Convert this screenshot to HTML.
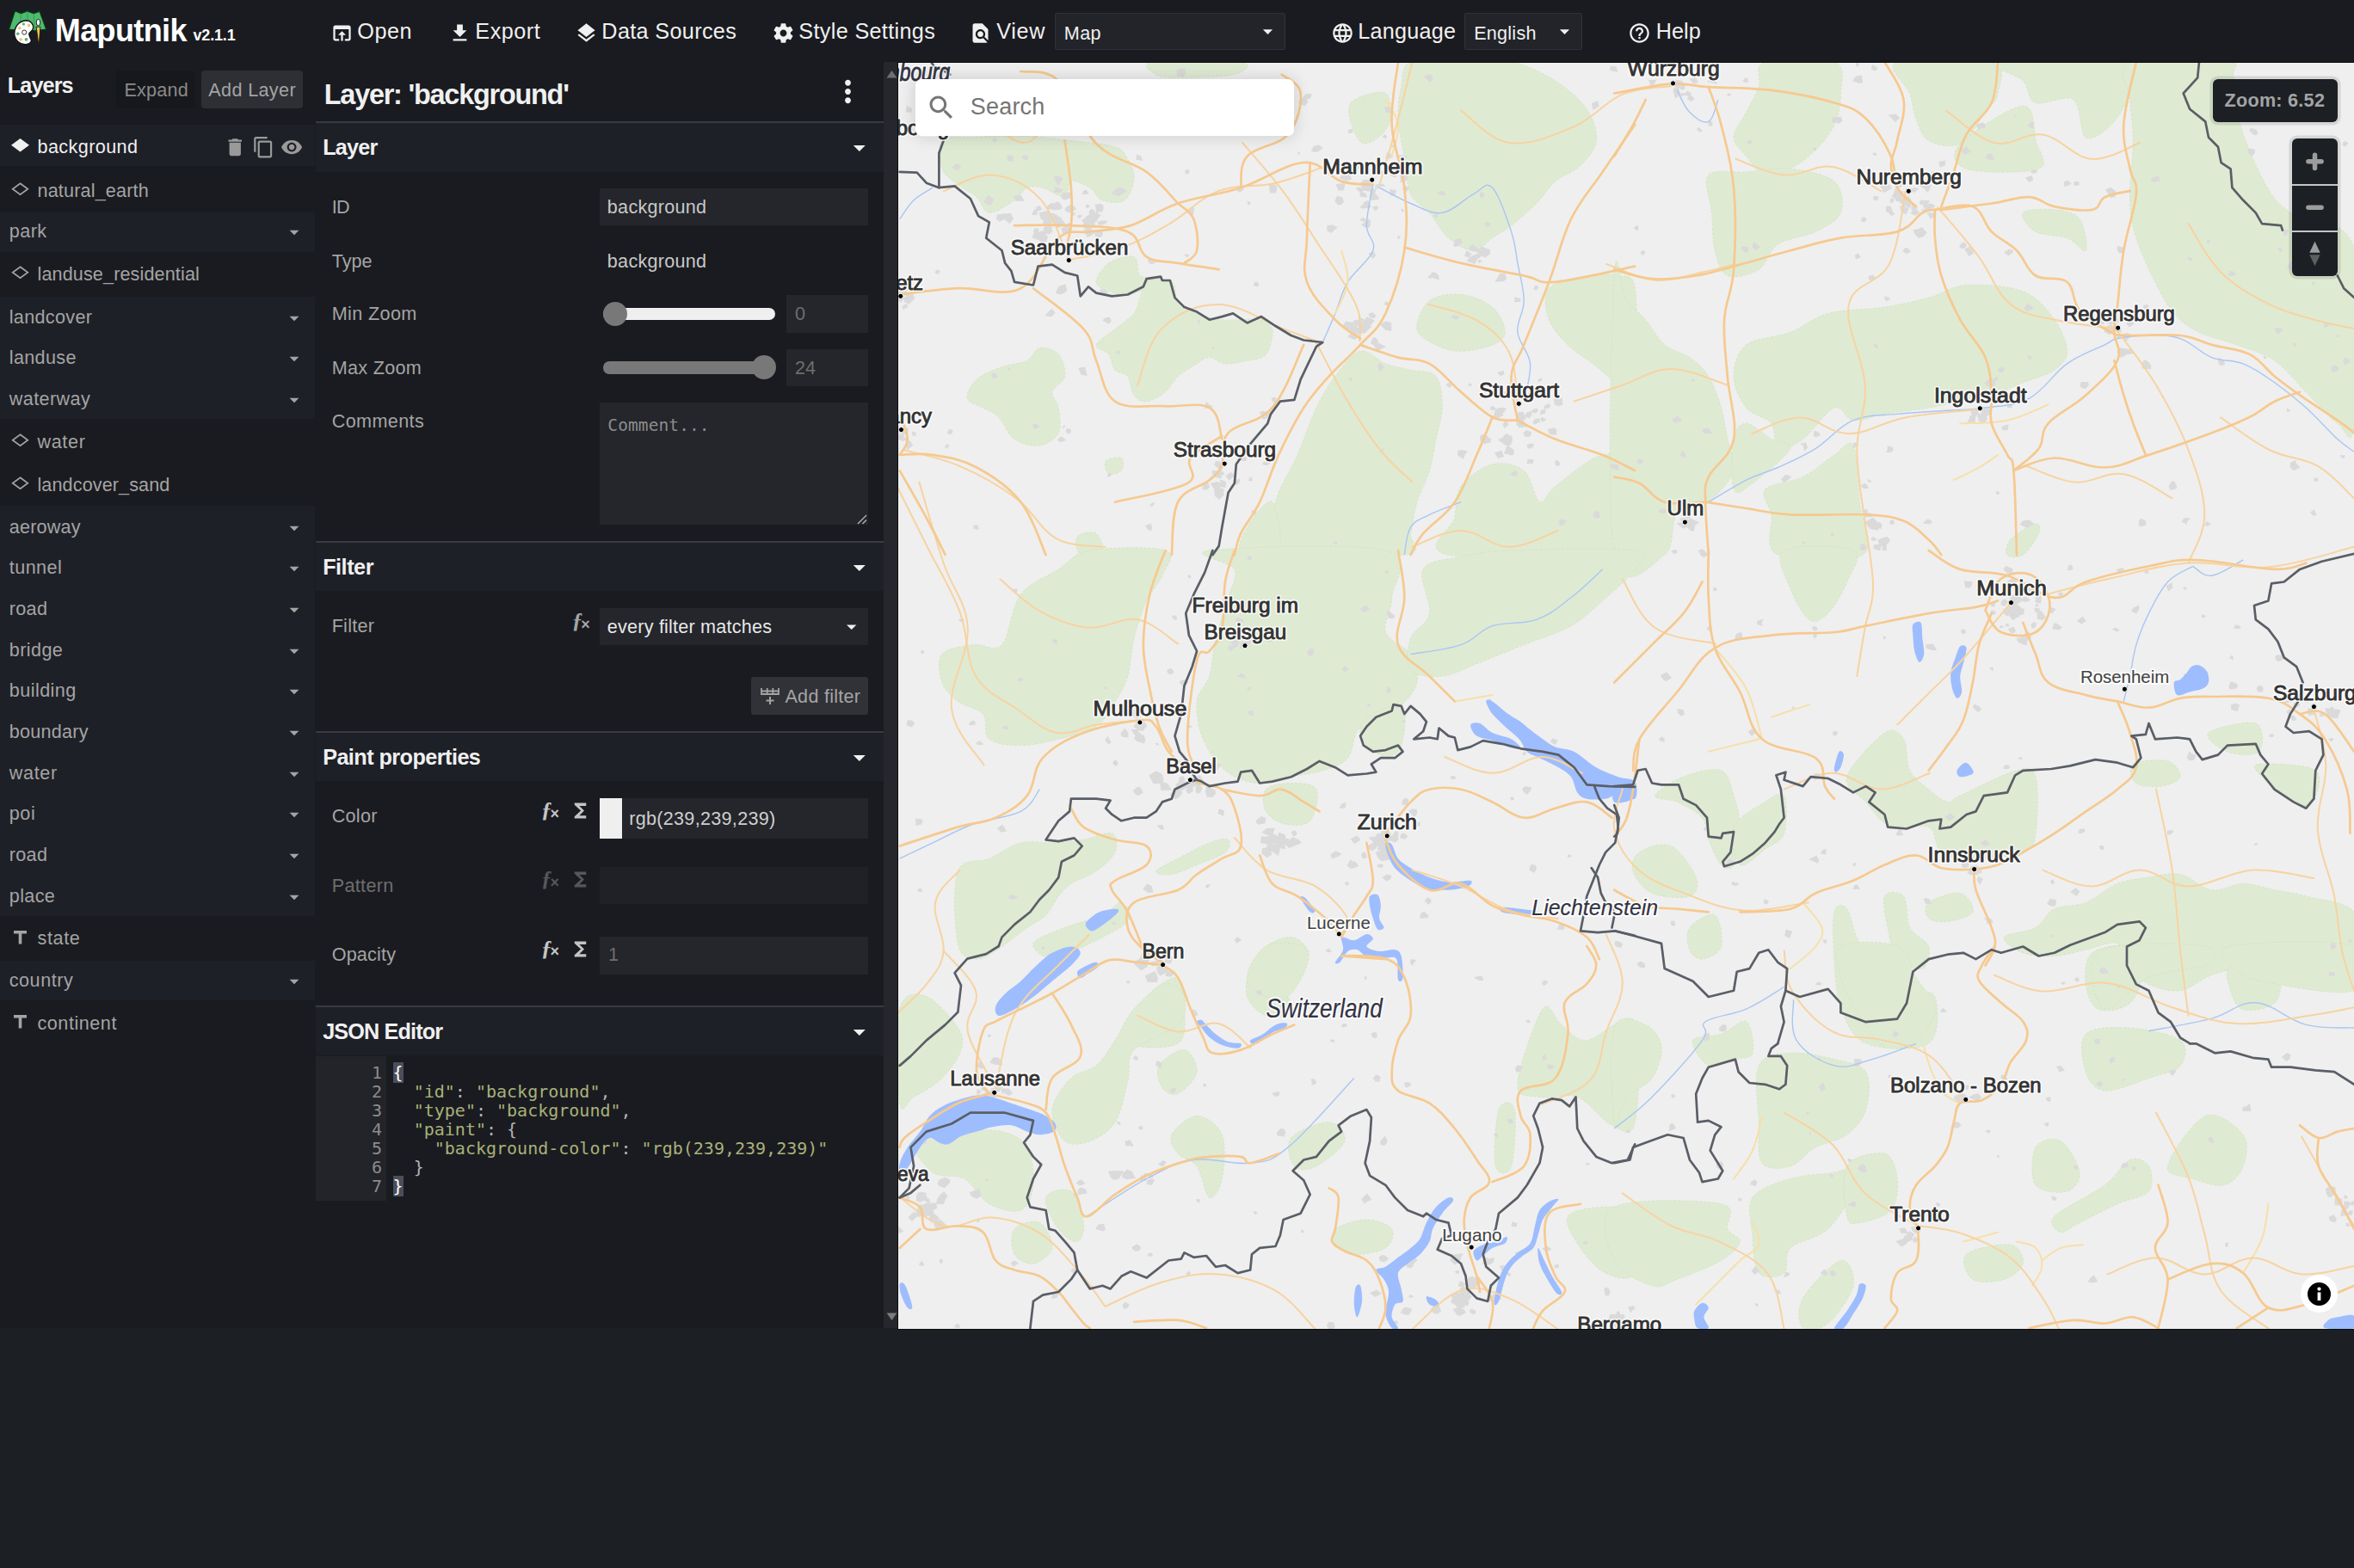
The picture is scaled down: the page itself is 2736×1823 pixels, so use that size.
<!DOCTYPE html>
<html lang="en"><head><meta charset="utf-8"><title>Maputnik</title><style>
html,body{margin:0;padding:0;}
body{width:2736px;height:1823px;overflow:hidden;background:#1c1f24;font-family:"Liberation Sans",sans-serif;position:relative;}
.t{position:absolute;white-space:pre;font-weight:400;font-kerning:normal;}
.ic{position:absolute;display:block;overflow:visible;}
.cmn{font-family:'DejaVu Sans Mono', 'Liberation Mono', monospace;font-size:20px;line-height:21.9px;color:#8c8c8c;text-align:right;}
.cml{font-family:'DejaVu Sans Mono', 'Liberation Mono', monospace;font-size:20px;line-height:21.9px;color:#b4b4b4;}
.cs{color:#a8b17a;}
.cp{color:#b4b4b4;}
.cb{color:#fff;background:#4b4e5b;}
</style></head>
<body>
<div class="toolbar" style="position:absolute;left:0;top:0;width:2736px;height:72px;background:#1a1b20"><svg class="ic" style="left:0;top:0" width="64" height="60" viewBox="0 0 64 60"><polygon points="10.4,34.1 17.4,12.7 24.4,15.6 31.7,12.9 39.1,15.6 46.1,13.2 53.7,34.1 40.7,35.6 32.1,34.7 23.1,35.6" fill="#50b86f" stroke="#053d12" stroke-width="1.3" stroke-linejoin="round"/><path d="M24.4 15.6L23.1 35.6" stroke="#2f9a52" stroke-width="0.9"/><path d="M31.7 12.9L32.4 34.7" stroke="#2f9a52" stroke-width="0.9"/><path d="M39.1 15.6L40.7 35.6" stroke="#2f9a52" stroke-width="0.9"/><path d="M31.1 23.7C35.9 24.2 39.1 28.3 38.6 32.5C38.4 35.3 35.9 36.6 34.3 38.2C32.7 39.8 34.6 42.7 36.2 46.2C37.2 49.0 33.6 51.9 29.2 51.7C23.1 51.6 17.4 47.1 16.8 40.4C16.3 33.1 20.6 23.9 31.1 23.7z" fill="#fff" stroke="#101216" stroke-width="1.4"/><circle cx="27.4" cy="28.0" r="1.6" fill="#5fae7c"/><circle cx="33.6" cy="29.6" r="1.8" fill="#ecc766"/><circle cx="22.8" cy="32.8" r="1.8" fill="#ecc766"/><circle cx="20.7" cy="39.2" r="1.8" fill="#5fae7c"/><circle cx="24.1" cy="45.8" r="1.9" fill="#ecc766"/><circle cx="30.5" cy="45.8" r="1.9" fill="#5fae7c"/><circle cx="28.2" cy="37.6" r="2.6" fill="#fff" stroke="#333" stroke-width="1"/><ellipse cx="44.5" cy="26.1" rx="2.3" ry="3.7" fill="#f4fff4" stroke="#0a1a0c" stroke-width="0.9"/><polygon points="42.1,31.2 46.9,31.2 45.4,50.6 44.6,50.6" fill="#eac459" stroke="#1a1508" stroke-width="0.9" stroke-linejoin="round"/></svg><span class="t" style="left:63.80px;top:11.52px;font-size:36px;line-height:47px;color:#fff;font-weight:700;letter-spacing:-0.608px;">Maputnik</span><span class="t" style="left:224.50px;top:29.86px;font-size:18px;line-height:23px;color:#fff;font-weight:700;letter-spacing:-0.171px;">v2.1.1</span><svg class="ic" style="left:383.62px;top:25.40px;" width="27" height="27" viewBox="0 0 24 24" fill="#f0f0f0"><path d="M19 4H5c-1.11 0-2 .9-2 2v12c0 1.1.89 2 2 2h4v-2H5V8h14v10h-4v2h4c1.1 0 2-.9 2-2V6c0-1.1-.89-2-2-2zm-7 6l-4 4h3v6h2v-6h3l-4-4z"/></svg><span class="t" style="left:415.37px;top:20.26px;font-size:25.2px;line-height:33px;color:#f0f0f0;letter-spacing:0.535px;">Open</span><svg class="ic" style="left:521.38px;top:25.40px;" width="27" height="27" viewBox="0 0 24 24" fill="#f0f0f0"><path d="M19 9h-4V3H9v6H5l7 7 7-7zM5 18v2h14v-2H5z"/></svg><span class="t" style="left:552.37px;top:20.26px;font-size:25.2px;line-height:33px;color:#f0f0f0;letter-spacing:0.495px;">Export</span><svg class="ic" style="left:667.62px;top:25.40px;" width="27" height="27" viewBox="0 0 24 24" fill="#f0f0f0"><path d="M11.99 18.54l-7.37-5.73L3 14.07l9 7 9-7-1.63-1.27-7.38 5.74zM12 16l7.36-5.73L21 9l-9-7-9 7 1.63 1.27L12 16z"/></svg><span class="t" style="left:699.37px;top:20.26px;font-size:25.2px;line-height:33px;color:#f0f0f0;letter-spacing:0.346px;">Data Sources</span><svg class="ic" style="left:897.41px;top:25.40px;" width="27" height="27" viewBox="0 0 24 24" fill="#f0f0f0"><path d="M19.43 12.98c.04-.32.07-.64.07-.98s-.03-.66-.07-.98l2.11-1.65c.19-.15.24-.42.12-.64l-2-3.46c-.12-.22-.39-.3-.61-.22l-2.49 1c-.52-.4-1.08-.73-1.69-.98l-.38-2.65C14.46 2.18 14.25 2 14 2h-4c-.25 0-.46.18-.49.42l-.38 2.65c-.61.25-1.17.59-1.69.98l-2.49-1c-.23-.09-.49 0-.61.22l-2 3.46c-.13.22-.07.49.12.64l2.11 1.65c-.04.32-.07.65-.07.98s.03.66.07.98l-2.11 1.65c-.19.15-.24.42-.12.64l2 3.46c.12.22.39.3.61.22l2.49-1c.52.4 1.08.73 1.69.98l.38 2.65c.03.24.24.42.49.42h4c.25 0 .46-.18.49-.42l.38-2.65c.61-.25 1.17-.59 1.69-.98l2.49 1c.23.09.49 0 .61-.22l2-3.46c.12-.22.07-.49-.12-.64l-2.11-1.65zM12 15.5c-1.93 0-3.5-1.57-3.5-3.5s1.57-3.5 3.5-3.5 3.5 1.57 3.5 3.5-1.57 3.5-3.5 3.5z"/></svg><span class="t" style="left:928.37px;top:20.26px;font-size:25.2px;line-height:33px;color:#f0f0f0;letter-spacing:0.339px;">Style Settings</span><svg class="ic" style="left:1126.10px;top:25.40px;" width="27" height="27" viewBox="0 0 24 24" fill="#f0f0f0"><path d="M20 19.59V8l-6-6H6c-1.1 0-1.99.9-1.99 2L4 20c0 1.1.89 2 1.99 2H18c.45 0 .85-.15 1.19-.4l-4.43-4.43c-.8.52-1.74.83-2.76.83-2.76 0-5-2.24-5-5s2.24-5 5-5 5 2.24 5 5c0 1.02-.31 1.96-.83 2.75L20 19.59zM9 13c0 1.66 1.34 3 3 3s3-1.34 3-3-1.34-3-3-3-3 1.34-3 3z"/></svg><span class="t" style="left:1158.37px;top:20.26px;font-size:25.2px;line-height:33px;color:#f0f0f0;letter-spacing:0.656px;">View</span><svg class="ic" style="left:1546.75px;top:25.40px;" width="27" height="27" viewBox="0 0 24 24" fill="#f0f0f0"><path d="M11.99 2C6.47 2 2 6.48 2 12s4.47 10 9.99 10C17.52 22 22 17.52 22 12S17.52 2 11.99 2zm6.93 6h-2.95c-.32-1.25-.78-2.45-1.38-3.56 1.84.63 3.37 1.91 4.33 3.56zM12 4.04c.83 1.2 1.48 2.53 1.91 3.96h-3.82c.43-1.43 1.08-2.76 1.91-3.96zM4.26 14C4.1 13.36 4 12.69 4 12s.1-1.36.26-2h3.38c-.08.66-.14 1.32-.14 2 0 .68.06 1.34.14 2H4.26zm.82 2h2.95c.32 1.25.78 2.45 1.38 3.56-1.84-.63-3.37-1.9-4.33-3.56zm2.95-8H5.08c.96-1.66 2.49-2.93 4.33-3.56C8.81 5.55 8.35 6.75 8.03 8zM12 19.96c-.83-1.2-1.48-2.53-1.91-3.96h3.82c-.43 1.43-1.08 2.76-1.91 3.96zM14.34 14H9.66c-.09-.66-.16-1.32-.16-2 0-.68.07-1.35.16-2h4.68c.09.65.16 1.32.16 2 0 .68-.07 1.34-.16 2zm.25 5.56c.6-1.11 1.06-2.31 1.38-3.56h2.95c-.96 1.65-2.49 2.93-4.33 3.56zM16.36 14c.08-.66.14-1.32.14-2 0-.68-.06-1.34-.14-2h3.38c.16.64.26 1.31.26 2s-.1 1.36-.26 2h-3.38z"/></svg><span class="t" style="left:1578.37px;top:20.26px;font-size:25.2px;line-height:33px;color:#f0f0f0;letter-spacing:0.211px;">Language</span><svg class="ic" style="left:1892.35px;top:25.40px;" width="27" height="27" viewBox="0 0 24 24" fill="#f0f0f0"><path d="M11 18h2v-2h-2v2zm1-16C6.48 2 2 6.48 2 12s4.48 10 10 10 10-4.48 10-10S17.52 2 12 2zm0 18c-4.41 0-8-3.59-8-8s3.59-8 8-8 8 3.59 8 8-3.59 8-8 8zm0-14c-2.21 0-4 1.79-4 4h2c0-1.1.9-2 2-2s2 .9 2 2c0 2-3 1.75-3 5h2c0-2.25 3-2.5 3-5 0-2.21-1.79-4-4-4z"/></svg><span class="t" style="left:1924.77px;top:20.26px;font-size:25.2px;line-height:33px;color:#f0f0f0;letter-spacing:0.063px;">Help</span><div class="sel" style="position:absolute;left:1226.00px;top:15.00px;width:268.00px;height:43.00px;background:#222429;border:1.5px solid #303237;box-sizing:border-box;border-radius:2px;"></div><span class="t" style="left:1236.86px;top:24.81px;font-size:21.6px;line-height:28px;color:#f0f0f0;letter-spacing:0.332px;">Map</span><svg class="ic" style="left:1460.12px;top:22.50px;" width="27" height="27" viewBox="0 0 24 24" fill="#f0f0f0"><path d="M7 10l5 5 5-5z"/></svg><div class="sel" style="position:absolute;left:1702.00px;top:15.00px;width:137.00px;height:43.00px;background:#222429;border:1.5px solid #303237;box-sizing:border-box;border-radius:2px;"></div><span class="t" style="left:1713.16px;top:24.81px;font-size:21.6px;line-height:28px;color:#f0f0f0;letter-spacing:0.241px;">English</span><svg class="ic" style="left:1805.12px;top:22.50px;" width="27" height="27" viewBox="0 0 24 24" fill="#f0f0f0"><path d="M7 10l5 5 5-5z"/></svg></div>
<div class="layers" style="position:absolute;left:0;top:72px;width:366.4px;height:1472px;background:#1a1b20"><div style="position:absolute;left:0;top:-72px"><span class="t" style="left:8.74px;top:83.46px;font-size:25.2px;line-height:33px;color:#f0f0f0;font-weight:700;letter-spacing:-0.871px;">Layers</span><div style="position:absolute;left:134.60px;top:82.30px;width:92.70px;height:43.80px;background:#17181c;border-radius:3px;"></div><span class="t" style="left:144.46px;top:91.01px;font-size:21.6px;line-height:28px;color:#8a8a8a;letter-spacing:0.210px;">Expand</span><div style="position:absolute;left:234.00px;top:82.30px;width:118.00px;height:43.80px;background:#2d2f35;border-radius:4px;"></div><span class="t" style="left:242.26px;top:91.01px;font-size:21.6px;line-height:28px;color:#a4a4a4;letter-spacing:0.364px;">Add Layer</span><div style="position:absolute;left:0.00px;top:145.30px;width:366.40px;height:47.90px;background:#1e2027;"></div><svg class="ic" style="left:13px;top:160.70px" width="21" height="15.4" viewBox="0 0 21 15.4"><path d="M10.5 0L21 7.700 10.500 15.400 0 7.700z" fill="#f0f0f0"/></svg><span class="t" style="left:43.46px;top:156.71px;font-size:21.6px;line-height:28px;color:#f0f0f0;letter-spacing:0.415px;">background</span><svg class="ic" style="left:260.08px;top:158.29px;" width="26.5" height="26.5" viewBox="0 0 24 24" fill="#9a9a9a"><path d="M6 19c0 1.1.9 2 2 2h8c1.1 0 2-.9 2-2V7H6v12zM19 4h-3.5l-1-1h-5l-1 1H5v2h14V4z"/></svg><svg class="ic" style="left:292.59px;top:158.30px;" width="26.5" height="26.5" viewBox="0 0 24 24" fill="#9a9a9a"><path d="M16 1H4c-1.1 0-2 .9-2 2v14h2V3h12V1zm3 4H8c-1.1 0-2 .9-2 2v14c0 1.1.9 2 2 2h11c1.1 0 2-.9 2-2V7c0-1.1-.9-2-2-2zm0 16H8V7h11v14z"/></svg><svg class="ic" style="left:325.91px;top:158.09px;" width="26.2" height="26.2" viewBox="0 0 24 24" fill="#9a9a9a"><path d="M12 4.5C7 4.5 2.73 7.61 1 12c1.73 4.39 6 7.500 11 7.500s9.270-3.110 11-7.500c-1.730-4.390-6-7.500-11-7.500zM12 17c-2.760 0-5-2.240-5-5s2.240-5 5-5 5 2.240 5 5-2.240 5-5 5zm0-8c-1.660 0-3 1.340-3 3s1.340 3 3 3 3-1.340 3-3-1.340-3-3-3z"/></svg><svg class="ic" style="left:13px;top:211.50px" width="21" height="15.4" viewBox="0 0 21 15.4"><path d="M10.5 1.2L19.300 7.700 10.500 14.200 1.700 7.700z" fill="none" stroke="#a4a4a4" stroke-width="1.7"/></svg><span class="t" style="left:43.46px;top:207.51px;font-size:21.6px;line-height:28px;color:#a4a4a4;letter-spacing:0.173px;">natural_earth</span><div style="position:absolute;left:0.00px;top:246.50px;width:366.40px;height:46.10px;background:#1e2027;"></div><span class="t" style="left:10.76px;top:255.01px;font-size:21.6px;line-height:28px;color:#a4a4a4;letter-spacing:0.449px;">park</span><svg class="ic" style="left:329.42px;top:257.00px;" width="26" height="26" viewBox="0 0 24 24" fill="#a4a4a4"><path d="M7 10l5 5 5-5z"/></svg><svg class="ic" style="left:13px;top:309.30px" width="21" height="15.4" viewBox="0 0 21 15.4"><path d="M10.5 1.2L19.300 7.700 10.500 14.200 1.700 7.700z" fill="none" stroke="#a4a4a4" stroke-width="1.7"/></svg><span class="t" style="left:43.46px;top:305.31px;font-size:21.6px;line-height:28px;color:#a4a4a4;letter-spacing:0.128px;">landuse_residential</span><div style="position:absolute;left:0.00px;top:345.00px;width:366.40px;height:47.40px;background:#1e2027;"></div><span class="t" style="left:10.76px;top:354.81px;font-size:21.6px;line-height:28px;color:#a4a4a4;letter-spacing:0.319px;">landcover</span><svg class="ic" style="left:329.42px;top:356.80px;" width="26" height="26" viewBox="0 0 24 24" fill="#a4a4a4"><path d="M7 10l5 5 5-5z"/></svg><div style="position:absolute;left:0.00px;top:392.40px;width:366.40px;height:47.50px;background:#1e2027;"></div><span class="t" style="left:10.76px;top:402.21px;font-size:21.6px;line-height:28px;color:#a4a4a4;letter-spacing:0.337px;">landuse</span><svg class="ic" style="left:329.42px;top:404.20px;" width="26" height="26" viewBox="0 0 24 24" fill="#a4a4a4"><path d="M7 10l5 5 5-5z"/></svg><div style="position:absolute;left:0.00px;top:439.90px;width:366.40px;height:47.50px;background:#1e2027;"></div><span class="t" style="left:10.76px;top:449.71px;font-size:21.6px;line-height:28px;color:#a4a4a4;letter-spacing:0.412px;">waterway</span><svg class="ic" style="left:329.42px;top:451.70px;" width="26" height="26" viewBox="0 0 24 24" fill="#a4a4a4"><path d="M7 10l5 5 5-5z"/></svg><svg class="ic" style="left:13px;top:503.80px" width="21" height="15.4" viewBox="0 0 21 15.4"><path d="M10.5 1.2L19.300 7.700 10.500 14.200 1.700 7.700z" fill="none" stroke="#a4a4a4" stroke-width="1.7"/></svg><span class="t" style="left:43.46px;top:499.81px;font-size:21.6px;line-height:28px;color:#a4a4a4;letter-spacing:0.640px;">water</span><svg class="ic" style="left:13px;top:554.30px" width="21" height="15.4" viewBox="0 0 21 15.4"><path d="M10.5 1.2L19.300 7.700 10.500 14.200 1.700 7.700z" fill="none" stroke="#a4a4a4" stroke-width="1.7"/></svg><span class="t" style="left:43.46px;top:550.31px;font-size:21.6px;line-height:28px;color:#a4a4a4;letter-spacing:0.110px;">landcover_sand</span><div style="position:absolute;left:0.00px;top:588.20px;width:366.40px;height:47.80px;background:#1e2027;"></div><span class="t" style="left:10.76px;top:598.51px;font-size:21.6px;line-height:28px;color:#a4a4a4;letter-spacing:0.198px;">aeroway</span><svg class="ic" style="left:329.42px;top:600.50px;" width="26" height="26" viewBox="0 0 24 24" fill="#a4a4a4"><path d="M7 10l5 5 5-5z"/></svg><div style="position:absolute;left:0.00px;top:636.00px;width:366.40px;height:47.50px;background:#1e2027;"></div><span class="t" style="left:10.76px;top:646.31px;font-size:21.6px;line-height:28px;color:#a4a4a4;letter-spacing:0.445px;">tunnel</span><svg class="ic" style="left:329.42px;top:648.30px;" width="26" height="26" viewBox="0 0 24 24" fill="#a4a4a4"><path d="M7 10l5 5 5-5z"/></svg><div style="position:absolute;left:0.00px;top:683.50px;width:366.40px;height:47.50px;background:#1e2027;"></div><span class="t" style="left:10.76px;top:693.81px;font-size:21.6px;line-height:28px;color:#a4a4a4;letter-spacing:0.319px;">road</span><svg class="ic" style="left:329.42px;top:695.80px;" width="26" height="26" viewBox="0 0 24 24" fill="#a4a4a4"><path d="M7 10l5 5 5-5z"/></svg><div style="position:absolute;left:0.00px;top:731.00px;width:366.40px;height:47.50px;background:#1e2027;"></div><span class="t" style="left:10.76px;top:741.61px;font-size:21.6px;line-height:28px;color:#a4a4a4;letter-spacing:0.413px;">bridge</span><svg class="ic" style="left:329.42px;top:743.60px;" width="26" height="26" viewBox="0 0 24 24" fill="#a4a4a4"><path d="M7 10l5 5 5-5z"/></svg><div style="position:absolute;left:0.00px;top:778.50px;width:366.40px;height:47.50px;background:#1e2027;"></div><span class="t" style="left:10.76px;top:789.21px;font-size:21.6px;line-height:28px;color:#a4a4a4;letter-spacing:0.445px;">building</span><svg class="ic" style="left:329.42px;top:791.20px;" width="26" height="26" viewBox="0 0 24 24" fill="#a4a4a4"><path d="M7 10l5 5 5-5z"/></svg><div style="position:absolute;left:0.00px;top:826.00px;width:366.40px;height:47.60px;background:#1e2027;"></div><span class="t" style="left:10.76px;top:836.91px;font-size:21.6px;line-height:28px;color:#a4a4a4;letter-spacing:0.246px;">boundary</span><svg class="ic" style="left:329.42px;top:838.90px;" width="26" height="26" viewBox="0 0 24 24" fill="#a4a4a4"><path d="M7 10l5 5 5-5z"/></svg><div style="position:absolute;left:0.00px;top:873.60px;width:366.40px;height:47.60px;background:#1e2027;"></div><span class="t" style="left:10.76px;top:884.51px;font-size:21.6px;line-height:28px;color:#a4a4a4;letter-spacing:0.640px;">water</span><svg class="ic" style="left:329.42px;top:886.50px;" width="26" height="26" viewBox="0 0 24 24" fill="#a4a4a4"><path d="M7 10l5 5 5-5z"/></svg><div style="position:absolute;left:0.00px;top:921.20px;width:366.40px;height:47.60px;background:#1e2027;"></div><span class="t" style="left:10.76px;top:932.11px;font-size:21.6px;line-height:28px;color:#a4a4a4;letter-spacing:0.561px;">poi</span><svg class="ic" style="left:329.42px;top:934.10px;" width="26" height="26" viewBox="0 0 24 24" fill="#a4a4a4"><path d="M7 10l5 5 5-5z"/></svg><div style="position:absolute;left:0.00px;top:968.80px;width:366.40px;height:48.20px;background:#1e2027;"></div><span class="t" style="left:10.76px;top:980.11px;font-size:21.6px;line-height:28px;color:#a4a4a4;letter-spacing:0.319px;">road</span><svg class="ic" style="left:329.42px;top:982.10px;" width="26" height="26" viewBox="0 0 24 24" fill="#a4a4a4"><path d="M7 10l5 5 5-5z"/></svg><div style="position:absolute;left:0.00px;top:1017.00px;width:366.40px;height:48.20px;background:#1e2027;"></div><span class="t" style="left:10.76px;top:1027.81px;font-size:21.6px;line-height:28px;color:#a4a4a4;letter-spacing:0.377px;">place</span><svg class="ic" style="left:329.42px;top:1029.80px;" width="26" height="26" viewBox="0 0 24 24" fill="#a4a4a4"><path d="M7 10l5 5 5-5z"/></svg><svg class="ic" style="left:15.8px;top:1081.90px" width="15" height="15.600" viewBox="0 0 15 15.6"><path d="M0 0h15v3.400H9.300v12.200H5.700V3.400H0z" fill="#a4a4a4"/></svg><span class="t" style="left:43.46px;top:1077.21px;font-size:21.6px;line-height:28px;color:#a4a4a4;letter-spacing:0.637px;">state</span><div style="position:absolute;left:0.00px;top:1117.40px;width:366.40px;height:46.10px;background:#1e2027;"></div><span class="t" style="left:10.76px;top:1126.31px;font-size:21.6px;line-height:28px;color:#a4a4a4;letter-spacing:0.529px;">country</span><svg class="ic" style="left:329.42px;top:1128.30px;" width="26" height="26" viewBox="0 0 24 24" fill="#a4a4a4"><path d="M7 10l5 5 5-5z"/></svg><svg class="ic" style="left:15.8px;top:1180.20px" width="15" height="15.600" viewBox="0 0 15 15.6"><path d="M0 0h15v3.400H9.300v12.200H5.700V3.400H0z" fill="#a4a4a4"/></svg><span class="t" style="left:43.46px;top:1175.51px;font-size:21.6px;line-height:28px;color:#a4a4a4;letter-spacing:0.541px;">continent</span></div></div>
<div class="editor" style="position:absolute;left:366.4px;top:72px;width:678.4px;height:1472px;background:#1a1b20"><div style="position:absolute;left:-366.4px;top:-72px"><span class="t" style="left:376.78px;top:89.37px;font-size:32.4px;line-height:42px;color:#f0f0f0;font-weight:700;letter-spacing:-1.215px;">Layer: &#x27;background&#x27;</span><svg class="ic" style="left:964.50px;top:86.00px;" width="41" height="41" viewBox="0 0 24 24" fill="#f0f0f0"><path d="M12 8c1.1 0 2-.9 2-2s-.9-2-2-2-2 .9-2 2 .9 2 2 2zm0 2c-1.1 0-2 .9-2 2s.9 2 2 2 2-.9 2-2-.9-2-2-2zm0 6c-1.1 0-2 .9-2 2s.9 2 2 2 2-.9 2-2-.9-2-2-2z"/></svg><div style="position:absolute;left:366.50px;top:141.40px;width:660.50px;height:2.00px;background:#393b41;"></div><div style="position:absolute;left:366.50px;top:143.40px;width:660.50px;height:56.50px;background:#1e2027;"></div><span class="t" style="left:375.14px;top:154.86px;font-size:25.2px;line-height:33px;color:#f0f0f0;font-weight:700;letter-spacing:-0.762px;">Layer</span><svg class="ic" style="left:982.20px;top:155.20px;" width="33.6" height="33.6" viewBox="0 0 24 24" fill="#f0f0f0"><path d="M7 10l5 5 5-5z"/></svg><div style="position:absolute;left:366.50px;top:628.90px;width:660.50px;height:2.00px;background:#393b41;"></div><div style="position:absolute;left:366.50px;top:630.90px;width:660.50px;height:56.50px;background:#1e2027;"></div><span class="t" style="left:375.14px;top:642.76px;font-size:25.2px;line-height:33px;color:#f0f0f0;font-weight:700;letter-spacing:-0.448px;">Filter</span><svg class="ic" style="left:982.20px;top:643.10px;" width="33.6" height="33.6" viewBox="0 0 24 24" fill="#f0f0f0"><path d="M7 10l5 5 5-5z"/></svg><div style="position:absolute;left:366.50px;top:850.30px;width:660.50px;height:2.00px;background:#393b41;"></div><div style="position:absolute;left:366.50px;top:852.30px;width:660.50px;height:55.90px;background:#1e2027;"></div><span class="t" style="left:375.14px;top:863.86px;font-size:25.2px;line-height:33px;color:#f0f0f0;font-weight:700;letter-spacing:-0.534px;">Paint properties</span><svg class="ic" style="left:982.20px;top:864.20px;" width="33.6" height="33.6" viewBox="0 0 24 24" fill="#f0f0f0"><path d="M7 10l5 5 5-5z"/></svg><div style="position:absolute;left:366.50px;top:1169.00px;width:660.50px;height:2.00px;background:#393b41;"></div><div style="position:absolute;left:366.50px;top:1171.00px;width:660.50px;height:56.40px;background:#1e2027;"></div><span class="t" style="left:375.14px;top:1182.86px;font-size:25.2px;line-height:33px;color:#f0f0f0;font-weight:700;letter-spacing:-0.832px;">JSON Editor</span><svg class="ic" style="left:982.20px;top:1183.20px;" width="33.6" height="33.6" viewBox="0 0 24 24" fill="#f0f0f0"><path d="M7 10l5 5 5-5z"/></svg><span class="t" style="left:385.66px;top:227.01px;font-size:21.6px;line-height:28px;color:#a4a4a4;letter-spacing:-0.641px;">ID</span><div style="position:absolute;left:697.00px;top:218.60px;width:311.50px;height:43.10px;background:#24262b;"></div><span class="t" style="left:705.86px;top:227.01px;font-size:21.6px;line-height:28px;color:#c8c8c8;letter-spacing:0.255px;">background</span><span class="t" style="left:385.66px;top:289.51px;font-size:21.6px;line-height:28px;color:#a4a4a4;letter-spacing:0.046px;">Type</span><span class="t" style="left:705.86px;top:289.51px;font-size:21.6px;line-height:28px;color:#c8c8c8;letter-spacing:0.255px;">background</span><span class="t" style="left:385.66px;top:351.31px;font-size:21.6px;line-height:28px;color:#a4a4a4;letter-spacing:0.377px;">Min Zoom</span><span class="t" style="left:385.66px;top:413.81px;font-size:21.6px;line-height:28px;color:#a4a4a4;letter-spacing:0.314px;">Max Zoom</span><div style="position:absolute;left:701.40px;top:358.00px;width:199.80px;height:14.30px;background:#efefef;border-radius:7.2px;"></div><div style="position:absolute;left:701.40px;top:350.90px;width:28.00px;height:28.00px;background:#787878;border-radius:50%;"></div><div style="position:absolute;left:914.00px;top:343.20px;width:94.50px;height:43.40px;background:#24262b;"></div><span class="t" style="left:923.96px;top:351.31px;font-size:21.6px;line-height:28px;color:#6e6e6e;">0</span><div style="position:absolute;left:701.40px;top:420.40px;width:199.80px;height:14.30px;background:#787878;border-radius:7.2px;"></div><div style="position:absolute;left:873.80px;top:413.30px;width:28.00px;height:28.00px;background:#787878;border-radius:50%;"></div><div style="position:absolute;left:914.00px;top:405.60px;width:94.50px;height:43.40px;background:#24262b;"></div><span class="t" style="left:923.96px;top:413.81px;font-size:21.6px;line-height:28px;color:#6e6e6e;letter-spacing:-0.010px;">24</span><span class="t" style="left:385.66px;top:476.01px;font-size:21.6px;line-height:28px;color:#a4a4a4;letter-spacing:0.388px;">Comments</span><div style="position:absolute;left:697.00px;top:468.20px;width:311.50px;height:142.20px;background:#24262b;"></div><span class="t" style="left:706.31px;top:481.64px;font-size:19.5px;line-height:25px;color:#8c8c8c;font-family:'DejaVu Sans Mono', 'Liberation Mono', monospace;letter-spacing:0.096px;">Comment...</span><svg class="ic" style="left:996px;top:597.5px" width="12" height="12" viewBox="0 0 12 12"><path d="M1 11L11 1M6.500 11L11 6.500" stroke="#b8b8b8" stroke-width="1.3" fill="none"/></svg><span class="t" style="left:385.66px;top:714.01px;font-size:21.6px;line-height:28px;color:#a4a4a4;letter-spacing:0.252px;">Filter</span><span class="t" style="left:664.80px;top:708.00px;font-size:25px;line-height:28px;color:#a4a4a4;font-family:'Liberation Serif',serif;font-style:italic;font-weight:700;">ƒ</span><span class="t" style="left:675.30px;top:715.50px;font-size:18px;line-height:20px;color:#a4a4a4;font-weight:700;">×</span><div style="position:absolute;left:697.00px;top:706.70px;width:311.50px;height:43.20px;background:#24262b;"></div><span class="t" style="left:705.86px;top:714.61px;font-size:21.6px;line-height:28px;color:#e8e8e8;letter-spacing:0.205px;">every filter matches</span><svg class="ic" style="left:976.41px;top:714.80px;" width="27.4" height="27.4" viewBox="0 0 24 24" fill="#f0f0f0"><path d="M7 10l5 5 5-5z"/></svg><div style="position:absolute;left:873.00px;top:787.00px;width:135.50px;height:44.00px;background:#303237;border-radius:3px;"></div><svg class="ic" style="left:884px;top:799px" width="22" height="21" viewBox="0 0 22 21" fill="none" stroke="#a4a4a4" stroke-width="1.8"><path d="M1 1v7h20V1M7.700 1v7M14.300 1v7M1 4.500h20"/><path d="M11 11v9M6.500 15.500h9" stroke-width="2"/></svg><span class="t" style="left:912.46px;top:796.01px;font-size:21.6px;line-height:28px;color:#a4a4a4;letter-spacing:0.259px;">Add filter</span><span class="t" style="left:385.66px;top:935.41px;font-size:21.6px;line-height:28px;color:#a4a4a4;letter-spacing:0.281px;">Color</span><span class="t" style="left:629.00px;top:928.00px;font-size:25px;line-height:28px;color:#c4c4c4;font-family:'Liberation Serif',serif;font-style:italic;font-weight:700;">ƒ</span><span class="t" style="left:639.50px;top:935.50px;font-size:18px;line-height:20px;color:#c4c4c4;font-weight:700;">×</span><svg class="ic" style="left:661.05px;top:928.90px;" width="27" height="27" viewBox="0 0 24 24" fill="#c4c4c4"><path d="M18 4H6v2l6.500 6L6 18v2h12v-3h-7l5-5-5-5h7z"/></svg><div style="position:absolute;left:697.00px;top:927.50px;width:311.50px;height:47.60px;background:#24262b;"></div><div style="position:absolute;left:697.00px;top:927.50px;width:25.80px;height:47.60px;background:#efefef;"></div><span class="t" style="left:731.16px;top:937.51px;font-size:21.6px;line-height:28px;color:#cfcfcf;letter-spacing:0.295px;">rgb(239,239,239)</span><span class="t" style="left:385.66px;top:1015.71px;font-size:21.6px;line-height:28px;color:#6e6e6e;letter-spacing:0.341px;">Pattern</span><span class="t" style="left:629.00px;top:1008.30px;font-size:25px;line-height:28px;color:#55575b;font-family:'Liberation Serif',serif;font-style:italic;font-weight:700;">ƒ</span><span class="t" style="left:639.50px;top:1015.80px;font-size:18px;line-height:20px;color:#55575b;font-weight:700;">×</span><svg class="ic" style="left:661.05px;top:1009.20px;" width="27" height="27" viewBox="0 0 24 24" fill="#55575b"><path d="M18 4H6v2l6.500 6L6 18v2h12v-3h-7l5-5-5-5h7z"/></svg><div style="position:absolute;left:697.00px;top:1008.40px;width:311.50px;height:43.10px;background:#1f2126;"></div><span class="t" style="left:385.66px;top:1096.01px;font-size:21.6px;line-height:28px;color:#a4a4a4;letter-spacing:0.185px;">Opacity</span><span class="t" style="left:629.00px;top:1088.60px;font-size:25px;line-height:28px;color:#c4c4c4;font-family:'Liberation Serif',serif;font-style:italic;font-weight:700;">ƒ</span><span class="t" style="left:639.50px;top:1096.10px;font-size:18px;line-height:20px;color:#c4c4c4;font-weight:700;">×</span><svg class="ic" style="left:661.05px;top:1089.50px;" width="27" height="27" viewBox="0 0 24 24" fill="#c4c4c4"><path d="M18 4H6v2l6.500 6L6 18v2h12v-3h-7l5-5-5-5h7z"/></svg><div style="position:absolute;left:697.00px;top:1089.30px;width:311.50px;height:43.40px;background:#24262b;"></div><span class="t" style="left:707.06px;top:1096.01px;font-size:21.6px;line-height:28px;color:#6e6e6e;letter-spacing:-3.004px;">1</span><div style="position:absolute;left:366.50px;top:1228.20px;width:82.70px;height:168.10px;background:#222429;"></div><span class="t cmn" style="left:366.5px;width:77.5px;top:1237.13px;">1</span><span class="t cml" style="left:456.6px;top:1237.13px;"><span class="cb">{</span></span><span class="t cmn" style="left:366.5px;width:77.5px;top:1259.03px;">2</span><span class="t cml" style="left:456.6px;top:1259.03px;">  <span class="cs">&quot;id&quot;</span><span class="cp">: </span><span class="cs">&quot;background&quot;</span><span class="cp">,</span></span><span class="t cmn" style="left:366.5px;width:77.5px;top:1280.93px;">3</span><span class="t cml" style="left:456.6px;top:1280.93px;">  <span class="cs">&quot;type&quot;</span><span class="cp">: </span><span class="cs">&quot;background&quot;</span><span class="cp">,</span></span><span class="t cmn" style="left:366.5px;width:77.5px;top:1302.83px;">4</span><span class="t cml" style="left:456.6px;top:1302.83px;">  <span class="cs">&quot;paint&quot;</span><span class="cp">: {</span></span><span class="t cmn" style="left:366.5px;width:77.5px;top:1324.73px;">5</span><span class="t cml" style="left:456.6px;top:1324.73px;">    <span class="cs">&quot;background-color&quot;</span><span class="cp">: </span><span class="cs">&quot;rgb(239,239,239)&quot;</span></span><span class="t cmn" style="left:366.5px;width:77.5px;top:1346.63px;">6</span><span class="t cml" style="left:456.6px;top:1346.63px;"><span class="cp">  }</span></span><span class="t cmn" style="left:366.5px;width:77.5px;top:1368.53px;">7</span><span class="t cml" style="left:456.6px;top:1368.53px;"><span class="cb">}</span></span><div style="position:absolute;left:1027.00px;top:72.00px;width:17.80px;height:1472.00px;background:#25272c;"></div><svg class="ic" style="left:1029.5px;top:80.5px" width="13" height="10" viewBox="0 0 13 10"><path d="M0.500 9.500L6.500 1 12.500 9.500z" fill="#6f7073"/></svg><svg class="ic" style="left:1029.5px;top:1525.5px" width="13" height="10" viewBox="0 0 13 10"><path d="M0.500 0.500L6.500 9 12.500 0.500z" fill="#7b7b7b"/></svg></div></div>
<div class="map" style="position:absolute;left:1043.4px;top:72px;width:1692.6px;height:1474px;background:#efefef;overflow:hidden;border:1.300px solid #0b0c0e;border-right:0;box-sizing:border-box"><div style="position:absolute;left:-1044.7px;top:-73.3px;width:2736px;height:1823px"><svg class="ic" style="left:1044.8px;top:72px" width="1691.2" height="1472.8" viewBox="1044.8 72 1691.2 1472.8">
<rect x="1040" y="70" width="1700" height="1480" fill="#efefef"/>
<g fill="#dfead3" stroke="#cfe3bd" stroke-width="0.8" stroke-dasharray="3 2">
<path d="M1094.8 163.4C1100.9 157.3 1116.1 160.6 1131.4 159.7C1146.6 158.8 1167.3 157.3 1186.2 157.9C1205.1 158.5 1226.4 161.2 1244.7 163.4C1263.0 165.5 1284.9 167.0 1295.8 170.7C1306.8 174.3 1306.8 179.2 1310.5 185.3C1314.1 191.4 1318.4 199.3 1317.8 207.2C1317.2 215.2 1312.9 228.6 1306.8 232.8C1300.7 237.1 1287.9 235.3 1281.2 232.8C1274.5 230.4 1272.7 221.9 1266.6 218.2C1260.5 214.5 1249.6 209.1 1244.7 210.9C1239.8 212.7 1242.9 227.9 1237.4 229.2C1231.9 230.4 1219.1 220.0 1211.8 218.2C1204.5 216.4 1199.0 215.8 1193.5 218.2C1188.0 220.6 1186.2 227.9 1178.9 232.8C1171.6 237.7 1157.0 248.0 1149.6 247.4C1142.3 246.8 1141.1 234.6 1135.0 229.2C1128.9 223.7 1119.8 220.0 1113.1 214.5C1106.4 209.1 1097.9 204.8 1094.8 196.3C1091.8 187.7 1088.7 169.5 1094.8 163.4z"/>
<path d="M1288.5 305.9C1295.8 301.0 1311.7 296.2 1317.8 298.6C1323.9 301.0 1320.2 316.3 1325.1 320.5C1330.0 324.8 1345.8 321.8 1347.0 324.2C1348.2 326.6 1338.5 332.1 1332.4 335.2C1326.3 338.2 1317.8 341.9 1310.5 342.5C1303.2 343.1 1294.6 341.2 1288.5 338.8C1282.4 336.4 1273.9 333.3 1273.9 327.8C1273.9 322.4 1281.2 310.8 1288.5 305.9z"/>
<path d="M1332.4 327.8C1338.5 324.8 1355.5 324.2 1361.6 327.8C1367.7 331.5 1364.1 343.7 1368.9 349.8C1373.8 355.9 1382.3 360.7 1390.9 364.4C1399.4 368.1 1411.6 370.5 1420.1 371.7C1428.6 372.9 1434.7 371.7 1442.0 371.7C1449.4 371.7 1457.9 369.9 1464.0 371.7C1470.1 373.5 1477.4 376.0 1478.6 382.7C1479.8 389.4 1476.2 405.8 1471.3 411.9C1466.4 418.0 1457.3 417.4 1449.4 419.2C1441.4 421.0 1431.1 423.5 1423.8 422.9C1416.5 422.3 1411.0 415.6 1405.5 415.6C1400.0 415.6 1397.0 419.2 1390.9 422.9C1384.8 426.5 1375.0 432.0 1368.9 437.5C1362.9 443.0 1360.4 450.9 1354.3 455.8C1348.2 460.6 1338.5 466.1 1332.4 466.7C1326.3 467.3 1321.4 464.3 1317.8 459.4C1314.1 454.6 1314.1 442.4 1310.5 437.5C1306.8 432.6 1299.5 434.5 1295.8 430.2C1292.2 425.9 1292.2 416.8 1288.5 411.9C1284.9 407.0 1272.7 405.8 1273.9 400.9C1275.1 396.1 1288.5 388.8 1295.8 382.7C1303.2 376.6 1312.9 370.5 1317.8 364.4C1322.7 358.3 1322.7 352.2 1325.1 346.1C1327.5 340.0 1326.3 330.9 1332.4 327.8z"/>
<path d="M1124.1 463.1C1122.8 457.6 1128.3 447.2 1135.0 441.2C1141.7 435.1 1154.5 430.2 1164.3 426.5C1174.0 422.9 1186.2 422.9 1193.5 419.2C1200.8 415.6 1202.0 405.8 1208.1 404.6C1214.2 403.4 1225.2 406.4 1230.1 411.9C1234.9 417.4 1238.6 430.2 1237.4 437.5C1236.2 444.8 1224.0 449.7 1222.7 455.8C1221.5 461.9 1228.8 466.1 1230.1 474.0C1231.3 482.0 1233.7 496.0 1230.1 503.3C1226.4 510.6 1216.7 516.7 1208.1 517.9C1199.6 519.1 1186.8 516.1 1178.9 510.6C1171.0 505.1 1166.7 491.1 1160.6 485.0C1154.5 478.9 1148.4 477.7 1142.3 474.0C1136.2 470.4 1125.3 468.6 1124.1 463.1z"/>
<path d="M1639.4 72.0C1651.0 67.1 1678.4 72.0 1697.9 72.0C1717.4 72.0 1738.1 68.3 1756.4 72.0C1774.6 75.7 1792.9 84.8 1807.5 93.9C1822.2 103.1 1836.2 115.3 1844.1 126.8C1852.0 138.4 1856.3 152.4 1855.1 163.4C1853.8 174.3 1844.7 184.7 1836.8 192.6C1828.9 200.5 1816.1 203.6 1807.5 210.9C1799.0 218.2 1794.1 227.9 1785.6 236.5C1777.1 245.0 1764.9 255.4 1756.4 262.1C1747.8 268.8 1741.8 271.8 1734.4 276.7C1727.1 281.6 1721.0 291.3 1712.5 291.3C1704.0 291.3 1691.8 284.0 1683.3 276.7C1674.7 269.4 1668.7 256.0 1661.3 247.4C1654.0 238.9 1644.3 236.5 1639.4 225.5C1634.5 214.5 1634.5 196.3 1632.1 181.6C1629.7 167.0 1625.4 151.2 1624.8 137.8C1624.2 124.4 1626.0 112.2 1628.5 101.2C1630.9 90.3 1627.8 76.9 1639.4 72.0z"/>
<path d="M1570.0 119.5C1576.1 112.2 1602.9 104.3 1610.2 108.5C1617.5 112.8 1617.5 135.4 1613.8 145.1C1610.2 154.8 1594.9 165.8 1588.2 167.0C1581.5 168.2 1576.7 160.3 1573.6 152.4C1570.6 144.5 1563.9 126.8 1570.0 119.5z"/>
<path d="M1661.3 349.8C1669.9 343.1 1685.7 341.2 1697.9 342.5C1710.1 343.7 1725.9 349.8 1734.4 357.1C1743.0 364.4 1749.1 379.0 1749.1 386.3C1749.1 393.6 1743.0 397.3 1734.4 400.9C1725.9 404.6 1708.9 408.3 1697.9 408.3C1686.9 408.3 1677.2 405.2 1668.7 400.9C1660.1 396.7 1647.9 391.2 1646.7 382.7C1645.5 374.1 1652.8 356.5 1661.3 349.8z"/>
<path d="M1800.2 335.2C1807.5 326.6 1830.7 323.0 1844.1 320.5C1857.5 318.1 1871.3 318.1 1880.6 320.5C1890.0 323.0 1896.8 315.7 1900.0 335.2C1903.2 354.7 1903.2 419.2 1900.0 437.5C1896.8 455.8 1888.7 447.2 1880.6 444.8C1872.5 442.4 1861.2 430.2 1851.4 422.9C1841.7 415.6 1830.7 409.5 1822.2 400.9C1813.6 392.4 1803.9 382.7 1800.2 371.7C1796.6 360.7 1792.9 343.7 1800.2 335.2z"/>
<path d="M1478.6 645.1C1453.6 634.9 1477.4 603.1 1482.3 583.7C1487.1 564.3 1499.9 547.1 1507.8 528.9C1515.8 510.6 1522.5 489.3 1529.8 474.0C1537.1 458.8 1543.2 448.5 1551.7 437.5C1560.2 426.5 1571.2 410.7 1580.9 408.3C1590.7 405.8 1600.4 419.2 1610.2 422.9C1619.9 426.5 1629.7 427.8 1639.4 430.2C1649.2 432.6 1662.6 430.2 1668.7 437.5C1674.7 444.8 1676.0 461.9 1676.0 474.0C1676.0 486.2 1671.1 498.4 1668.7 510.6C1666.2 522.8 1665.0 535.0 1661.3 547.1C1657.7 559.3 1650.4 571.5 1646.7 583.7C1643.1 595.9 1641.9 610.0 1639.4 620.2C1637.0 630.5 1658.9 641.0 1632.1 645.1C1605.3 649.2 1503.6 655.3 1478.6 645.1z"/>
<path d="M1442.0 645.1C1436.0 639.7 1443.3 623.2 1449.4 612.9C1455.4 602.7 1472.5 578.3 1478.6 583.7C1484.7 589.1 1492.0 634.9 1485.9 645.1C1479.8 655.3 1448.1 650.5 1442.0 645.1z"/>
<path d="M1697.9 565.4C1705.2 555.1 1722.3 542.9 1734.4 539.8C1746.6 536.8 1761.9 539.8 1771.0 547.1C1780.1 554.5 1783.2 580.7 1789.3 583.7C1795.4 586.7 1795.4 574.6 1807.5 565.4C1819.7 556.3 1847.0 531.9 1862.4 528.9C1877.8 525.8 1893.7 527.8 1900.0 547.1C1906.3 566.5 1936.1 628.8 1900.0 645.1C1863.9 661.4 1718.2 652.3 1683.3 645.1C1648.4 637.9 1688.1 615.3 1690.6 602.0C1693.0 588.7 1690.6 575.8 1697.9 565.4z"/>
<path d="M1252.0 623.9C1255.0 619.8 1269.0 616.7 1273.9 620.2C1278.8 623.8 1284.3 641.0 1281.2 645.1C1278.2 649.2 1260.5 648.6 1255.6 645.1C1250.8 641.6 1248.9 628.0 1252.0 623.9z"/>
<path d="M1284.9 536.2C1287.3 533.1 1300.1 530.7 1303.2 532.5C1306.2 534.4 1305.6 544.1 1303.2 547.1C1300.7 550.2 1291.6 552.6 1288.5 550.8C1285.5 549.0 1282.4 539.2 1284.9 536.2z"/>
<path d="M1339.7 72.0C1356.2 69.6 1426.2 69.6 1442.0 72.0C1457.9 74.4 1446.9 83.6 1434.7 86.6C1422.6 89.7 1384.2 90.3 1368.9 90.3C1353.7 90.3 1348.2 89.7 1343.4 86.6C1338.5 83.6 1323.3 74.4 1339.7 72.0z"/>
<path d="M2051.4 72.0C2066.1 67.1 2117.2 65.9 2131.8 72.0C2146.5 78.1 2139.2 96.4 2139.2 108.5C2139.2 120.7 2136.7 134.1 2131.8 145.1C2127.0 156.1 2118.4 165.8 2109.9 174.3C2101.4 182.9 2090.4 191.4 2080.7 196.3C2070.9 201.1 2060.0 206.0 2051.4 203.6C2042.9 201.1 2035.6 189.0 2029.5 181.6C2023.4 174.3 2014.9 168.2 2014.9 159.7C2014.9 151.2 2024.6 140.2 2029.5 130.5C2034.4 120.7 2040.5 111.0 2044.1 101.2C2047.8 91.5 2036.8 76.9 2051.4 72.0z"/>
<path d="M2204.9 72.0C2220.8 65.9 2295.1 65.9 2314.6 72.0C2334.1 78.1 2323.1 98.8 2321.9 108.5C2320.7 118.3 2314.6 120.7 2307.3 130.5C2300.0 140.2 2289.0 161.5 2278.0 167.0C2267.1 172.5 2250.0 168.2 2241.5 163.4C2233.0 158.5 2230.5 146.9 2226.9 137.8C2223.2 128.7 2223.2 119.5 2219.6 108.5C2215.9 97.6 2189.1 78.1 2204.9 72.0z"/>
<path d="M2278.0 167.0C2289.0 154.8 2336.5 123.8 2351.1 123.2C2365.8 122.6 2362.7 151.2 2365.8 163.4C2368.8 175.6 2382.8 190.8 2369.4 196.3C2356.0 201.8 2300.6 201.1 2285.4 196.3C2270.1 191.4 2267.1 179.2 2278.0 167.0z"/>
<path d="M2321.9 72.0C2342.6 68.3 2449.8 65.9 2475.4 72.0C2501.0 78.1 2479.1 96.4 2475.4 108.5C2471.8 120.7 2462.0 136.6 2453.5 145.1C2445.0 153.6 2431.6 164.6 2424.2 159.7C2416.9 154.8 2419.4 122.6 2409.6 115.9C2399.9 109.2 2375.5 123.2 2365.8 119.5C2356.0 115.9 2358.5 101.8 2351.1 93.9C2343.8 86.0 2301.2 75.7 2321.9 72.0z"/>
<path d="M1985.6 203.6C1992.3 195.7 2013.7 201.1 2029.5 199.9C2045.3 198.7 2063.6 194.4 2080.7 196.3C2097.7 198.1 2122.1 202.4 2131.8 210.9C2141.6 219.4 2142.8 237.7 2139.2 247.4C2135.5 257.2 2122.1 263.3 2109.9 269.4C2097.7 275.5 2077.0 276.7 2066.1 284.0C2055.1 291.3 2053.9 307.1 2044.1 313.2C2034.4 319.3 2016.1 324.2 2007.6 320.5C1999.1 316.9 1996.0 303.5 1993.0 291.3C1989.9 279.1 1990.5 262.1 1989.3 247.4C1988.1 232.8 1978.9 211.5 1985.6 203.6z"/>
<path d="M2029.5 400.9C2040.5 392.4 2064.8 392.4 2080.7 386.3C2096.5 380.2 2106.3 369.3 2124.5 364.4C2142.8 359.5 2170.8 360.1 2190.3 357.1C2209.8 354.0 2225.7 350.4 2241.5 346.1C2257.3 341.9 2267.1 332.7 2285.4 331.5C2303.6 330.3 2334.1 332.1 2351.1 338.8C2368.2 345.5 2379.2 360.1 2387.7 371.7C2396.2 383.3 2402.3 398.5 2402.3 408.3C2402.3 418.0 2396.2 424.1 2387.7 430.2C2379.2 436.3 2363.3 439.9 2351.1 444.8C2339.0 449.7 2326.8 455.8 2314.6 459.4C2302.4 463.1 2290.2 464.3 2278.0 466.7C2265.9 469.2 2256.1 471.6 2241.5 474.0C2226.9 476.5 2204.9 478.9 2190.3 481.4C2175.7 483.8 2163.5 489.9 2153.8 488.7C2144.0 487.4 2141.6 470.4 2131.8 474.0C2122.1 477.7 2106.3 502.7 2095.3 510.6C2084.3 518.5 2072.2 524.6 2066.1 521.6C2060.0 518.5 2064.8 500.2 2058.7 492.3C2052.7 484.4 2036.8 483.2 2029.5 474.0C2022.2 464.9 2014.9 449.7 2014.9 437.5C2014.9 425.3 2018.5 409.5 2029.5 400.9z"/>
<path d="M2351.1 247.4C2354.8 243.2 2376.7 242.6 2387.7 243.8C2398.7 245.0 2410.8 246.8 2416.9 254.7C2423.0 262.7 2426.7 287.6 2424.2 291.3C2421.8 295.0 2412.1 280.3 2402.3 276.7C2392.6 273.0 2374.3 274.2 2365.8 269.4C2357.2 264.5 2347.5 251.7 2351.1 247.4z"/>
<path d="M2475.4 72.0C2494.3 64.7 2568.7 69.1 2588.7 72.0C2608.8 74.9 2593.1 76.8 2595.7 89.2C2598.2 101.5 2597.8 125.2 2604.1 146.2C2610.3 167.2 2623.5 198.0 2633.3 214.9C2643.1 231.8 2645.8 235.4 2662.9 247.8C2680.0 260.2 2723.8 248.4 2736.0 289.1C2748.2 329.9 2739.2 458.5 2736.0 492.3C2732.8 526.2 2726.0 498.4 2716.6 492.3C2707.3 486.2 2692.3 468.0 2680.1 455.8C2667.9 443.6 2656.9 428.4 2643.5 419.2C2630.1 410.1 2614.3 406.4 2599.7 400.9C2585.1 395.5 2568.0 392.4 2555.8 386.3C2543.6 380.2 2535.1 374.1 2526.6 364.4C2518.1 354.7 2512.0 342.5 2504.7 327.8C2497.3 313.2 2487.6 292.5 2482.7 276.7C2477.9 260.8 2476.0 251.7 2475.4 232.8C2474.8 213.9 2479.1 182.9 2479.1 163.4C2479.1 143.9 2476.0 131.1 2475.4 115.9C2474.8 100.6 2456.5 79.3 2475.4 72.0z"/>
<path d="M1876.0 320.5C1878.4 271.3 1884.5 341.2 1890.6 349.8C1896.7 358.3 1905.2 363.2 1912.5 371.7C1919.9 380.2 1926.0 393.6 1934.5 400.9C1943.0 408.3 1955.2 409.5 1963.7 415.6C1972.2 421.7 1979.6 427.8 1985.6 437.5C1991.7 447.2 1996.6 461.9 2000.3 474.0C2003.9 486.2 2005.1 498.4 2007.6 510.6C2010.0 522.8 2018.5 535.0 2014.9 547.1C2011.2 559.3 1996.6 575.2 1985.6 583.7C1974.7 592.2 1957.6 588.1 1949.1 598.3C1940.6 608.5 1946.7 637.3 1934.5 645.1C1922.3 652.9 1885.7 699.2 1876.0 645.1C1866.3 591.0 1873.6 369.8 1876.0 320.5z"/>
<path d="M2014.9 510.6C2017.3 497.8 2022.2 492.3 2029.5 492.3C2036.8 492.3 2050.2 505.7 2058.7 510.6C2067.3 515.5 2084.3 513.0 2080.7 521.6C2077.0 530.1 2047.8 553.8 2036.8 561.8C2025.9 569.7 2018.5 577.6 2014.9 569.1C2011.2 560.5 2012.5 523.4 2014.9 510.6z"/>
<path d="M2051.4 569.1C2057.5 561.8 2081.9 561.2 2095.3 554.5C2108.7 547.8 2122.1 535.0 2131.8 528.9C2141.6 522.8 2148.9 508.8 2153.8 517.9C2158.7 527.0 2159.3 562.5 2161.1 583.7C2162.9 604.9 2180.6 634.9 2164.7 645.1C2148.9 655.3 2083.7 652.9 2066.1 645.1C2048.4 637.3 2061.2 611.0 2058.7 598.3C2056.3 585.6 2045.3 576.4 2051.4 569.1z"/>
<path d="M2336.5 627.6C2342.0 621.6 2360.3 610.5 2365.8 609.3C2371.2 608.1 2371.9 614.3 2369.4 620.2C2367.0 626.2 2357.2 641.0 2351.1 645.1C2345.1 649.2 2335.3 648.0 2332.9 645.1C2330.4 642.2 2331.0 633.5 2336.5 627.6z"/>
<path d="M1094.8 760.6C1100.9 753.3 1119.8 751.5 1131.4 749.6C1142.9 747.8 1155.1 759.4 1164.3 749.6C1173.4 739.9 1175.2 705.8 1186.2 691.2C1197.2 676.5 1216.7 670.5 1230.1 661.9C1243.5 653.4 1245.9 643.7 1266.6 640.0C1287.3 636.3 1340.3 635.1 1354.3 640.0C1368.3 644.9 1354.3 659.5 1350.7 669.2C1347.0 679.0 1337.9 686.3 1332.4 698.5C1326.9 710.7 1321.4 727.7 1317.8 742.3C1314.1 757.0 1314.1 774.0 1310.5 786.2C1306.8 798.4 1301.9 805.7 1295.8 815.4C1289.8 825.2 1284.9 837.4 1273.9 844.7C1263.0 852.0 1244.7 855.6 1230.1 859.3C1215.4 863.0 1199.6 866.6 1186.2 866.6C1172.8 866.6 1157.0 865.4 1149.6 859.3C1142.3 853.2 1148.4 837.4 1142.3 830.1C1136.2 822.7 1121.0 821.5 1113.1 815.4C1105.2 809.3 1097.9 802.6 1094.8 793.5C1091.8 784.4 1088.7 767.9 1094.8 760.6z"/>
<path d="M1405.5 640.0C1434.7 636.3 1574.8 630.9 1610.2 640.0C1645.5 649.1 1617.5 679.0 1617.5 694.8C1617.5 710.7 1606.5 724.1 1610.2 735.0C1613.8 746.0 1633.3 750.9 1639.4 760.6C1645.5 770.4 1649.2 783.2 1646.7 793.5C1644.3 803.9 1635.8 814.2 1624.8 822.7C1613.8 831.3 1590.7 834.9 1580.9 844.7C1571.2 854.4 1573.6 872.7 1566.3 881.2C1559.0 889.8 1548.7 892.2 1537.1 895.8C1525.5 899.5 1509.7 900.7 1496.9 903.2C1484.1 905.6 1472.5 911.7 1460.3 910.5C1448.1 909.2 1434.1 904.4 1423.8 895.8C1413.4 887.3 1403.7 872.7 1398.2 859.3C1392.7 845.9 1389.7 827.6 1390.9 815.4C1392.1 803.3 1401.8 798.4 1405.5 786.2C1409.2 774.0 1409.2 757.6 1412.8 742.3C1416.5 727.1 1423.8 708.2 1427.4 694.8C1431.1 681.4 1438.4 671.1 1434.7 661.9C1431.1 652.8 1376.3 643.7 1405.5 640.0z"/>
<path d="M1654.0 661.9C1660.1 651.0 1680.8 651.0 1697.9 647.3C1715.0 643.7 1722.7 641.2 1756.4 640.0C1790.1 638.8 1876.1 636.3 1900.0 640.0C1924.0 643.7 1906.3 652.2 1900.0 661.9C1893.7 671.7 1874.7 687.5 1862.4 698.5C1850.0 709.4 1841.0 719.2 1825.8 727.7C1810.6 736.2 1789.3 742.3 1771.0 749.6C1752.7 757.0 1732.0 765.5 1716.2 771.6C1700.3 777.7 1688.8 785.0 1676.0 786.2C1663.2 787.4 1645.5 786.2 1639.4 778.9C1633.3 771.6 1635.8 753.3 1639.4 742.3C1643.1 731.4 1658.9 726.5 1661.3 713.1C1663.8 699.7 1647.9 672.9 1654.0 661.9z"/>
<path d="M1113.1 1012.8C1119.2 996.4 1137.5 1003.7 1149.6 998.2C1161.8 992.7 1174.0 983.0 1186.2 979.9C1198.4 976.9 1210.6 980.5 1222.7 979.9C1234.9 979.3 1247.7 978.1 1259.3 976.3C1270.9 974.4 1286.1 966.5 1292.2 968.9C1298.3 971.4 1298.9 983.6 1295.8 990.9C1292.8 998.2 1282.4 1006.7 1273.9 1012.8C1265.4 1018.9 1252.0 1022.6 1244.7 1027.4C1237.4 1032.3 1234.9 1036.0 1230.1 1042.0C1225.2 1048.1 1221.5 1057.9 1215.4 1064.0C1209.3 1070.1 1202.0 1072.5 1193.5 1078.6C1185.0 1084.7 1174.0 1094.4 1164.3 1100.5C1154.5 1106.6 1143.6 1115.8 1135.0 1115.1C1126.5 1114.5 1116.8 1113.9 1113.1 1096.9C1109.4 1079.8 1107.0 1029.3 1113.1 1012.8z"/>
<path d="M1343.4 1012.8C1344.6 1009.8 1358.6 1003.7 1368.9 998.2C1379.3 992.7 1395.8 983.6 1405.5 979.9C1415.2 976.3 1424.4 974.4 1427.4 976.3C1430.5 978.1 1429.9 986.0 1423.8 990.9C1417.7 995.8 1401.2 1001.2 1390.9 1005.5C1380.5 1009.8 1369.6 1015.2 1361.6 1016.5C1353.7 1017.7 1342.1 1015.9 1343.4 1012.8z"/>
<path d="M1471.3 917.8C1476.2 912.3 1490.8 910.5 1500.5 910.5C1510.3 910.5 1526.1 910.5 1529.8 917.8C1533.4 925.1 1528.5 947.6 1522.5 954.3C1516.4 961.0 1501.7 959.8 1493.2 958.0C1484.7 956.2 1474.9 950.1 1471.3 943.4C1467.6 936.7 1466.4 923.3 1471.3 917.8z"/>
<path d="M1471.3 1100.5C1479.2 1094.4 1492.6 1089.0 1500.5 1089.6C1508.4 1090.2 1516.4 1097.5 1518.8 1104.2C1521.2 1110.9 1518.8 1121.8 1515.1 1129.8C1511.5 1137.7 1499.3 1143.8 1496.9 1151.7C1494.4 1159.6 1504.8 1172.4 1500.5 1177.3C1496.3 1182.2 1479.8 1184.0 1471.3 1180.9C1462.8 1177.9 1452.4 1168.1 1449.4 1159.0C1446.3 1149.9 1449.4 1135.9 1453.0 1126.1C1456.7 1116.4 1463.4 1106.6 1471.3 1100.5z"/>
<path d="M1200.8 1096.9C1203.3 1090.8 1224.0 1084.1 1237.4 1078.6C1250.8 1073.1 1270.3 1068.8 1281.2 1064.0C1292.2 1059.1 1298.3 1048.1 1303.2 1049.4C1308.0 1050.6 1317.8 1062.8 1310.5 1071.3C1303.2 1079.8 1273.9 1093.2 1259.3 1100.5C1244.7 1107.8 1232.5 1115.8 1222.7 1115.1C1213.0 1114.5 1198.4 1103.0 1200.8 1096.9z"/>
<path d="M1317.8 1180.9C1322.7 1170.7 1331.2 1159.0 1339.7 1151.7C1348.2 1144.4 1362.9 1134.0 1368.9 1137.1C1375.0 1140.1 1376.3 1157.3 1376.3 1170.0C1376.3 1182.6 1379.9 1205.9 1368.9 1213.1C1358.0 1220.3 1319.0 1218.5 1310.5 1213.1C1301.9 1207.7 1312.9 1191.2 1317.8 1180.9z"/>
<path d="M1040.0 1188.2C1046.1 1181.7 1065.6 1173.6 1076.5 1173.6C1087.5 1173.6 1102.7 1181.7 1105.8 1188.2C1108.8 1194.8 1105.8 1209.0 1094.8 1213.1C1083.9 1217.2 1049.1 1217.2 1040.0 1213.1C1030.9 1209.0 1033.9 1194.8 1040.0 1188.2z"/>
<path d="M1580.9 844.7C1583.4 836.2 1601.6 825.2 1610.2 822.7C1618.7 820.3 1629.7 821.5 1632.1 830.1C1634.5 838.6 1630.9 866.6 1624.8 873.9C1618.7 881.2 1602.9 878.8 1595.6 873.9C1588.2 869.0 1578.5 853.2 1580.9 844.7z"/>
<path d="M2073.4 640.0C2085.6 632.7 2141.6 633.9 2153.8 640.0C2166.0 646.1 2151.3 664.4 2146.5 676.5C2141.6 688.7 2131.8 705.8 2124.5 713.1C2117.2 720.4 2109.9 725.3 2102.6 720.4C2095.3 715.5 2085.6 697.3 2080.7 683.9C2075.8 670.5 2061.2 647.3 2073.4 640.0z"/>
<path d="M2146.5 903.2C2150.1 889.8 2179.4 859.3 2190.3 852.0C2201.3 844.7 2207.4 852.0 2212.3 859.3C2217.1 866.6 2214.7 886.1 2219.6 895.8C2224.4 905.6 2234.2 911.7 2241.5 917.8C2248.8 923.9 2257.3 931.2 2263.4 932.4C2269.5 933.6 2264.6 931.2 2278.0 925.1C2291.4 919.0 2329.2 899.5 2343.8 895.8C2358.5 892.2 2362.1 891.0 2365.8 903.2C2369.4 915.3 2368.2 954.3 2365.8 968.9C2363.3 983.6 2363.3 986.0 2351.1 990.9C2339.0 995.8 2308.5 998.2 2292.7 998.2C2276.8 998.2 2264.6 997.0 2256.1 990.9C2247.6 984.8 2251.2 966.5 2241.5 961.6C2231.8 956.8 2209.8 966.5 2197.6 961.6C2185.5 956.8 2176.9 942.1 2168.4 932.4C2159.9 922.7 2142.8 916.6 2146.5 903.2z"/>
<path d="M1923.5 925.1C1924.7 920.2 1943.6 908.0 1956.4 903.2C1969.2 898.3 1990.5 892.2 2000.3 895.8C2010.0 899.5 2011.2 914.1 2014.9 925.1C2018.5 936.1 2022.2 948.2 2022.2 961.6C2022.2 975.0 2018.5 998.2 2014.9 1005.5C2011.2 1012.8 2005.1 1010.4 2000.3 1005.5C1995.4 1000.6 1989.3 985.4 1985.6 976.3C1982.0 967.1 1984.4 958.0 1978.3 950.7C1972.2 943.4 1958.2 936.7 1949.1 932.4C1940.0 928.1 1922.3 930.0 1923.5 925.1z"/>
<path d="M2014.9 961.6C2019.8 949.5 2041.7 938.5 2051.4 932.4C2061.2 926.3 2069.7 919.0 2073.4 925.1C2077.0 931.2 2077.0 958.6 2073.4 968.9C2069.7 979.3 2060.0 981.1 2051.4 987.2C2042.9 993.3 2028.3 1009.8 2022.2 1005.5C2016.1 1001.2 2010.0 973.8 2014.9 961.6z"/>
<path d="M1905.2 990.9C1912.5 986.0 1930.8 978.7 1941.8 983.6C1952.8 988.4 1967.4 1010.4 1971.0 1020.1C1974.7 1029.9 1972.2 1039.0 1963.7 1042.0C1955.2 1045.1 1930.8 1043.3 1919.9 1038.4C1908.9 1033.5 1900.4 1020.7 1897.9 1012.8C1895.5 1004.9 1897.9 995.8 1905.2 990.9z"/>
<path d="M2479.1 888.5C2485.2 884.3 2510.1 882.4 2519.3 884.9C2528.4 887.3 2535.1 898.3 2533.9 903.2C2532.7 908.0 2520.5 912.9 2512.0 914.1C2503.4 915.3 2488.2 914.7 2482.7 910.5C2477.2 906.2 2473.0 892.8 2479.1 888.5z"/>
<path d="M2566.8 852.0C2572.3 846.5 2611.9 837.4 2621.6 841.0C2631.4 844.7 2630.8 868.4 2625.3 873.9C2619.8 879.4 2598.5 877.6 2588.7 873.9C2579.0 870.3 2561.3 857.5 2566.8 852.0z"/>
<path d="M2625.3 888.5C2635.6 887.3 2680.7 888.5 2691.1 895.8C2701.4 903.2 2691.7 926.3 2687.4 932.4C2683.1 938.5 2675.2 937.3 2665.5 932.4C2655.7 927.5 2635.6 910.5 2628.9 903.2C2622.2 895.8 2614.9 889.8 2625.3 888.5z"/>
<path d="M2329.2 1089.6C2331.7 1084.7 2356.0 1084.1 2365.8 1078.6C2375.5 1073.1 2377.9 1061.5 2387.7 1056.7C2397.4 1051.8 2412.1 1054.2 2424.2 1049.4C2436.4 1044.5 2448.6 1032.3 2460.8 1027.4C2473.0 1022.6 2485.2 1021.9 2497.3 1020.1C2509.5 1018.3 2521.7 1014.0 2533.9 1016.5C2546.1 1018.9 2558.3 1032.9 2570.4 1034.7C2582.6 1036.6 2594.8 1027.4 2607.0 1027.4C2619.2 1027.4 2631.4 1032.3 2643.5 1034.7C2655.7 1037.2 2664.7 1037.8 2680.1 1042.0C2695.5 1046.3 2726.7 1048.1 2736.0 1060.3C2745.3 1072.5 2742.3 1107.2 2736.0 1115.1C2729.7 1123.1 2710.7 1107.8 2698.4 1107.8C2686.0 1107.8 2671.0 1110.9 2661.8 1115.1C2652.7 1119.4 2652.7 1131.6 2643.5 1133.4C2634.4 1135.2 2619.2 1126.1 2607.0 1126.1C2594.8 1126.1 2582.6 1129.2 2570.4 1133.4C2558.3 1137.7 2546.1 1149.9 2533.9 1151.7C2521.7 1153.5 2507.1 1148.7 2497.3 1144.4C2487.6 1140.1 2481.5 1134.0 2475.4 1126.1C2469.3 1118.2 2469.3 1100.5 2460.8 1096.9C2452.3 1093.2 2436.4 1101.7 2424.2 1104.2C2412.1 1106.6 2399.9 1110.9 2387.7 1111.5C2375.5 1112.1 2360.9 1111.5 2351.1 1107.8C2341.4 1104.2 2326.8 1094.4 2329.2 1089.6z"/>
<path d="M2241.5 1049.4C2247.6 1044.5 2269.5 1036.6 2278.0 1038.4C2286.6 1040.2 2295.1 1054.8 2292.7 1060.3C2290.2 1065.8 2272.0 1070.1 2263.4 1071.3C2254.9 1072.5 2245.2 1071.3 2241.5 1067.6C2237.8 1064.0 2235.4 1054.2 2241.5 1049.4z"/>
<path d="M2190.3 1042.0C2193.4 1036.0 2207.4 1036.0 2212.3 1042.0C2217.1 1048.1 2214.7 1068.8 2219.6 1078.6C2224.4 1088.3 2239.1 1092.6 2241.5 1100.5C2243.9 1108.4 2240.3 1123.7 2234.2 1126.1C2228.1 1128.5 2211.6 1123.1 2204.9 1115.1C2198.2 1107.2 2196.4 1090.8 2194.0 1078.6C2191.5 1066.4 2187.3 1048.1 2190.3 1042.0z"/>
<path d="M2131.8 1060.3C2134.3 1050.6 2141.6 1050.6 2146.5 1056.7C2151.3 1062.8 2153.8 1084.1 2161.1 1096.9C2168.4 1109.7 2180.6 1124.3 2190.3 1133.4C2200.1 1142.6 2209.8 1147.4 2219.6 1151.7C2229.3 1156.0 2245.2 1148.8 2248.8 1159.0C2252.5 1169.2 2254.9 1204.1 2241.5 1213.1C2228.1 1222.1 2185.5 1220.3 2168.4 1213.1C2151.3 1205.9 2145.2 1186.3 2139.2 1170.0C2133.1 1153.6 2133.1 1133.4 2131.8 1115.1C2130.6 1096.9 2129.4 1070.1 2131.8 1060.3z"/>
<path d="M1963.7 1078.6C1968.6 1071.9 1986.9 1060.3 1993.0 1064.0C1999.1 1067.6 2002.7 1092.0 2000.3 1100.5C1997.8 1109.1 1984.4 1114.5 1978.3 1115.1C1972.2 1115.8 1966.2 1110.3 1963.7 1104.2C1961.3 1098.1 1958.8 1085.3 1963.7 1078.6z"/>
<path d="M2431.6 1107.8C2440.1 1100.5 2465.7 1096.9 2475.4 1100.5C2485.2 1104.2 2490.0 1118.8 2490.0 1129.8C2490.0 1140.7 2483.9 1159.0 2475.4 1166.3C2466.9 1173.6 2447.4 1177.3 2438.9 1173.6C2430.3 1170.0 2425.5 1155.4 2424.2 1144.4C2423.0 1133.4 2423.0 1115.1 2431.6 1107.8z"/>
<path d="M2592.4 1122.5C2600.9 1113.9 2633.8 1098.7 2643.5 1100.5C2653.3 1102.4 2650.9 1122.5 2650.9 1133.4C2650.9 1144.4 2650.9 1159.6 2643.5 1166.3C2636.2 1173.0 2615.5 1176.1 2607.0 1173.6C2598.5 1171.2 2594.8 1160.2 2592.4 1151.7C2589.9 1143.2 2583.8 1131.0 2592.4 1122.5z"/>
<path d="M1045.5 1173.1C1050.7 1152.4 1065.3 1154.8 1076.5 1158.5C1087.8 1162.1 1106.4 1184.7 1113.1 1195.0C1119.8 1205.4 1119.8 1210.9 1116.8 1220.6C1113.7 1230.4 1104.0 1244.4 1094.8 1253.5C1085.7 1262.6 1070.2 1270.6 1061.9 1275.4C1053.7 1280.3 1048.2 1299.8 1045.5 1282.7C1042.7 1265.7 1040.3 1193.8 1045.5 1173.1z"/>
<path d="M1061.9 1326.6C1066.8 1318.7 1096.0 1317.5 1113.1 1315.6C1130.2 1313.8 1150.9 1312.6 1164.3 1315.6C1177.7 1318.7 1187.4 1323.6 1193.5 1333.9C1199.6 1344.3 1202.0 1365.6 1200.8 1377.8C1199.6 1390.0 1194.7 1403.4 1186.2 1407.0C1177.7 1410.7 1160.6 1405.8 1149.6 1399.7C1138.7 1393.6 1131.4 1376.6 1120.4 1370.5C1109.4 1364.4 1093.6 1370.5 1083.9 1363.2C1074.1 1355.8 1057.1 1334.5 1061.9 1326.6z"/>
<path d="M1222.7 1290.1C1224.0 1277.9 1236.2 1262.0 1244.7 1253.5C1253.2 1245.0 1265.4 1246.2 1273.9 1238.9C1282.4 1231.6 1288.5 1220.6 1295.8 1209.6C1303.2 1198.7 1308.0 1184.1 1317.8 1173.1C1327.5 1162.1 1344.6 1146.3 1354.3 1143.9C1364.1 1141.4 1373.8 1150.6 1376.3 1158.5C1378.7 1166.4 1378.7 1181.0 1368.9 1191.4C1359.2 1201.7 1327.5 1209.6 1317.8 1220.6C1308.0 1231.6 1314.1 1243.2 1310.5 1257.2C1306.8 1271.2 1303.2 1293.1 1295.8 1304.7C1288.5 1316.3 1276.4 1323.0 1266.6 1326.6C1256.9 1330.3 1244.7 1332.7 1237.4 1326.6C1230.1 1320.5 1221.5 1302.2 1222.7 1290.1z"/>
<path d="M1347.0 1238.9C1351.3 1231.6 1368.9 1219.4 1376.3 1220.6C1383.6 1221.8 1392.1 1237.7 1390.9 1246.2C1389.7 1254.7 1375.6 1268.7 1368.9 1271.8C1362.2 1274.8 1354.3 1270.0 1350.7 1264.5C1347.0 1259.0 1342.8 1246.2 1347.0 1238.9z"/>
<path d="M1361.6 1319.3C1365.3 1312.0 1381.1 1297.4 1390.9 1297.4C1400.6 1297.4 1415.2 1307.1 1420.1 1319.3C1425.0 1331.5 1422.6 1358.3 1420.1 1370.5C1417.7 1382.7 1410.4 1394.8 1405.5 1392.4C1400.6 1390.0 1397.0 1364.4 1390.9 1355.8C1384.8 1347.3 1373.8 1347.3 1368.9 1341.2C1364.1 1335.1 1358.0 1326.6 1361.6 1319.3z"/>
<path d="M1500.5 1323.0C1507.2 1314.4 1534.0 1304.1 1544.4 1304.7C1554.7 1305.3 1565.1 1318.1 1562.7 1326.6C1560.2 1335.1 1539.5 1351.0 1529.8 1355.8C1520.0 1360.7 1509.1 1361.3 1504.2 1355.8C1499.3 1350.4 1493.8 1331.5 1500.5 1323.0z"/>
<path d="M1215.4 1392.4C1217.9 1385.1 1237.4 1380.2 1244.7 1385.1C1252.0 1390.0 1258.1 1411.9 1259.3 1421.6C1260.5 1431.4 1256.9 1442.3 1252.0 1443.6C1247.1 1444.8 1236.2 1437.5 1230.1 1428.9C1224.0 1420.4 1213.0 1399.7 1215.4 1392.4z"/>
<path d="M1449.4 1136.5C1449.4 1126.8 1460.3 1106.1 1471.3 1100.0C1482.3 1093.9 1507.2 1096.3 1515.1 1100.0C1523.1 1103.7 1521.8 1112.2 1518.8 1121.9C1515.8 1131.7 1504.8 1152.4 1496.9 1158.5C1489.0 1164.6 1479.2 1162.1 1471.3 1158.5C1463.4 1154.8 1449.4 1146.3 1449.4 1136.5z"/>
<path d="M1551.7 1428.9C1557.8 1424.1 1577.3 1418.0 1588.2 1418.0C1599.2 1418.0 1613.8 1423.5 1617.5 1428.9C1621.1 1434.4 1617.5 1446.0 1610.2 1450.9C1602.9 1455.8 1583.4 1458.8 1573.6 1458.2C1563.9 1457.6 1555.4 1452.1 1551.7 1447.2C1548.0 1442.3 1545.6 1433.8 1551.7 1428.9z"/>
<path d="M1763.7 1260.8C1764.3 1243.8 1784.4 1184.7 1792.9 1173.1C1801.5 1161.5 1806.3 1185.3 1814.9 1191.4C1823.4 1197.5 1829.9 1210.3 1844.1 1209.6C1858.3 1209.0 1890.7 1171.9 1900.0 1187.7C1909.3 1203.6 1904.5 1284.6 1900.0 1304.7C1895.6 1324.8 1884.5 1313.2 1873.3 1308.3C1862.2 1303.5 1847.1 1280.9 1833.1 1275.4C1819.1 1270.0 1800.8 1277.9 1789.3 1275.4C1777.7 1273.0 1763.1 1277.9 1763.7 1260.8z"/>
<path d="M1822.2 1414.3C1827.0 1406.4 1853.0 1403.4 1866.0 1403.4C1879.0 1403.4 1894.3 1401.5 1900.0 1414.3C1905.7 1427.1 1905.7 1469.2 1900.0 1480.1C1894.3 1491.1 1876.6 1485.0 1866.0 1480.1C1855.5 1475.2 1844.1 1461.8 1836.8 1450.9C1829.5 1439.9 1817.3 1422.2 1822.2 1414.3z"/>
<path d="M1741.8 1290.1C1745.4 1279.1 1757.6 1279.1 1760.0 1290.1C1762.5 1301.0 1760.0 1344.9 1756.4 1355.8C1752.7 1366.8 1740.5 1366.8 1738.1 1355.8C1735.7 1344.9 1738.1 1301.0 1741.8 1290.1z"/>
<path d="M1178.9 1428.9C1183.8 1422.9 1200.8 1418.0 1208.1 1421.6C1215.4 1425.3 1224.0 1443.0 1222.7 1450.9C1221.5 1458.8 1208.1 1467.9 1200.8 1469.2C1193.5 1470.4 1182.5 1464.9 1178.9 1458.2C1175.2 1451.5 1174.0 1435.0 1178.9 1428.9z"/>
<path d="M2044.1 1238.9C2050.2 1225.5 2066.1 1225.5 2080.7 1224.3C2095.3 1223.1 2117.2 1227.9 2131.8 1231.6C2146.5 1235.2 2162.3 1236.5 2168.4 1246.2C2174.5 1255.9 2172.1 1277.9 2168.4 1290.1C2164.7 1302.2 2156.2 1312.0 2146.5 1319.3C2136.7 1326.6 2120.9 1327.8 2109.9 1333.9C2099.0 1340.0 2091.0 1352.8 2080.7 1355.8C2070.3 1358.9 2053.9 1360.7 2047.8 1352.2C2041.7 1343.7 2044.7 1323.6 2044.1 1304.7C2043.5 1285.8 2038.0 1252.3 2044.1 1238.9z"/>
<path d="M2036.8 1392.4C2044.1 1381.4 2064.8 1375.3 2080.7 1370.5C2096.5 1365.6 2118.4 1365.6 2131.8 1363.2C2145.2 1360.7 2157.4 1352.2 2161.1 1355.8C2164.7 1359.5 2159.9 1372.9 2153.8 1385.1C2147.7 1397.3 2136.7 1418.0 2124.5 1428.9C2112.4 1439.9 2089.2 1442.3 2080.7 1450.9C2072.2 1459.4 2079.5 1475.2 2073.4 1480.1C2067.3 1485.0 2050.2 1487.4 2044.1 1480.1C2038.0 1472.8 2038.0 1450.9 2036.8 1436.3C2035.6 1421.6 2029.5 1403.4 2036.8 1392.4z"/>
<path d="M2146.5 1355.8C2153.8 1343.7 2180.6 1338.8 2190.3 1341.2C2200.1 1343.7 2203.7 1359.5 2204.9 1370.5C2206.2 1381.4 2204.9 1398.5 2197.6 1407.0C2190.3 1415.5 2169.6 1420.4 2161.1 1421.6C2152.6 1422.9 2148.9 1425.3 2146.5 1414.3C2144.0 1403.4 2139.2 1368.0 2146.5 1355.8z"/>
<path d="M1876.0 1195.0C1882.1 1176.1 1903.4 1187.7 1912.5 1191.4C1921.7 1195.0 1929.6 1206.6 1930.8 1217.0C1932.0 1227.3 1926.6 1243.8 1919.9 1253.5C1913.2 1263.3 1897.9 1266.9 1890.6 1275.4C1883.3 1284.0 1878.4 1318.1 1876.0 1304.7C1873.6 1291.3 1869.9 1213.9 1876.0 1195.0z"/>
<path d="M1876.0 1403.4C1896.7 1392.4 1978.3 1395.4 2000.3 1399.7C2022.2 1404.0 2003.9 1421.6 2007.6 1428.9C2011.2 1436.3 2023.4 1437.5 2022.2 1443.6C2021.0 1449.7 2012.5 1458.2 2000.3 1465.5C1988.1 1472.8 1962.5 1482.6 1949.1 1487.4C1935.7 1492.3 1932.0 1498.4 1919.9 1494.7C1907.7 1491.1 1883.3 1480.7 1876.0 1465.5C1868.7 1450.3 1855.3 1414.3 1876.0 1403.4z"/>
<path d="M2424.2 1202.3C2432.8 1193.8 2457.1 1193.8 2475.4 1195.0C2493.7 1196.2 2524.1 1202.3 2533.9 1209.6C2543.6 1217.0 2540.0 1231.6 2533.9 1238.9C2527.8 1246.2 2512.0 1248.6 2497.3 1253.5C2482.7 1258.4 2458.4 1269.3 2446.2 1268.1C2434.0 1266.9 2427.9 1257.2 2424.2 1246.2C2420.6 1235.2 2415.7 1210.9 2424.2 1202.3z"/>
<path d="M2365.8 1333.9C2370.6 1325.4 2386.5 1321.7 2395.0 1326.6C2403.5 1331.5 2415.7 1353.4 2416.9 1363.2C2418.2 1372.9 2410.8 1382.7 2402.3 1385.1C2393.8 1387.5 2371.9 1386.3 2365.8 1377.8C2359.7 1369.2 2360.9 1342.4 2365.8 1333.9z"/>
<path d="M2387.7 1414.3C2396.2 1405.2 2431.6 1388.7 2446.2 1377.8C2460.8 1366.8 2466.9 1352.2 2475.4 1348.5C2483.9 1344.9 2493.7 1349.8 2497.3 1355.8C2501.0 1361.9 2503.4 1377.8 2497.3 1385.1C2491.3 1392.4 2474.2 1393.6 2460.8 1399.7C2447.4 1405.8 2427.9 1416.2 2416.9 1421.6C2406.0 1427.1 2399.9 1433.8 2395.0 1432.6C2390.1 1431.4 2379.2 1423.5 2387.7 1414.3z"/>
<path d="M2519.3 1355.8C2521.7 1343.7 2548.5 1303.5 2563.1 1297.4C2577.8 1291.3 2599.7 1309.6 2607.0 1319.3C2614.3 1329.0 2610.6 1346.1 2607.0 1355.8C2603.3 1365.6 2594.8 1375.3 2585.1 1377.8C2575.3 1380.2 2559.5 1374.1 2548.5 1370.5C2537.5 1366.8 2516.8 1368.0 2519.3 1355.8z"/>
<path d="M2285.4 1458.2C2292.7 1451.5 2325.6 1445.4 2336.5 1447.2C2347.5 1449.0 2352.4 1462.5 2351.1 1469.2C2349.9 1475.9 2339.0 1484.4 2329.2 1487.4C2319.5 1490.5 2300.0 1492.3 2292.7 1487.4C2285.4 1482.6 2278.0 1464.9 2285.4 1458.2z"/>
<path d="M2095.3 1509.4C2102.6 1496.3 2129.4 1467.9 2139.2 1465.5C2148.9 1463.1 2156.2 1482.6 2153.8 1494.7C2151.3 1506.9 2134.3 1530.4 2124.5 1538.6C2114.8 1546.8 2100.2 1549.0 2095.3 1544.1C2090.4 1539.2 2088.0 1522.5 2095.3 1509.4z"/>
<path d="M2139.2 1100.0C2150.1 1093.9 2190.3 1093.9 2204.9 1100.0C2219.6 1106.1 2219.6 1124.4 2226.9 1136.5C2234.2 1148.7 2248.8 1160.9 2248.8 1173.1C2248.8 1185.3 2236.6 1202.3 2226.9 1209.6C2217.1 1217.0 2201.3 1221.8 2190.3 1217.0C2179.4 1212.1 2169.6 1193.8 2161.1 1180.4C2152.6 1167.0 2142.8 1150.0 2139.2 1136.5C2135.5 1123.1 2128.2 1106.1 2139.2 1100.0z"/>
<path d="M2431.6 1121.9C2434.0 1109.7 2438.9 1103.7 2460.8 1100.0C2482.7 1096.3 2546.1 1096.3 2563.1 1100.0C2580.2 1103.7 2574.1 1115.8 2563.1 1121.9C2552.2 1128.0 2516.8 1128.0 2497.3 1136.5C2477.9 1145.1 2457.1 1175.5 2446.2 1173.1C2435.2 1170.7 2429.1 1134.1 2431.6 1121.9z"/>
<path d="M2592.4 1100.0C2615.1 1095.1 2712.1 1091.5 2736.0 1100.0C2760.0 1108.5 2751.4 1143.9 2736.0 1151.2C2720.6 1158.5 2666.3 1147.5 2643.5 1143.9C2620.8 1140.2 2608.2 1136.5 2599.7 1129.2C2591.2 1121.9 2569.7 1104.9 2592.4 1100.0z"/>
<path d="M1967.4 1209.6C1969.8 1203.6 1989.9 1206.0 2000.3 1202.3C2010.6 1198.7 2023.4 1184.1 2029.5 1187.7C2035.6 1191.4 2039.3 1217.0 2036.8 1224.3C2034.4 1231.6 2023.4 1229.1 2014.9 1231.6C2006.4 1234.0 1993.6 1242.5 1985.6 1238.9C1977.7 1235.2 1964.9 1215.7 1967.4 1209.6z"/>
</g>
<g fill="#dcdbdb">
</g>
<path fill="#dbdadb" d="M1597.2 292.6L1598.8 297.5L1595.0 300.7L1590.2 294.3zM2037.3 164.0L2033.9 168.4L2029.5 165.8L2032.7 162.6zM1156.4 159.4L1157.9 161.5L1158.3 162.9L1156.9 164.8L1155.1 165.0L1152.3 163.1L1155.0 161.1zM2377.3 1276.3L2381.6 1275.3L2383.6 1275.8L2382.7 1280.8L2380.4 1281.3L2378.7 1279.0zM1147.5 1205.2L1148.0 1203.3L1150.2 1202.1L1152.0 1205.0L1150.0 1205.7zM2161.2 96.9L2152.6 93.9L2157.0 88.5L2163.6 87.4L2165.1 95.9zM1722.9 230.9L1719.6 228.0L1720.5 222.3L1725.3 225.4zM2122.9 1483.9L2119.4 1482.1L2116.3 1481.5L2116.1 1479.3L2118.5 1476.9L2121.1 1475.8L2123.9 1479.9zM1664.0 316.3L1668.8 317.1L1672.1 320.5L1672.6 325.5L1667.0 323.7L1661.6 322.1zM1639.9 1509.1L1636.3 1507.3L1639.2 1505.0L1643.0 1507.4zM2316.9 779.7L2314.5 779.3L2312.9 778.0L2311.9 776.4L2315.0 775.4L2316.3 776.1zM2395.2 1143.3L2396.4 1141.6L2398.8 1141.3L2400.7 1142.7L2398.1 1145.0zM1756.2 1424.5L1757.4 1420.3L1763.4 1422.1L1762.4 1426.2L1757.5 1426.0zM1463.6 479.1L1467.9 477.8L1472.2 478.9L1476.4 481.6L1471.7 487.1L1467.4 487.7L1466.4 484.1zM1173.2 427.4L1174.4 428.4L1173.6 430.1L1171.9 430.7L1170.6 428.9L1171.1 427.5zM1585.4 1137.6L1585.4 1135.9L1587.1 1134.0L1588.0 1135.6L1588.5 1136.5L1587.8 1138.7L1586.8 1139.0zM2228.4 208.3L2229.8 205.4L2231.5 204.0L2233.9 206.6L2231.4 207.9zM1452.5 238.4L1449.7 237.2L1449.7 233.5L1453.3 234.9zM2700.9 832.8L2698.5 833.3L2695.9 832.8L2695.6 829.7L2698.0 828.9L2699.5 829.2L2700.5 830.2zM2466.6 1352.9L2468.3 1352.2L2473.2 1351.9L2473.0 1356.4L2468.7 1358.2L2464.7 1357.1zM2357.0 210.8L2353.7 206.4L2361.6 204.1L2362.9 209.5L2358.9 211.8zM2134.8 136.1L2140.0 135.4L2141.0 140.9L2136.6 144.1L2134.2 142.6L2128.7 142.4L2129.4 136.4zM1871.2 76.4L1878.2 77.2L1880.2 83.7L1871.1 82.1zM2206.7 1203.3L2202.5 1206.5L2199.0 1203.7L2201.3 1198.4L2205.8 1199.9zM1252.3 1387.2L1250.1 1391.0L1247.2 1390.5L1249.1 1387.0zM2660.6 267.9L2658.5 270.8L2657.2 274.2L2653.9 273.1L2653.1 268.5L2656.4 266.7zM2255.0 1401.5L2251.5 1403.6L2250.5 1401.6L2249.5 1399.4L2251.7 1398.0L2254.1 1399.1zM2331.4 658.1L2339.0 661.3L2339.0 665.9L2332.5 666.8L2328.1 661.4zM2157.9 519.1L2154.9 520.9L2152.3 520.0L2153.5 516.3L2154.9 514.3L2157.5 515.1L2160.4 517.5zM1402.5 475.0L1399.4 474.5L1400.5 471.4L1401.6 466.8L1405.7 470.4L1410.3 472.7L1405.8 474.3zM2613.6 1291.9L2605.9 1292.0L2606.7 1287.0L2611.0 1285.9L2614.7 1282.8L2615.7 1287.5L2616.1 1292.2zM1168.0 848.2L1165.6 846.9L1165.5 844.5L1167.7 843.7L1169.9 843.9L1172.1 846.2L1171.7 847.8zM1877.3 1093.7L1883.9 1095.2L1886.1 1097.8L1883.9 1102.0L1878.1 1100.5L1876.2 1098.1zM2653.3 290.8L2651.0 293.0L2648.1 291.4L2647.1 288.9L2651.0 287.5zM2276.1 1311.4L2269.7 1311.3L2267.5 1310.5L2270.2 1305.1L2272.5 1304.0L2276.9 1304.9L2279.4 1308.0zM2342.7 133.3L2344.2 135.4L2341.7 135.8L2340.3 133.7zM2273.0 950.5L2264.9 954.2L2260.2 950.0L2266.3 945.0zM2440.7 1207.4L2440.3 1211.7L2439.1 1214.9L2435.1 1213.1L2434.0 1211.2L2434.5 1207.9zM2686.6 327.6L2689.4 328.0L2690.9 328.0L2690.5 330.3L2690.2 331.0L2687.8 331.2L2686.8 329.3zM2417.4 1036.4L2413.3 1041.9L2405.8 1036.7L2412.4 1032.0zM1353.1 964.6L1348.1 964.1L1344.6 959.2L1351.0 959.1zM2196.6 347.7L2193.5 350.3L2190.5 348.4L2189.9 344.7L2194.7 345.5zM2538.2 682.4L2540.3 682.4L2541.8 682.9L2540.5 684.9L2539.5 686.0L2536.7 683.9zM1341.9 585.0L1340.2 588.1L1337.0 588.8L1336.2 586.8L1339.8 583.9zM1317.7 1228.9L1319.5 1226.9L1322.3 1228.9L1322.7 1231.0L1320.9 1233.0L1319.2 1232.3L1316.4 1230.1zM1567.4 442.1L1567.1 439.8L1570.6 438.6L1571.5 440.7L1571.5 442.7L1569.2 443.4zM1194.1 1154.5L1187.6 1158.7L1184.2 1150.7L1192.4 1149.7zM2599.0 319.4L2592.8 321.1L2588.7 319.5L2591.8 315.0L2596.0 315.4zM1322.9 1454.2L1319.5 1454.7L1316.0 1452.6L1315.4 1449.5L1321.2 1446.6L1325.9 1449.7L1325.2 1452.7zM2298.6 150.5L2296.7 145.5L2300.2 143.5L2304.8 142.2L2307.7 145.2L2307.6 148.8zM1928.3 858.9L1931.2 856.0L1934.0 858.7L1934.9 862.8L1932.2 862.1L1928.8 861.4zM1799.9 1454.5L1795.9 1455.3L1792.5 1451.8L1797.8 1448.7L1803.2 1452.0zM2086.2 822.8L2084.1 824.5L2081.8 823.3L2084.4 821.0zM1255.7 1380.5L1261.8 1382.4L1263.6 1387.5L1257.9 1388.2L1252.8 1389.7L1252.4 1383.4zM1601.5 427.0L1601.0 423.4L1605.1 422.3L1606.4 424.6L1608.7 426.8L1604.5 432.0L1602.7 431.7zM1164.6 148.4L1158.5 146.8L1160.9 143.1L1159.4 138.5L1167.6 141.6L1168.2 144.9zM2383.6 1026.7L2383.3 1023.5L2386.5 1022.5L2387.0 1024.4L2388.3 1026.8L2384.8 1027.9zM2499.1 210.0L2500.9 206.4L2508.8 204.2L2510.5 210.3L2503.9 211.9zM2629.9 414.8L2631.6 413.7L2635.0 415.8L2631.9 417.5zM1774.4 874.7L1772.8 877.3L1769.8 878.6L1769.5 875.4L1771.8 874.1zM1611.6 1024.7L1606.0 1020.2L1611.7 1016.5L1617.4 1018.0L1616.1 1021.8zM1379.2 295.2L1380.7 295.6L1382.3 297.2L1379.5 299.2L1377.9 297.9L1375.8 296.0zM1779.4 915.1L1779.4 918.8L1777.7 920.5L1775.0 923.7L1771.0 921.2L1769.0 917.8L1771.5 914.2zM2165.4 1353.6L2168.2 1355.4L2169.4 1363.1L2165.0 1363.3L2158.8 1359.3L2161.4 1354.5zM2642.8 382.2L2646.6 381.0L2648.5 381.1L2653.6 382.5L2651.8 384.8L2647.2 389.3L2645.2 385.8zM2611.9 176.8L2613.2 172.2L2620.5 173.7L2620.9 177.7L2616.8 181.9zM1680.1 447.5L1683.1 445.1L1686.6 446.4L1687.0 448.5L1684.4 451.1zM2637.9 853.6L2643.0 853.5L2641.9 857.1L2636.9 856.9zM2075.3 1080.5L2082.8 1082.7L2080.1 1090.8L2074.1 1088.3zM1286.2 799.1L1286.9 800.7L1286.1 801.9L1284.1 801.6L1282.8 799.5L1283.5 798.4L1284.2 797.5zM2416.9 214.4L2412.9 216.2L2409.7 214.7L2410.7 210.8L2415.9 211.0zM1734.1 815.3L1732.7 817.1L1729.5 818.5L1726.6 815.6L1729.2 814.2L1731.5 812.0zM2154.8 1230.9L2160.2 1231.2L2163.4 1231.4L2163.6 1235.2L2160.2 1240.2L2154.9 1239.3L2155.2 1236.1zM1580.4 708.1L1586.6 703.6L1592.1 706.9L1585.9 712.3zM2348.5 882.9L2346.5 882.8L2345.7 882.4L2346.1 880.4L2348.5 880.3L2351.3 881.0L2349.5 882.5zM2247.6 749.8L2250.9 755.8L2246.2 756.2L2238.6 753.7L2237.9 749.6L2245.6 748.4zM1244.5 1477.2L1245.5 1475.6L1247.3 1474.6L1250.1 1475.7L1249.2 1477.2L1247.7 1480.3L1245.5 1479.1zM1444.9 742.7L1441.5 738.9L1440.7 734.7L1444.7 733.2L1450.4 736.6L1450.5 739.8zM1387.3 1182.2L1384.0 1176.2L1386.1 1173.0L1390.7 1175.8L1392.1 1180.3zM1592.8 821.5L1589.1 820.4L1588.9 818.5L1591.6 817.4L1593.4 819.3zM1631.7 840.6L1629.3 839.7L1630.4 837.0L1633.4 838.3zM1625.4 1538.4L1619.4 1540.4L1619.0 1536.0L1623.0 1535.0zM2130.8 1484.5L2127.6 1483.4L2127.0 1480.8L2125.4 1478.8L2130.3 1476.2L2132.4 1479.2L2134.2 1480.8zM2043.4 726.4L2041.8 724.9L2042.1 721.9L2043.8 721.2L2049.4 719.8L2047.2 725.0L2048.9 727.8zM2107.4 740.1L2106.8 737.4L2111.5 736.8L2111.4 740.8L2108.6 742.3zM1881.8 546.9L1871.4 544.3L1871.6 538.8L1880.8 540.2zM1455.0 649.8L1452.5 652.3L1449.1 649.4L1450.1 646.5L1453.9 647.0zM1284.8 342.3L1280.1 342.0L1277.4 336.7L1283.7 336.6L1288.0 340.3zM1146.1 1268.4L1143.4 1269.0L1141.2 1267.5L1139.5 1266.1L1142.4 1262.9L1144.2 1264.4L1148.3 1266.4zM2024.8 1394.3L2022.4 1396.8L2020.0 1396.0L2020.5 1392.0zM1214.0 1100.6L1214.3 1103.5L1211.9 1104.4L1210.5 1100.8zM1257.2 1371.8L1261.3 1375.9L1254.9 1378.5L1250.2 1375.9L1253.8 1372.2zM1617.2 712.6L1621.4 716.3L1618.6 719.6L1613.4 718.4L1612.1 715.7L1611.8 709.6zM2122.3 1265.8L2117.0 1269.5L2113.3 1263.5L2118.7 1258.4zM1567.6 1028.5L1564.9 1029.7L1562.8 1027.7L1563.3 1025.7L1565.2 1025.1L1567.4 1025.9zM1563.1 781.9L1559.1 777.4L1562.8 773.9L1567.6 777.2zM1545.7 1208.6L1550.3 1208.7L1551.4 1212.0L1546.0 1211.3zM1289.2 368.6L1291.6 373.0L1288.6 377.1L1284.6 374.5L1281.0 372.8L1284.0 369.6zM2520.1 965.4L2523.6 965.0L2526.4 966.3L2523.8 969.4L2520.7 970.6L2518.6 970.4L2518.8 965.9zM1605.5 1504.1L1598.4 1508.0L1591.7 1503.3L1599.8 1499.5zM2188.3 741.1L2190.6 739.1L2192.0 741.8L2189.5 743.5zM1943.0 1276.2L1941.8 1273.8L1943.6 1272.0L1946.2 1272.7L1947.2 1274.5L1945.0 1276.4zM2016.4 1001.9L2012.0 1006.6L2010.8 1005.7L2004.8 1004.0L2008.0 1000.2L2009.5 998.8L2013.1 1000.0zM1177.2 1466.5L1179.1 1465.4L1180.2 1466.6L1183.7 1468.4L1180.1 1471.2L1177.2 1472.6L1174.4 1468.0zM1466.7 144.5L1463.0 138.6L1470.6 135.7L1473.9 138.1L1474.2 143.5zM1463.1 330.7L1461.8 333.6L1456.5 331.9L1458.4 327.5L1461.3 327.5zM1518.1 109.0L1524.6 109.1L1522.9 114.6L1517.9 115.7L1513.8 113.0zM1430.1 738.8L1433.2 738.2L1435.3 739.7L1435.6 742.4L1433.7 743.0L1430.7 742.2zM2361.7 417.3L2358.0 418.1L2355.5 414.5L2359.7 412.5zM2112.6 1003.9L2106.1 1001.1L2102.0 998.8L2108.2 995.9L2110.9 994.6L2114.1 999.8zM1772.8 1186.5L1776.6 1185.4L1778.8 1189.2L1775.0 1189.1zM2158.1 1399.4L2155.0 1403.7L2146.9 1400.8L2154.6 1395.9zM1637.3 1467.0L1640.2 1469.2L1643.2 1471.3L1640.3 1474.2L1635.6 1473.7L1633.1 1470.1zM1966.4 444.1L1964.9 441.7L1966.6 440.9L1968.2 440.0L1969.9 441.7L1968.2 443.9zM1760.4 1455.9L1766.2 1455.2L1768.6 1458.1L1768.4 1462.6L1763.4 1461.3zM1659.3 321.9L1661.3 319.8L1665.1 321.8L1662.0 323.9zM1200.6 492.4L1204.4 492.8L1208.8 496.1L1205.0 497.7L1202.0 499.3L1200.1 495.4zM1281.9 1431.5L1272.9 1429.0L1276.0 1424.0L1278.6 1423.3L1283.0 1423.1L1284.7 1429.5zM1121.4 721.7L1118.7 722.8L1116.1 723.0L1113.6 721.1L1116.9 719.3L1118.6 718.8zM1376.9 201.3L1377.0 198.8L1379.3 196.7L1381.8 197.8L1382.3 199.8L1381.1 202.6L1378.2 202.1zM2213.9 294.0L2211.0 291.7L2213.7 288.4L2216.8 288.3L2218.8 290.1L2220.6 293.0L2215.4 294.9zM2194.4 1249.5L2198.3 1250.1L2197.2 1252.8L2193.9 1253.3zM1125.8 137.7L1125.8 132.5L1131.8 132.0L1136.4 137.9L1129.1 138.9zM1452.0 826.0L1456.4 826.7L1456.7 831.6L1455.1 832.5L1451.8 830.9L1449.5 828.9zM1987.2 498.6L1988.2 501.4L1990.1 503.9L1984.2 504.0L1980.8 504.6L1977.4 499.5L1983.6 497.6zM2664.5 838.2L2661.6 834.1L2664.0 831.1L2667.3 833.2L2669.1 837.0zM2113.3 1145.5L2109.6 1145.1L2110.5 1143.4L2113.4 1140.9L2114.9 1142.0L2117.9 1143.9L2115.2 1145.2zM2300.3 821.0L2303.2 824.8L2298.7 827.9L2294.5 824.5L2292.6 821.1L2294.6 818.7zM2038.7 280.9L2042.8 284.6L2045.8 287.2L2040.6 291.3L2036.5 287.6L2036.6 284.4zM1089.6 318.9L1086.1 316.9L1088.6 313.3L1093.1 315.5zM1624.4 274.2L1627.7 274.5L1626.2 277.7L1623.7 277.0zM1616.4 801.3L1616.6 803.9L1612.9 806.3L1611.3 803.5L1611.7 799.1L1614.3 797.4zM1307.5 1513.5L1312.8 1517.0L1310.0 1520.9L1306.2 1521.8L1304.1 1517.8zM2347.4 610.1L2350.7 605.8L2357.6 604.2L2364.4 608.8L2355.9 614.0zM1641.4 1122.4L1640.0 1121.7L1638.7 1118.0L1639.9 1114.8L1641.7 1115.2L1645.9 1116.3L1644.1 1118.5zM1455.0 593.1L1458.5 593.8L1460.8 595.3L1459.7 597.3L1458.5 599.5L1455.3 598.0L1454.2 595.7zM2540.9 610.6L2538.9 607.8L2535.1 607.5L2537.8 602.5L2540.1 601.8L2546.3 602.8L2542.0 606.2zM2383.9 1087.2L2385.9 1087.3L2388.5 1088.8L2386.8 1089.6L2383.2 1089.8zM1939.3 1315.2L1940.7 1306.4L1944.7 1306.2L1947.9 1311.9zM1654.8 89.2L1660.5 85.9L1663.5 87.0L1665.3 89.7L1665.3 93.3L1660.8 95.9L1658.3 92.5zM1388.1 241.8L1386.8 249.9L1380.9 246.6L1382.5 241.5zM2725.1 424.5L2723.1 419.2L2724.1 415.8L2728.7 416.7L2731.2 418.8L2731.2 422.1L2727.4 423.1zM1337.7 608.7L1339.1 614.6L1336.9 617.6L1333.0 614.7L1330.9 610.9zM1928.6 742.1L1927.2 741.1L1927.3 740.4L1928.7 738.3L1930.6 739.5L1931.0 740.2L1931.2 742.2zM1483.0 462.5L1483.4 465.4L1483.4 467.4L1480.6 468.1L1478.0 465.9L1477.5 463.1L1481.2 461.4zM2170.1 560.7L2170.7 558.9L2170.7 557.6L2173.1 557.4L2174.4 558.6L2174.4 560.9L2172.4 560.6zM1986.4 1209.0L1981.0 1210.4L1979.4 1203.0L1986.7 1200.8zM2312.0 1313.8L2313.1 1314.8L2312.7 1316.0L2311.6 1318.0L2309.6 1316.5L2307.1 1314.9L2310.5 1313.3zM1136.4 862.2L1138.7 861.3L1140.6 863.2L1143.2 865.3L1138.9 866.3L1135.9 866.2L1134.2 863.8zM1395.4 374.5L1393.3 376.9L1391.0 372.6L1394.5 371.9zM2460.2 289.0L2460.9 285.9L2468.0 287.5L2466.7 294.5L2462.1 293.8zM2523.9 1251.1L2520.6 1245.4L2524.9 1243.3L2529.3 1243.9L2527.2 1248.4zM1613.8 667.3L1611.3 666.6L1609.0 665.3L1609.4 664.1L1612.3 663.1L1613.8 664.3zM2472.6 408.2L2476.4 405.0L2479.9 410.9L2473.4 412.1zM2414.8 1135.7L2416.8 1139.4L2413.9 1142.3L2410.6 1138.2zM1335.7 1461.1L1333.7 1460.3L1333.6 1458.0L1334.8 1456.9L1338.8 1456.7L1339.8 1460.3L1337.3 1460.6zM1138.2 1234.6L1142.4 1236.8L1144.6 1240.6L1140.5 1243.1L1134.0 1238.8zM1160.4 437.7L1153.9 440.8L1151.8 435.1L1155.4 432.8zM1464.8 1150.8L1466.7 1154.1L1465.3 1157.8L1460.4 1155.7L1459.8 1151.9zM1131.6 610.4L1134.8 609.9L1136.7 611.2L1137.4 614.7L1135.2 615.9L1130.9 614.3zM2155.1 1003.2L2157.5 1003.6L2156.2 1006.7L2154.4 1006.7L2152.9 1005.4L2153.2 1003.7zM2384.9 1045.3L2390.1 1046.5L2389.0 1052.4L2387.0 1054.0L2382.5 1052.9L2378.9 1050.5L2382.3 1045.0zM2199.3 138.4L2194.4 133.5L2203.4 132.7L2208.1 136.9L2202.5 142.0zM1063.5 1329.8L1062.9 1328.1L1067.0 1328.1L1067.0 1331.0L1065.0 1331.7zM1663.2 1046.4L1663.2 1049.0L1659.8 1051.9L1657.7 1049.5L1655.4 1047.6L1659.0 1043.3L1661.6 1044.2zM2598.1 817.5L2602.9 819.4L2600.5 827.0L2593.3 825.2L2592.5 819.4zM1326.0 916.3L1328.6 921.7L1322.2 925.3L1318.4 922.4L1316.5 919.1L1322.4 914.5zM2199.4 610.6L2195.1 608.0L2196.4 606.4L2197.8 604.0L2200.7 605.0L2202.0 607.2L2201.2 608.6zM1113.7 1287.5L1120.7 1287.8L1125.5 1289.2L1121.3 1292.3L1118.7 1294.4L1114.1 1292.2zM2462.7 667.0L2459.4 662.5L2463.4 660.5L2467.5 660.1L2468.8 663.7L2466.4 665.6zM2375.5 1306.7L2378.9 1304.9L2381.6 1305.5L2380.6 1308.7L2378.3 1310.1zM1407.8 405.1L1407.9 403.4L1409.9 402.5L1411.6 405.4zM1115.0 1293.8L1113.7 1291.7L1115.1 1288.6L1118.1 1290.4L1118.1 1292.5zM2657.6 478.7L2657.8 474.7L2661.9 476.8L2660.8 478.7zM1816.2 1081.3L1812.9 1080.7L1809.3 1080.6L1812.5 1074.6L1816.6 1073.5L1818.5 1077.4L1817.9 1079.5zM1750.8 1301.4L1753.7 1300.5L1757.1 1301.1L1758.9 1305.3L1754.3 1306.6L1752.5 1304.8zM1582.2 1393.9L1588.7 1387.6L1594.2 1394.3L1585.2 1399.6zM2561.6 718.9L2558.2 717.0L2559.6 714.3L2563.4 716.0zM2547.5 786.8L2546.2 791.6L2537.8 789.6L2537.8 783.6L2545.1 783.1zM1333.2 1027.5L1338.5 1030.1L1340.2 1037.6L1334.1 1038.1L1328.1 1033.6zM1461.9 1409.7L1458.8 1412.5L1456.0 1408.7L1459.1 1408.2zM1227.8 1509.1L1221.7 1510.2L1223.0 1504.2L1225.2 1502.7L1230.7 1504.1zM2238.0 1051.0L2235.4 1045.3L2237.8 1043.9L2241.9 1044.9L2243.1 1046.7L2244.7 1050.9L2240.9 1050.7zM2335.0 289.8L2340.0 291.1L2339.0 294.3L2334.1 297.2L2328.7 293.4L2333.2 290.6zM2480.3 706.0L2485.8 703.4L2486.2 708.4L2482.7 713.5L2476.4 710.6zM1598.3 1257.7L1597.5 1255.7L1600.1 1255.2L1602.0 1257.0zM1619.6 171.6L1616.4 171.2L1615.6 170.1L1615.6 168.8L1617.2 167.8L1619.7 168.7L1621.4 170.0zM2322.3 442.4L2318.0 442.7L2318.0 439.7L2320.9 437.3zM1169.8 180.7L1174.9 179.9L1177.2 182.6L1178.5 187.8L1174.5 187.6L1171.5 188.0L1170.5 184.9zM2104.8 1320.0L2102.6 1319.2L2102.9 1316.3L2104.7 1317.3zM1073.3 1329.3L1072.6 1328.2L1073.7 1326.7L1076.5 1326.6L1076.6 1328.3L1076.0 1330.1zM1846.0 1352.2L1847.8 1352.7L1846.8 1354.1L1845.6 1355.0L1844.5 1354.4L1842.4 1352.6L1844.2 1352.1zM2001.8 1358.3L2000.1 1360.4L1995.4 1357.4L1994.2 1353.0L1997.2 1350.4L2001.1 1350.5L2003.5 1354.6zM1066.8 1033.0L1071.4 1033.0L1071.4 1037.2L1066.1 1036.5zM2155.0 1029.6L2157.9 1028.0L2162.1 1033.7L2153.1 1034.1zM1068.0 1470.8L1068.1 1469.4L1069.6 1467.3L1072.1 1465.7L1073.0 1468.0L1074.1 1470.8L1072.1 1472.2zM2421.2 968.3L2418.6 969.2L2415.3 968.6L2415.6 966.1L2417.3 963.8L2422.8 963.6L2423.4 966.0zM1138.5 1417.8L1138.1 1420.7L1134.6 1421.3L1135.7 1418.0zM1941.8 1075.2L1941.8 1070.8L1946.1 1070.7L1947.0 1075.7L1944.2 1076.7zM2595.7 730.3L2598.0 726.2L2603.0 727.3L2604.7 730.1L2601.0 731.6zM2130.9 1365.5L2130.7 1367.9L2128.4 1369.6L2125.5 1366.8L2128.3 1365.1zM2108.5 500.5L2113.0 502.2L2116.1 506.1L2110.6 508.3L2107.4 506.9zM1510.5 178.5L1508.4 180.0L1508.3 178.4L1508.5 176.5L1510.7 176.9zM2529.7 568.2L2522.2 570.1L2520.4 565.1L2523.6 559.7L2526.5 559.2L2530.0 564.9zM2403.4 210.0L2407.4 213.6L2403.5 215.7L2398.7 217.0L2398.9 211.0zM1610.6 161.6L1606.4 159.3L1608.7 156.2L1612.0 158.1zM2439.8 1130.4L2440.2 1126.8L2443.0 1124.4L2446.6 1125.6L2451.2 1131.0L2444.4 1132.8zM1172.3 1044.8L1172.5 1041.3L1177.4 1040.3L1182.4 1042.2L1181.0 1044.1L1178.0 1045.9L1174.1 1045.6zM2092.9 517.1L2093.4 514.9L2094.6 514.6L2095.6 515.0L2095.1 517.1L2093.7 517.8zM1263.6 436.9L1256.0 435.4L1253.2 427.8L1260.9 426.4zM2593.8 792.2L2601.3 796.3L2599.2 800.5L2591.7 801.6L2590.2 798.6L2591.9 793.6zM1114.0 1539.3L1115.3 1541.0L1115.8 1543.8L1111.1 1544.3L1108.8 1542.3L1112.0 1538.6zM2417.2 448.8L2417.7 445.7L2419.1 444.0L2426.8 444.1L2427.8 447.6L2423.9 452.2L2419.4 450.9zM2464.0 1148.2L2461.0 1149.1L2459.9 1145.7L2464.7 1144.2zM1569.9 1010.1L1565.3 1006.5L1569.4 999.5L1572.2 1001.5L1575.3 1001.7L1579.1 1006.8L1574.5 1009.1zM2011.3 111.7L2007.1 111.4L2007.9 108.2L2011.7 109.3zM1176.3 686.7L1176.8 684.9L1182.5 684.6L1182.1 687.5L1180.3 689.7L1179.1 689.5zM2566.0 1324.8L2568.8 1321.2L2572.6 1324.6L2573.5 1328.7L2569.3 1328.8zM2258.5 1177.1L2254.5 1176.5L2255.7 1174.6L2257.7 1172.0L2260.4 1173.6L2262.5 1177.0zM1991.7 682.8L1993.8 683.1L1996.1 685.7L1993.5 687.3L1990.6 686.4zM1356.0 781.2L1357.2 778.0L1359.5 777.2L1362.1 777.3L1364.3 781.8L1361.5 783.9L1358.5 784.0zM1902.9 1119.7L1906.8 1117.5L1911.4 1120.3L1912.1 1123.1L1910.9 1125.5L1906.4 1124.7L1902.1 1121.4zM1789.7 482.5L1790.5 477.0L1795.9 475.5L1796.1 480.5zM2588.4 870.8L2586.9 868.3L2587.4 866.0L2589.8 865.3L2591.0 867.2L2592.7 869.9zM1301.6 1305.1L1303.5 1306.5L1301.4 1306.9L1300.6 1308.4L1299.4 1307.1L1297.7 1305.1L1299.6 1303.6zM1710.8 447.5L1709.8 449.6L1705.8 448.1L1708.0 445.0zM2019.1 735.9L2023.9 735.1L2024.9 739.1L2024.9 744.1L2016.4 743.2L2016.8 738.5zM2166.0 568.2L2161.9 564.5L2167.6 561.8L2170.5 564.6L2171.5 567.8zM1515.3 1433.6L1511.4 1432.7L1512.1 1430.1L1515.3 1430.6zM1792.2 1141.1L1795.1 1139.8L1799.4 1141.1L1797.0 1144.5L1794.9 1145.9L1792.0 1144.2L1792.4 1142.7zM1292.4 1075.6L1292.8 1073.3L1293.5 1071.6L1297.0 1073.0L1296.1 1075.0zM2075.1 1478.6L2080.3 1480.2L2078.4 1483.6L2072.8 1485.6zM2726.0 170.6L2723.8 170.3L2722.2 167.8L2723.1 165.6L2725.7 163.8L2729.4 167.1L2727.3 168.7zM2689.3 560.0L2689.4 555.1L2693.8 556.1L2694.1 559.0zM2105.8 902.1L2109.5 899.5L2112.4 898.6L2117.0 902.7L2114.1 904.9L2108.6 907.8zM1235.7 495.2L1238.1 494.3L1237.3 497.1L1234.8 498.5L1234.7 497.1zM2446.8 220.3L2452.9 217.8L2458.7 222.0L2458.7 228.6L2453.4 230.6L2450.8 226.7zM1942.1 640.3L1945.0 639.2L1948.5 638.9L1949.5 642.3L1946.5 644.3L1944.3 643.6zM2327.8 426.1L2330.3 430.1L2326.8 433.5L2323.6 433.0L2321.3 429.6zM2324.1 574.2L2322.8 575.0L2320.0 574.6L2319.4 572.0L2322.3 570.6L2323.4 572.4zM1125.3 841.4L1129.9 837.8L1132.9 838.2L1133.8 842.2L1128.2 843.6zM2182.6 402.6L2182.1 405.4L2179.2 404.0L2177.2 401.4L2176.9 400.3L2180.7 400.1L2182.5 401.5zM2713.6 1134.3L2707.0 1135.3L2706.6 1129.7L2713.5 1130.4zM1201.3 1139.9L1205.6 1139.1L1206.9 1144.2L1203.4 1148.2L1197.5 1143.8zM2657.6 1234.2L2651.5 1229.1L2657.8 1224.0L2662.1 1225.8L2661.7 1230.6zM2108.7 733.4L2106.9 732.5L2105.8 729.2L2107.6 728.1L2110.6 727.9L2111.7 730.2L2112.3 732.9zM2119.4 1096.7L2118.6 1091.9L2122.8 1092.7L2123.3 1096.5zM1222.1 358.7L1226.5 363.4L1222.0 368.2L1214.0 366.9zM1603.8 1330.6L1604.5 1326.2L1609.3 1320.5L1611.6 1323.9L1612.3 1327.3L1612.1 1328.8L1608.8 1332.0zM1440.9 223.9L1437.3 221.8L1438.4 216.3L1442.0 216.2L1445.4 220.2zM2710.9 433.1L2708.8 427.4L2713.1 423.9L2718.2 426.9L2717.5 431.3zM2664.1 303.5L2669.0 306.4L2667.9 311.9L2663.5 314.4L2657.7 310.9L2659.2 307.7zM1244.7 499.3L1244.4 503.2L1241.0 504.6L1238.4 501.8L1239.7 497.8zM1756.3 1482.4L1755.3 1483.4L1752.6 1483.7L1751.7 1482.1L1751.6 1480.0L1751.8 1478.9L1755.0 1480.1zM1362.8 1264.8L1366.6 1264.8L1366.7 1268.2L1362.0 1271.5L1358.9 1267.8zM1581.9 260.9L1585.2 259.0L1590.4 254.5L1592.4 256.0L1592.7 262.1L1591.0 264.8L1586.2 264.8zM1394.6 1398.5L1390.3 1397.0L1390.4 1393.9L1394.1 1394.0zM2067.7 1499.5L2070.2 1504.2L2064.6 1504.2L2061.9 1500.4zM1382.8 1482.0L1379.9 1483.8L1378.3 1480.5L1381.9 1477.5L1383.7 1479.9zM2585.7 1449.0L2586.8 1444.8L2589.6 1444.4L2589.7 1447.2L2588.4 1450.0zM2408.9 1356.2L2412.0 1355.0L2415.7 1356.9L2414.2 1359.8L2410.5 1359.1zM1907.7 295.7L1906.2 294.2L1907.4 292.0L1909.5 290.9L1912.3 292.6L1911.2 295.4L1909.5 297.1zM2017.2 1026.1L2020.3 1026.2L2020.1 1028.9L2016.4 1030.1L2013.9 1029.2L2012.0 1028.6L2013.1 1024.9zM2320.6 1344.6L2321.1 1342.4L2323.9 1343.7L2323.0 1346.4zM2308.9 1074.4L2309.4 1071.4L2305.4 1066.9L2310.3 1067.3L2313.4 1067.5L2314.5 1069.1L2316.5 1072.6zM1779.3 1004.7L1784.4 1005.7L1786.1 1009.8L1782.8 1015.1L1776.8 1011.2zM2285.6 170.1L2290.6 176.7L2283.0 179.9L2277.8 174.7zM1688.7 370.2L1686.2 369.0L1688.3 366.2L1691.7 366.4L1697.0 367.6L1694.2 370.6L1692.1 371.9zM1563.5 939.4L1556.5 940.0L1558.9 934.5L1564.2 933.0zM1982.6 961.9L1983.7 963.6L1984.2 965.2L1980.9 965.7L1979.3 964.2L1981.1 961.9zM1364.2 720.5L1362.1 717.6L1362.1 716.0L1365.8 715.3L1368.1 717.6L1367.3 720.8zM1486.0 1274.2L1482.7 1275.1L1477.4 1271.5L1483.1 1269.2L1487.4 1269.7zM2135.6 851.0L2134.7 855.1L2130.4 855.2L2129.9 851.3L2132.6 849.4zM1112.1 189.9L1117.0 193.2L1113.4 198.4L1105.3 195.0zM1333.8 303.5L1334.3 299.3L1339.5 302.4L1343.9 305.3L1337.1 307.4zM2112.6 1232.5L2112.7 1229.6L2114.8 1229.4L2116.3 1231.0L2114.8 1233.2zM2039.7 1371.6L2042.4 1375.1L2040.0 1379.1L2033.7 1377.2L2035.9 1373.1zM1674.6 221.7L1677.3 222.0L1679.9 224.3L1678.7 227.6L1675.0 227.1L1669.9 225.6zM1801.7 1237.2L1807.8 1239.9L1801.9 1243.5L1799.3 1242.6L1797.5 1238.4zM1145.7 1370.6L1147.0 1370.6L1149.0 1373.2L1144.3 1373.2zM2025.1 94.3L2026.0 92.9L2028.4 90.5L2031.2 90.7L2031.7 95.7L2028.5 96.3zM2175.2 81.0L2174.8 78.3L2176.2 75.0L2182.1 78.8L2180.2 82.5zM2023.7 286.3L2028.5 286.4L2032.1 287.7L2031.4 294.1L2027.3 293.2L2023.8 290.8zM2039.2 1482.0L2035.3 1477.5L2039.9 1472.3L2045.4 1477.4zM1324.2 1313.7L1322.6 1310.0L1327.7 1308.7L1328.2 1312.8zM2548.7 302.4L2545.5 303.8L2541.1 299.2L2546.3 299.0zM1711.8 292.7L1707.1 290.1L1708.4 286.4L1711.3 283.8L1713.5 285.4L1716.4 288.1L1716.1 290.5zM1325.7 181.1L1328.2 186.7L1320.3 185.8L1320.8 179.4zM1818.3 608.7L1816.3 611.5L1810.8 611.0L1812.4 607.2L1811.2 604.8L1815.9 603.2L1820.7 605.6zM1368.1 88.4L1367.1 81.4L1370.6 80.2L1377.9 79.6L1377.6 86.3L1375.2 89.5zM2519.8 687.6L2517.4 680.9L2524.3 677.3L2525.2 683.5zM2719.9 528.8L2722.8 529.2L2725.5 529.6L2724.8 532.6L2723.3 532.8L2720.6 532.2zM1475.8 539.5L1472.1 540.9L1470.9 541.3L1467.0 540.1L1468.2 537.0L1471.2 536.3L1475.0 536.2zM1291.4 552.9L1287.8 554.8L1286.5 552.0L1290.6 549.5zM1635.4 1257.9L1639.0 1259.0L1640.0 1262.2L1637.4 1263.1L1634.0 1264.7L1632.3 1261.6L1631.9 1258.8zM1859.6 601.4L1855.9 603.1L1852.0 601.2L1851.2 597.8L1853.6 594.7L1856.6 593.6L1859.0 596.2zM2327.2 1256.3L2325.3 1252.7L2325.7 1249.1L2330.2 1250.6L2333.5 1255.3zM1565.7 1190.5L1564.7 1193.7L1561.3 1194.3L1560.0 1194.3L1558.8 1191.8L1559.6 1190.9L1561.8 1189.9zM1670.9 252.5L1669.1 253.7L1666.9 252.1L1665.9 249.9L1668.8 248.8L1670.6 249.6zM1380.8 846.5L1379.1 844.4L1380.5 842.9L1382.3 842.9L1384.3 843.7L1385.6 844.9L1383.3 846.0zM1843.0 1447.1L1841.3 1447.1L1839.2 1444.5L1841.5 1443.2L1843.0 1443.1L1845.9 1443.8L1845.2 1445.6zM1546.4 994.3L1547.4 992.4L1552.3 989.4L1559.1 992.3L1557.6 994.4L1552.2 996.9L1548.0 998.6zM1509.6 117.8L1513.6 114.1L1517.8 114.1L1520.1 118.7L1516.4 123.1L1509.1 120.6zM2477.4 1358.3L2479.5 1355.9L2481.9 1356.4L2483.6 1360.0L2478.3 1360.9zM2717.6 392.5L2715.7 392.8L2715.3 390.2L2716.8 389.2L2718.9 389.7L2718.6 391.8zM1397.5 569.4L1397.5 561.2L1403.9 561.1L1405.9 566.5L1402.7 569.3zM2107.1 173.6L2108.4 171.1L2110.2 171.0L2111.3 173.2L2110.6 174.8L2106.1 175.3zM2581.0 425.6L2578.5 422.8L2577.8 418.4L2579.3 415.6L2582.9 418.1L2585.5 420.6L2585.7 423.6zM2619.4 983.1L2621.2 980.1L2624.2 980.6L2623.0 982.9zM1610.1 1460.0L1614.3 1463.7L1608.7 1467.5L1603.7 1466.3L1602.4 1461.5L1606.4 1458.9zM1540.6 1104.2L1544.4 1102.6L1547.4 1106.2L1545.3 1107.2L1542.1 1106.9zM1617.0 385.1L1610.0 383.8L1603.5 377.3L1610.3 373.6L1617.0 375.1zM1239.2 511.8L1234.8 513.5L1230.3 513.8L1229.0 510.4L1233.7 507.6zM1370.3 793.8L1372.2 790.9L1376.8 790.1L1381.6 792.9L1377.8 796.6L1374.5 797.4zM2361.1 197.8L2366.8 197.1L2367.6 200.5L2363.0 201.7L2360.0 200.4zM1757.5 925.9L1759.7 928.1L1759.5 930.3L1756.1 930.5L1754.9 928.1L1756.2 926.6zM1725.5 260.5L1726.9 257.6L1732.5 259.9L1731.1 263.1L1729.6 263.6L1726.3 263.6zM1218.7 1117.7L1216.6 1113.2L1217.7 1108.6L1221.5 1108.9L1226.1 1112.8L1222.9 1116.1zM2335.4 893.5L2329.9 894.3L2327.9 893.0L2330.1 889.2L2332.3 889.2L2336.0 891.0zM2102.6 1294.5L2101.2 1296.3L2098.4 1295.4L2099.8 1293.0L2102.3 1292.3zM2199.7 519.4L2200.4 523.6L2197.9 525.8L2192.0 526.3L2193.7 522.2L2193.4 518.2L2197.9 519.5zM2593.3 766.4L2590.7 764.4L2592.0 763.4L2593.4 761.6L2595.7 763.1L2595.5 764.5L2595.7 767.0zM2665.1 401.9L2665.2 397.9L2669.6 399.4L2667.5 402.4zM2495.5 667.5L2493.3 666.3L2491.0 664.9L2494.0 663.8L2495.9 662.9L2497.3 665.4zM1603.8 522.8L1608.2 521.4L1608.2 524.5L1603.4 526.5zM1096.0 1467.4L1093.2 1469.4L1091.7 1467.0L1091.6 1465.6L1093.0 1463.2L1095.4 1464.7zM1475.2 220.9L1474.6 214.6L1480.2 214.3L1483.5 214.9L1484.3 220.2L1482.2 224.6L1476.3 224.5zM1741.2 1318.9L1740.4 1322.7L1736.8 1320.4L1736.2 1317.5L1738.5 1317.0zM2040.0 1515.3L2042.9 1515.5L2043.1 1519.6L2039.8 1517.8zM1801.5 862.0L1804.6 858.3L1810.6 860.8L1807.0 866.2zM1767.1 347.3L1767.2 351.1L1759.8 351.3L1760.5 345.2zM2150.2 1347.4L2153.1 1348.4L2150.3 1351.2L2148.3 1351.0L2146.8 1347.9L2148.8 1346.8zM1403.5 1032.9L1401.2 1031.6L1401.3 1029.2L1403.1 1028.1L1406.6 1028.1L1405.6 1030.1zM2121.9 993.7L2115.6 992.2L2118.1 987.9L2122.5 987.1zM1795.8 1225.6L1797.7 1231.2L1792.9 1233.1L1792.2 1228.3zM2206.8 963.9L2210.0 964.4L2209.7 966.9L2212.1 971.2L2205.7 971.6L2203.1 971.0L2204.7 967.7zM2701.1 381.1L2700.7 377.9L2702.4 375.4L2707.0 375.0L2706.1 379.6zM2440.5 986.6L2439.4 984.2L2441.2 983.1L2443.4 982.7L2445.7 985.3L2444.8 987.3L2443.7 988.6zM1264.5 237.7L1267.1 240.1L1263.0 242.3L1261.8 240.6L1261.6 237.8zM2055.8 1047.2L2053.7 1051.6L2050.1 1050.6L2049.5 1045.3zM2096.5 633.0L2094.2 630.7L2094.1 628.8L2098.5 630.4zM1383.0 672.1L1381.7 671.9L1379.8 670.1L1381.8 668.1L1383.2 669.0L1383.9 669.8L1384.1 672.3zM1416.6 940.3L1422.8 942.5L1421.9 948.8L1415.1 945.9zM2733.9 1093.8L2732.3 1095.7L2728.8 1094.8L2730.9 1091.3zM2718.4 1538.3L2722.5 1540.3L2724.2 1543.8L2719.7 1546.3L2713.9 1547.7L2713.8 1542.9zM1823.0 997.0L1821.3 996.0L1821.7 994.4L1823.6 993.3L1826.3 994.4L1825.4 996.8zM1617.7 124.7L1616.8 131.7L1610.2 130.2L1608.7 123.9zM2643.9 764.1L2645.4 761.8L2647.5 761.5L2654.5 761.8L2654.3 766.1L2649.1 768.9L2645.5 767.9zM1712.6 1136.6L1719.6 1134.5L1722.5 1134.9L1724.2 1140.1L1719.0 1140.1zM1959.4 528.6L1958.7 532.4L1952.5 530.0L1954.9 523.4zM1228.5 749.9L1224.0 747.2L1222.6 743.6L1227.5 743.3L1228.9 745.0zM2689.7 592.5L2692.5 599.4L2687.7 599.2L2684.9 595.5zM1989.8 146.8L1986.1 146.6L1985.2 144.8L1985.6 141.2L1987.4 140.0L1990.5 142.5zM2389.1 1396.0L2385.0 1394.9L2384.0 1389.9L2390.2 1392.2zM1849.4 120.2L1856.9 116.9L1858.4 123.8L1851.5 127.9zM1907.5 534.8L1911.0 537.0L1906.3 539.7L1904.4 539.7L1902.0 537.3L1903.6 534.9L1905.8 532.6zM1551.9 629.1L1554.3 629.8L1554.1 633.8L1549.7 631.2zM1520.3 762.1L1519.0 757.8L1522.1 754.5L1525.7 753.4L1527.6 757.0L1526.4 759.5L1524.7 763.0zM2355.5 361.9L2352.5 358.3L2356.6 352.0L2363.7 359.2zM2082.3 554.1L2078.0 558.2L2073.3 560.9L2069.6 557.4L2075.0 551.7zM2280.0 282.2L2283.2 281.6L2285.8 284.5L2284.6 287.4L2279.9 289.4L2276.7 286.3zM2356.4 145.7L2358.5 143.3L2361.9 141.6L2364.3 143.9L2362.9 146.6L2365.0 150.3L2357.7 148.1zM1524.0 1262.3L1524.7 1258.9L1523.3 1254.4L1527.7 1254.2L1529.2 1257.2L1529.9 1259.4zM2470.4 1254.7L2468.3 1256.5L2465.4 1256.4L2467.3 1253.4zM2624.6 155.7L2620.1 157.4L2614.4 152.3L2615.5 148.6L2622.4 150.4zM2565.8 612.1L2561.8 610.4L2564.7 605.7L2569.7 609.6zM2442.2 1256.9L2444.3 1261.2L2440.7 1264.0L2435.6 1260.8L2438.5 1258.2zM2544.1 873.8L2548.3 876.5L2552.4 877.8L2549.8 884.0L2543.9 884.3L2541.5 880.6zM1604.5 1251.7L1602.7 1258.2L1595.2 1254.0L1599.2 1249.3zM1946.6 485.8L1949.9 483.6L1952.6 486.2L1955.2 489.3L1949.9 491.1L1945.3 491.4L1943.1 487.6zM1192.0 179.3L1192.8 180.7L1195.9 182.2L1192.2 187.2L1189.5 184.5L1187.2 184.0L1189.0 181.2zM2491.4 355.1L2493.6 354.0L2497.6 355.1L2495.4 359.3L2493.4 361.0L2490.5 357.9zM1183.3 792.3L1182.1 789.7L1186.6 787.2L1189.4 790.0L1185.9 792.6zM1984.7 645.5L1979.7 648.3L1976.4 645.5L1973.6 640.2L1977.9 638.0L1982.4 641.5zM1788.2 333.3L1788.0 334.1L1786.4 337.1L1784.2 337.3L1782.1 336.3L1783.1 333.5L1784.5 331.2zM1454.7 799.4L1452.1 802.9L1448.9 801.3L1451.2 798.0zM1073.6 759.3L1071.6 760.4L1069.3 758.2L1071.7 756.1L1074.1 756.5zM2215.8 1442.8L2212.2 1438.9L2214.1 1435.5L2218.6 1437.0L2222.2 1437.8L2222.8 1441.7L2218.3 1443.3zM2240.4 603.2L2244.0 604.9L2245.7 607.1L2242.6 609.2L2237.4 609.1L2234.4 608.3L2238.7 604.4zM1063.8 959.5L1064.2 956.1L1063.7 951.7L1066.7 951.7L1072.5 953.0L1071.6 956.5L1070.1 958.9zM2181.1 323.6L2174.6 327.3L2171.8 324.7L2171.5 321.1L2176.4 319.4zM1898.3 265.0L1903.0 261.8L1904.5 265.8L1902.7 268.4zM1600.4 1206.0L1597.6 1207.6L1593.8 1204.8L1593.8 1201.6L1597.6 1199.7L1600.4 1201.4zM2316.0 180.8L2317.6 183.9L2314.7 186.7L2307.5 184.1L2308.6 179.7L2312.9 178.1zM1989.7 728.4L1989.1 731.1L1989.4 732.7L1985.6 733.3L1983.3 730.4L1985.0 728.6L1987.0 728.1zM1487.9 1312.1L1492.5 1312.4L1494.0 1316.3L1492.5 1321.4L1484.3 1320.3L1483.7 1316.6zM1811.7 1473.7L1806.0 1474.4L1806.8 1470.6L1811.0 1469.5zM2453.7 1236.8L2451.7 1234.2L2450.7 1231.7L2453.9 1229.2L2458.6 1229.2L2456.9 1234.2zM1956.9 825.8L1957.7 830.9L1953.3 832.4L1949.6 828.5L1949.4 823.9L1954.6 824.8zM1505.2 971.7L1503.0 972.8L1501.5 969.7L1500.7 967.8L1502.4 966.1L1505.3 965.5L1507.7 969.4zM2007.1 1192.4L2005.6 1199.2L2001.4 1199.4L1998.0 1198.5L1998.1 1194.4L2002.9 1190.7zM1762.6 1238.8L1769.2 1238.8L1769.0 1242.4L1766.7 1246.2L1761.9 1246.5L1760.9 1242.6zM1059.8 845.4L1053.3 843.2L1054.4 836.9L1059.8 837.7L1063.0 840.4zM1541.8 1541.0L1544.0 1537.0L1549.9 1537.2L1551.5 1542.7L1548.6 1546.5L1543.8 1545.1zM2565.6 282.6L2564.4 280.6L2565.7 279.2L2568.5 279.1L2568.3 280.7L2568.4 282.9zM1972.5 148.3L1975.5 148.8L1976.5 150.4L1979.1 151.3L1975.9 153.9L1973.3 152.0L1972.1 151.8zM2094.9 517.0L2098.1 513.4L2101.1 520.2L2097.1 524.5zM1310.2 1139.8L1311.9 1140.3L1312.8 1141.7L1312.2 1143.5L1310.8 1143.5L1308.4 1142.0L1309.9 1140.6zM1400.3 1259.4L1401.3 1261.3L1402.4 1262.9L1398.8 1263.4L1398.3 1262.6L1398.1 1260.1zM1296.7 883.2L1300.0 888.0L1296.6 891.0L1292.8 887.8L1294.6 884.4zM2661.4 543.4L2661.7 537.9L2667.7 534.8L2668.7 538.7L2673.2 543.5L2665.8 547.3zM2160.6 77.2L2156.7 77.2L2156.9 73.6L2160.5 72.2zM2399.9 1244.8L2393.0 1246.2L2390.0 1239.4L2395.3 1239.0zM1691.0 905.8L1688.3 906.3L1686.7 906.1L1685.2 903.9L1687.4 901.8L1690.2 902.4L1692.5 903.9zM1169.7 966.5L1163.4 967.7L1158.8 963.1L1165.0 958.6zM2436.3 1487.1L2437.9 1490.1L2432.7 1491.5L2426.4 1490.4L2429.0 1486.1L2430.7 1484.4L2433.5 1482.2zM2285.9 293.7L2282.5 289.4L2289.6 286.6L2292.4 290.4L2293.8 295.1L2287.9 298.1zM2491.2 611.8L2485.4 611.4L2485.8 605.6L2487.9 602.7L2494.1 605.7L2494.3 610.1zM1893.0 1313.7L1895.0 1315.6L1893.1 1317.4L1888.8 1316.1L1890.6 1313.9zM1345.7 1239.9L1342.9 1238.5L1344.4 1232.8L1349.8 1235.8L1350.6 1237.5L1349.1 1242.3zM1537.6 171.8L1532.7 176.0L1528.1 176.9L1523.6 175.5L1526.4 170.1L1531.6 168.4L1533.6 168.7zM2624.2 804.6L2622.3 799.9L2625.1 796.9L2628.8 797.3L2630.6 800.3L2629.8 804.4zM1652.8 1067.7L1650.2 1067.4L1650.5 1063.2L1651.5 1061.7L1654.7 1059.5L1659.9 1064.0L1659.9 1067.0zM2162.8 299.0L2157.0 301.4L2155.5 296.8L2159.3 294.6zM1052.6 130.6L1053.7 122.7L1059.9 126.1L1059.4 130.8zM2708.0 1098.9L2712.0 1095.0L2716.2 1100.8L2709.6 1105.0zM1936.8 781.4L1939.7 784.3L1942.8 788.3L1936.6 792.0L1932.5 790.1L1929.8 785.0zM1298.6 407.4L1301.0 407.5L1302.8 410.7L1300.2 411.6L1298.7 412.5L1297.4 409.6zM1436.8 1096.7L1434.7 1092.5L1438.0 1089.0L1443.0 1093.3zM2040.0 851.7L2035.8 856.2L2031.3 850.5L2037.2 846.7zM1239.0 241.0L1242.9 244.8L1240.6 247.3L1236.9 243.7zM1217.5 244.7L1223.7 249.9L1219.2 256.3L1215.6 259.5L1209.3 254.1L1207.3 247.5zM1206.5 270.5L1200.8 270.2L1202.2 265.4L1207.2 265.6zM1211.6 259.2L1213.5 256.9L1215.7 255.8L1220.3 258.1L1217.9 259.9L1215.7 260.8L1213.2 260.2zM1226.6 340.9L1229.6 334.3L1232.3 331.8L1238.7 330.5L1239.9 338.1L1236.8 340.5L1232.3 342.6zM1236.5 289.4L1237.9 288.8L1241.7 287.3L1242.3 291.4L1239.8 294.0L1237.6 296.0L1235.0 293.3zM1164.7 249.1L1168.8 254.4L1161.4 257.7L1157.5 254.4L1158.9 248.9zM1217.9 274.1L1216.6 279.7L1212.2 283.7L1207.6 279.5L1209.7 274.1L1213.7 273.2zM1231.7 205.2L1235.3 207.9L1232.0 213.2L1229.5 215.8L1226.7 211.2L1224.4 206.6L1226.9 203.9zM1291.5 225.1L1296.9 219.4L1303.0 217.8L1310.3 222.0L1300.4 228.2zM1241.5 226.1L1239.9 230.7L1238.7 232.5L1235.5 232.2L1233.2 229.6L1233.7 225.7L1238.9 226.8zM1223.4 269.2L1219.3 272.4L1212.6 270.5L1212.4 265.6L1215.3 262.8L1222.5 262.1L1222.3 265.8zM1217.3 248.8L1222.1 253.6L1227.1 255.8L1221.5 260.4L1215.9 261.6L1212.4 257.3L1213.4 254.3zM1205.5 248.4L1200.9 247.8L1200.7 244.2L1205.1 242.6zM1177.8 254.5L1173.3 260.2L1167.5 255.3L1164.2 248.6L1174.9 248.1zM1187.1 285.5L1191.3 282.5L1197.2 288.6L1189.6 293.3zM1216.2 270.8L1215.0 276.0L1212.7 278.9L1206.7 279.0L1199.2 276.4L1201.8 270.5L1210.9 268.6zM1216.6 239.9L1222.2 235.4L1224.6 237.0L1226.6 242.4L1224.8 243.8L1216.9 243.1zM1180.0 233.7L1177.3 227.5L1185.7 226.3L1190.8 233.8zM1230.9 219.5L1229.4 223.7L1226.3 223.5L1227.8 219.6zM1148.0 226.8L1155.4 231.4L1151.0 239.4L1143.1 235.1zM1221.2 253.8L1219.7 247.8L1223.7 248.1L1228.1 249.8L1230.9 253.1L1225.1 257.3zM1242.3 288.3L1242.1 293.5L1240.8 298.3L1237.9 296.7L1232.6 293.9L1235.5 291.4L1238.4 286.4zM1234.3 224.2L1245.8 223.0L1244.9 230.4L1238.2 232.0zM1229.3 234.7L1232.0 236.1L1231.2 237.5L1228.5 239.8L1227.0 238.7L1224.6 235.7L1227.8 234.9zM1231.6 251.6L1238.2 260.2L1230.4 265.0L1223.8 261.8L1224.7 254.4zM1208.5 238.9L1211.3 243.5L1204.4 246.2L1203.8 240.7zM1219.9 250.3L1220.7 253.3L1216.4 255.6L1212.1 255.4L1209.8 254.2L1210.0 251.7L1212.9 249.0zM1219.3 254.5L1220.0 251.4L1224.6 250.6L1222.9 255.2zM1210.7 253.2L1212.8 250.3L1215.7 250.1L1216.3 251.3L1216.3 253.9L1214.7 256.4zM1263.6 276.3L1259.1 267.3L1267.4 265.2L1272.6 271.0zM1233.0 223.6L1229.9 224.3L1223.2 223.5L1225.6 220.4L1226.3 216.7L1230.7 218.4L1235.5 220.7zM1271.4 253.1L1271.0 251.2L1274.8 251.7L1276.2 253.5L1275.1 254.8L1272.7 255.0L1270.9 254.1zM1235.0 241.9L1230.5 243.9L1223.0 244.3L1223.2 238.3L1229.7 235.1L1232.4 237.1zM1266.6 249.4L1265.3 247.7L1265.9 245.0L1268.6 242.6L1272.3 244.8L1273.0 248.5L1269.6 249.1zM1272.3 274.8L1272.8 267.8L1278.4 268.5L1282.0 268.7L1280.9 274.4L1277.8 276.1zM1265.5 249.0L1273.6 248.3L1279.9 250.0L1277.3 252.6L1274.6 257.0L1271.0 259.0L1263.3 253.8zM1261.0 260.3L1262.9 253.9L1269.9 255.6L1268.7 260.6zM1244.2 249.3L1245.8 246.5L1247.8 246.4L1250.0 249.1L1247.9 250.4L1245.7 251.7zM1260.1 253.9L1263.5 255.7L1259.8 259.5L1256.8 256.0zM1276.3 241.6L1280.1 244.7L1276.2 246.0L1274.1 243.2zM1273.6 246.9L1274.7 246.3L1277.2 248.4L1276.0 250.7L1274.0 252.1L1272.7 250.3L1272.0 249.0zM1261.0 255.1L1261.0 252.6L1264.2 250.5L1267.5 252.3L1269.3 256.2L1264.4 256.5zM1276.3 261.6L1275.3 257.7L1280.8 256.5L1283.8 256.3L1287.5 257.6L1283.7 260.8L1280.8 261.3zM1280.6 246.4L1273.7 246.4L1273.6 242.9L1272.5 237.8L1277.8 236.7L1281.8 238.3L1282.6 242.8zM1214.3 250.7L1214.8 248.6L1218.2 249.4L1219.9 251.6L1217.6 253.0L1215.4 253.4zM1203.0 245.0L1206.1 247.1L1204.7 250.0L1200.6 250.2L1198.4 248.8L1200.4 246.7zM1266.2 267.2L1261.0 266.1L1257.4 263.4L1260.1 258.1L1266.2 259.1L1268.5 261.0L1268.6 264.0zM1265.4 225.8L1258.2 226.1L1257.6 223.2L1261.8 220.0L1264.6 223.2zM1240.4 271.8L1234.6 271.6L1233.5 264.9L1238.3 263.2L1240.9 263.1L1245.2 267.5zM1243.6 243.1L1242.7 240.3L1245.0 238.2L1247.0 239.7L1246.2 241.7zM1246.2 246.1L1242.4 247.5L1238.9 243.8L1240.0 240.1L1245.9 237.1L1248.5 240.2L1250.9 242.9zM1271.7 256.9L1272.9 264.6L1266.6 265.8L1263.7 262.0L1263.6 258.4L1264.9 255.1L1268.9 255.8zM1257.3 249.7L1257.3 251.7L1254.8 253.9L1252.7 253.5L1252.1 252.2L1252.3 250.3L1253.7 250.0zM1239.9 263.8L1240.6 259.3L1245.1 259.2L1244.8 263.1zM1627.8 212.6L1627.1 202.1L1635.7 199.9L1635.8 209.0zM1610.2 216.6L1604.2 217.0L1603.7 213.9L1607.3 213.5zM1586.5 241.6L1583.9 238.6L1584.7 235.5L1589.4 232.8L1591.4 235.9L1593.7 240.4L1591.1 242.8zM1583.7 221.0L1582.0 216.2L1581.1 212.6L1584.9 208.7L1591.5 209.3L1594.9 216.9L1588.5 219.0zM1583.1 242.6L1579.7 240.8L1584.8 237.4L1587.7 240.2L1587.5 242.2zM1611.9 177.1L1615.0 178.3L1617.1 179.5L1618.6 182.7L1614.2 184.7L1610.0 183.7L1611.2 180.1zM1601.6 242.1L1600.3 244.0L1597.6 244.8L1594.9 240.8L1597.4 239.7L1601.1 239.4zM1580.9 221.1L1587.6 216.9L1589.7 214.1L1594.9 218.1L1595.3 223.6L1591.5 222.7zM1630.0 247.0L1627.8 243.5L1629.8 242.4L1631.7 244.8zM1554.5 264.2L1547.1 270.8L1542.4 268.9L1541.9 262.5L1548.0 261.3zM1572.3 153.0L1570.8 154.7L1566.1 154.4L1567.5 150.2L1572.2 150.1zM1604.8 197.1L1606.8 199.3L1606.4 202.1L1605.4 204.0L1602.1 203.3L1600.0 202.3L1601.1 197.9zM1600.9 232.6L1599.2 231.6L1597.0 229.2L1600.1 228.4L1602.5 229.2L1602.6 231.1zM1614.8 201.5L1615.1 197.7L1622.4 196.5L1623.1 201.0L1623.8 203.3L1622.1 206.2L1616.5 205.1zM1581.2 223.5L1577.2 221.1L1576.0 218.5L1579.5 217.4L1582.1 218.3L1582.9 221.4zM1556.6 207.6L1560.9 200.6L1567.6 201.1L1569.4 204.9L1571.1 208.3L1564.8 210.4zM1596.1 219.1L1599.2 220.9L1597.8 225.9L1592.3 224.6L1592.2 220.5zM1584.5 252.5L1587.8 255.6L1585.9 258.2L1579.7 255.7zM1576.1 199.2L1571.2 198.2L1569.1 195.1L1569.8 189.3L1580.5 192.8zM1552.1 231.5L1553.6 227.8L1559.9 229.3L1561.9 234.8L1558.3 238.2L1554.7 238.3L1551.2 234.2zM1633.9 215.9L1638.4 219.0L1633.6 223.4L1629.2 218.4zM1592.3 231.7L1591.2 229.1L1592.3 224.6L1598.9 225.8L1601.7 228.5L1597.8 232.8L1594.9 233.0zM1615.1 225.9L1615.5 219.6L1619.2 221.0L1622.3 220.2L1622.0 224.6L1621.0 227.6L1617.0 227.4zM1598.1 220.3L1597.9 215.4L1603.0 213.0L1605.2 215.9L1602.4 218.9zM1552.1 214.0L1560.8 212.9L1563.4 213.5L1561.7 220.9L1555.6 221.9zM1589.9 219.6L1587.8 219.3L1587.4 217.3L1590.5 215.3L1592.8 217.2L1591.7 218.4zM1627.0 180.1L1632.2 180.7L1635.7 181.4L1632.3 186.6L1628.1 188.5L1623.2 182.7zM1595.7 195.3L1600.2 192.5L1606.0 195.1L1599.9 198.9zM1581.1 223.3L1578.4 221.2L1582.5 218.7L1584.7 221.0L1583.7 222.8zM1580.0 222.2L1587.2 224.6L1589.1 229.5L1580.8 228.7zM1574.4 378.8L1579.2 381.7L1580.1 384.9L1579.5 388.6L1574.6 388.4L1570.3 386.3L1570.7 382.2zM1575.1 379.5L1570.2 376.0L1574.5 372.2L1576.5 371.8L1582.6 376.3zM1597.6 372.5L1588.4 384.2L1582.5 376.2L1588.6 368.3zM1575.6 380.6L1572.1 373.7L1579.9 373.8L1581.3 377.6zM1602.1 397.0L1599.5 400.5L1598.3 401.8L1592.9 399.7L1593.7 396.7L1595.0 392.8L1598.7 392.4zM1590.2 365.1L1594.9 362.7L1599.9 367.6L1596.3 370.2L1592.0 369.2zM1570.4 386.9L1580.5 389.8L1574.4 394.9L1565.9 391.8zM1585.0 376.7L1594.5 379.7L1589.4 384.1L1586.1 387.8L1578.1 387.1L1578.2 381.0L1580.0 374.3zM1611.1 403.0L1600.4 407.9L1595.6 400.1L1601.8 398.6zM1577.8 384.1L1577.1 381.9L1580.6 379.1L1582.5 379.1L1584.1 382.6L1582.3 384.3L1580.2 385.9zM1608.4 353.2L1609.8 351.1L1612.8 350.7L1614.0 352.5L1614.1 356.5L1610.8 355.2zM1560.3 379.9L1563.6 373.4L1571.1 374.8L1575.8 383.5L1566.9 385.0zM1561.1 377.0L1565.0 375.2L1568.5 378.2L1564.5 381.8zM1579.0 370.3L1583.7 370.0L1585.6 372.6L1581.6 375.5L1576.2 375.2zM1584.1 377.4L1584.9 378.7L1584.6 380.1L1582.8 381.5L1581.4 381.2L1580.9 379.0L1580.6 376.9zM1780.9 491.3L1783.1 488.0L1784.8 486.4L1788.7 488.7L1785.5 492.9L1782.6 493.5zM1694.0 523.9L1698.4 523.1L1705.6 524.6L1701.9 529.8L1700.8 533.8L1693.8 529.2zM1736.5 526.5L1745.1 523.5L1748.0 530.8L1741.2 532.9zM1811.5 536.2L1813.4 539.5L1810.5 542.3L1807.7 540.7L1807.2 536.8L1808.4 534.6zM1738.8 475.3L1744.2 473.7L1750.7 474.5L1747.8 479.7L1742.6 479.1zM1767.3 488.5L1771.9 489.2L1770.0 494.4L1766.1 497.7L1761.6 493.1zM1790.0 443.5L1787.9 444.5L1787.3 441.7L1788.6 440.3L1792.8 440.0L1791.9 441.9zM1770.3 482.0L1770.5 483.2L1768.5 486.3L1766.7 486.7L1766.3 482.5L1766.8 480.7zM1763.3 450.3L1761.0 452.2L1759.5 453.9L1756.9 454.5L1756.2 451.2L1757.9 449.0L1759.6 449.4zM1790.7 488.6L1790.0 487.2L1791.1 485.3L1794.8 486.1L1796.9 488.3L1795.1 489.2L1792.0 490.8zM1744.2 437.2L1740.4 434.3L1741.6 432.3L1747.4 431.1L1748.5 435.3zM1746.7 463.2L1743.8 459.6L1745.5 457.2L1748.7 454.5L1752.2 458.3L1750.4 461.9zM1742.7 480.5L1741.8 484.0L1738.9 485.9L1737.5 481.5zM1782.9 516.0L1781.1 520.2L1776.7 521.8L1775.3 520.8L1774.3 517.3L1777.4 515.8zM1775.7 495.6L1773.1 496.7L1771.5 495.9L1770.6 494.6L1771.4 492.7L1774.5 493.1zM1765.4 488.0L1762.5 484.5L1763.5 481.0L1765.4 478.9L1770.3 478.8L1773.5 486.9L1771.6 488.1zM1780.3 502.6L1778.0 507.8L1772.5 507.9L1770.2 503.5L1773.9 500.1zM1782.2 475.5L1786.6 474.7L1787.6 478.2L1784.3 480.4L1778.1 478.9zM1800.6 504.8L1798.4 499.0L1806.7 497.2L1809.4 500.3L1808.6 506.1zM1747.6 527.0L1750.4 521.3L1751.3 517.1L1754.9 519.8L1759.9 523.5L1758.8 528.8L1755.8 529.4zM1749.4 517.5L1740.6 511.3L1746.3 508.5L1750.1 504.1L1757.4 507.2L1757.6 513.1L1755.0 518.0zM1725.3 516.4L1720.0 512.3L1719.9 506.7L1723.0 504.8L1728.3 506.6L1732.8 511.9zM1739.6 476.3L1734.0 477.2L1732.6 476.4L1731.5 475.0L1733.8 471.3L1736.7 473.2zM1747.0 482.9L1741.6 485.7L1734.9 486.4L1735.9 482.9L1737.5 477.3L1744.8 474.8L1746.4 479.2zM1780.4 482.3L1777.4 486.2L1772.1 484.4L1773.8 479.8L1779.3 478.1zM1769.9 497.2L1762.3 493.9L1762.5 488.7L1763.8 484.9L1769.6 487.3L1773.0 492.8zM1775.4 458.8L1778.4 451.7L1783.7 455.4L1781.7 461.6zM1795.0 475.6L1794.5 472.1L1797.9 470.0L1800.3 469.1L1802.1 472.2L1801.0 473.3L1799.7 474.8zM1805.2 462.7L1815.4 462.2L1816.2 471.1L1810.1 472.2L1806.6 469.9zM1782.9 534.6L1781.2 539.0L1774.3 538.9L1775.5 533.5zM1785.6 491.3L1784.1 488.6L1787.2 485.9L1789.7 487.5L1789.8 491.2zM1748.5 497.7L1746.0 493.0L1749.6 489.6L1753.7 493.3zM1731.8 515.1L1727.7 513.3L1729.9 508.9L1733.4 510.3zM1765.1 489.2L1770.1 488.3L1771.6 490.8L1770.0 495.1L1766.3 494.1L1763.4 491.5zM1759.5 554.0L1754.9 551.7L1761.3 545.9L1764.1 551.7zM1419.2 564.3L1417.3 557.2L1424.4 559.7L1424.8 564.2zM1419.7 558.7L1425.2 559.9L1424.2 566.9L1417.7 565.9zM1409.8 555.4L1408.8 557.9L1406.4 558.4L1406.0 555.2L1407.6 554.2zM1413.5 577.0L1413.6 569.6L1422.7 569.8L1421.4 574.7zM1410.8 540.6L1413.0 536.1L1420.4 537.1L1422.1 541.1L1419.7 547.8zM1422.3 575.4L1417.1 581.0L1411.7 576.7L1410.9 567.9L1422.0 567.8zM1438.4 563.4L1434.6 562.5L1432.8 559.2L1441.1 556.3L1441.2 559.9zM1452.7 554.5L1455.3 555.2L1455.2 559.4L1450.3 558.7zM1408.8 550.8L1412.1 548.4L1414.5 548.1L1420.5 549.2L1416.5 555.4L1411.2 554.2zM1423.2 551.6L1419.8 552.6L1416.0 552.6L1415.9 550.1L1418.0 548.3L1420.8 547.8zM1418.5 561.5L1418.9 566.0L1414.5 570.0L1410.0 567.3L1406.6 561.7L1414.7 560.1zM1446.2 529.2L1449.4 533.1L1447.7 536.2L1442.8 535.8L1437.9 533.4L1441.7 529.8L1445.1 528.2zM1424.2 553.0L1429.4 549.5L1431.8 549.5L1434.6 553.6L1432.3 555.3L1428.3 558.4zM1409.7 554.6L1408.2 547.1L1419.9 547.6L1419.3 556.2zM2204.1 233.9L2199.9 229.0L2204.6 225.0L2211.3 227.5L2208.4 233.9zM2211.3 228.7L2214.6 231.7L2216.1 234.5L2210.8 236.5L2209.2 232.4zM2204.3 233.8L2201.7 228.7L2204.9 223.4L2208.1 225.1L2210.2 229.4L2208.7 231.0zM2242.9 205.3L2242.4 201.3L2246.1 198.9L2249.9 199.7L2250.1 203.9zM2183.4 229.1L2181.8 232.8L2180.0 233.2L2177.5 232.3L2176.8 229.9L2177.5 227.9L2181.7 228.1zM2230.2 219.6L2224.9 224.3L2219.4 220.7L2225.0 217.8zM2243.4 233.5L2237.9 239.1L2233.1 234.5L2236.6 232.7zM2196.8 248.6L2191.8 246.0L2191.9 239.3L2197.2 240.1L2199.3 244.3zM2189.3 224.3L2184.8 215.8L2195.2 214.0L2199.0 219.0zM2180.6 177.9L2180.9 180.7L2177.3 180.7L2176.4 177.4zM2210.9 237.2L2211.4 235.7L2215.2 236.5L2214.7 238.5L2212.9 240.6zM2198.9 236.1L2196.6 235.5L2196.4 232.6L2198.5 229.8L2200.7 231.0L2201.0 234.0zM2261.1 186.6L2260.6 192.3L2254.6 194.7L2253.1 188.1zM2196.6 245.2L2199.2 245.4L2202.4 248.6L2200.2 250.3L2197.9 251.1L2195.6 248.6zM2232.2 244.1L2236.5 242.9L2240.7 243.3L2238.1 246.0L2236.0 247.1zM2206.0 231.1L2198.4 228.2L2200.9 224.6L2202.0 219.3L2210.2 221.9L2212.1 225.7L2212.0 228.8zM2250.4 247.4L2247.9 252.3L2243.6 254.7L2242.1 251.9L2238.9 247.3zM2235.5 234.1L2236.0 235.8L2235.5 237.5L2232.5 238.2L2230.8 235.8L2231.2 234.2L2233.3 231.9zM2214.9 249.4L2210.1 247.1L2207.5 239.3L2214.8 240.1L2218.4 243.0zM2220.5 240.4L2220.2 241.1L2217.6 242.1L2215.7 239.7L2215.4 238.0L2219.5 236.7L2221.7 238.8zM2221.5 232.6L2220.6 237.2L2215.3 239.6L2212.8 236.7L2208.3 232.3L2217.8 228.0zM2203.5 215.7L2207.0 212.8L2208.7 213.0L2214.3 214.1L2210.2 216.4L2208.2 218.5L2206.1 218.4zM2167.9 257.8L2165.6 258.2L2162.2 256.7L2164.1 253.0L2166.5 251.9L2168.7 254.0L2169.3 255.8zM2231.5 247.5L2226.1 250.8L2220.3 248.0L2223.2 243.7L2227.1 243.3zM2235.5 218.8L2230.1 216.0L2231.5 211.1L2239.1 211.8L2244.5 213.7L2244.1 216.7L2240.4 223.9zM2244.7 244.5L2242.9 245.0L2238.5 244.3L2233.7 238.4L2238.6 236.9L2244.7 236.6L2249.2 239.2zM2211.7 238.5L2206.9 234.5L2211.6 230.5L2215.5 226.6L2217.0 229.9L2216.6 235.7zM2226.9 239.4L2228.3 242.3L2224.1 244.6L2221.0 243.8L2221.9 237.3zM2208.2 221.8L2213.2 222.9L2211.1 225.5L2206.9 225.1zM2233.3 264.1L2239.5 270.3L2235.5 275.1L2230.2 277.1L2226.3 274.0L2223.2 267.1L2229.5 266.3zM2451.6 388.9L2445.6 386.2L2445.8 381.0L2453.2 377.2L2455.1 378.2L2458.9 384.5L2455.3 387.6zM2474.9 380.4L2471.3 376.5L2470.7 371.1L2477.1 372.4L2480.6 376.1zM2455.1 372.0L2458.3 368.7L2461.6 369.0L2462.9 374.5L2455.0 377.2zM2477.1 390.7L2472.9 394.2L2471.2 390.4L2471.6 386.9L2474.9 388.1zM2449.4 370.2L2453.6 368.5L2456.6 370.3L2456.4 375.2L2453.7 377.9L2447.9 375.2L2448.6 373.5zM2440.6 376.9L2439.5 370.0L2448.6 371.1L2445.0 377.3zM2452.8 381.2L2453.0 386.4L2448.8 387.2L2446.8 383.3zM2499.6 429.2L2489.5 428.4L2488.9 422.2L2492.5 418.0L2496.5 420.4L2500.4 425.0zM2464.1 390.0L2464.1 394.0L2460.3 392.4L2460.6 389.1zM2468.9 395.0L2465.2 391.9L2466.5 388.4L2470.8 387.5L2474.0 391.7L2471.8 396.4zM2460.0 409.3L2463.3 404.2L2475.3 405.9L2474.5 410.9L2465.0 415.9zM2461.3 379.0L2464.5 380.3L2464.9 383.3L2466.2 386.5L2460.8 385.7L2455.4 384.1L2457.0 381.6zM2308.6 449.6L2306.1 444.6L2314.5 439.3L2318.8 442.7L2318.5 448.6zM2291.5 483.2L2290.3 476.8L2297.7 474.4L2299.6 478.9L2296.2 484.8zM2288.8 487.0L2291.8 489.4L2290.6 493.1L2286.2 489.8zM2298.3 480.4L2301.9 480.7L2305.2 484.2L2302.5 485.6L2298.2 485.1zM2303.3 479.9L2309.7 485.3L2308.9 488.8L2303.7 493.8L2299.5 489.7L2299.0 484.4zM2315.2 480.1L2306.3 485.6L2301.5 477.0L2311.7 473.0zM2288.9 484.1L2293.0 480.7L2296.1 486.2L2295.1 492.2L2289.3 490.0zM2301.0 465.2L2305.6 466.6L2307.2 470.5L2302.4 469.8zM2333.5 500.2L2327.0 500.0L2326.1 495.7L2334.4 493.2zM2338.3 473.9L2333.1 474.6L2332.6 471.0L2334.7 468.8L2338.2 470.3zM2193.4 633.0L2185.2 636.0L2182.8 630.1L2182.1 627.7L2189.5 624.7L2193.4 624.0L2197.0 628.0zM2177.8 609.5L2185.0 612.0L2182.3 616.8L2172.4 614.7L2174.1 611.8zM2192.8 640.2L2187.2 639.8L2187.9 634.8L2192.4 633.6zM2167.4 601.5L2169.3 594.6L2175.0 597.3L2176.4 600.9zM2169.2 634.2L2169.5 639.0L2165.2 640.2L2162.2 640.1L2161.6 637.5L2161.8 633.6L2164.8 632.0zM2181.5 627.2L2177.1 629.3L2173.8 626.6L2177.1 623.9zM2180.8 613.3L2183.9 606.7L2187.1 609.1L2186.6 615.1zM2177.4 613.0L2170.0 613.0L2173.0 609.4L2179.3 609.0zM2170.6 594.7L2170.1 598.9L2164.5 596.1L2165.3 593.5L2170.2 591.8zM2178.1 613.4L2175.4 614.7L2174.3 611.1L2177.4 608.5L2180.1 610.2zM2173.7 603.4L2177.1 603.1L2179.1 605.6L2175.7 608.4L2174.1 607.1L2173.0 605.9L2171.5 603.8zM2177.5 633.5L2180.8 633.0L2188.1 630.4L2186.4 635.2L2184.8 640.3L2182.5 639.8L2177.3 638.1zM2186.8 612.1L2173.8 614.4L2166.8 607.3L2177.2 601.5zM2129.3 619.1L2130.7 619.3L2131.9 622.5L2130.6 622.9L2126.9 623.2L2128.0 620.6zM2350.0 698.7L2351.4 693.7L2355.1 693.7L2360.1 697.6L2354.6 700.2zM2332.7 697.7L2332.9 701.4L2329.6 705.1L2325.6 703.5L2325.4 699.7L2328.9 696.4zM2355.2 750.6L2350.9 749.2L2345.6 746.8L2343.3 741.6L2346.7 741.7L2351.2 740.1L2356.7 743.0zM2355.6 744.6L2353.5 740.8L2353.3 736.1L2358.2 734.6L2361.0 741.5zM2333.9 724.8L2335.3 728.3L2330.9 728.7L2331.0 725.2zM2339.5 711.6L2337.7 715.8L2331.5 711.3L2332.7 706.5L2337.7 703.6L2344.3 707.8zM2289.0 683.7L2284.1 683.3L2283.2 678.5L2282.5 675.1L2286.7 676.1L2291.8 676.0L2292.1 679.7zM2341.9 704.4L2347.4 704.4L2347.6 707.7L2346.3 711.8L2343.9 714.0L2336.2 710.3L2338.8 707.4zM2365.0 730.3L2361.7 730.5L2360.1 726.4L2363.5 723.1L2367.3 725.3zM2339.7 710.1L2340.9 701.8L2348.3 704.9L2351.1 713.7L2345.0 714.9zM2365.1 711.3L2364.1 706.9L2369.9 706.7L2371.0 710.6L2368.6 713.5zM2326.4 727.1L2329.3 729.3L2323.8 730.8L2324.1 728.0zM2346.2 715.4L2345.8 709.0L2351.8 709.4L2352.4 714.3zM2338.9 721.2L2331.2 710.9L2341.2 709.4L2347.5 716.6zM2463.4 732.6L2461.0 734.5L2457.6 733.5L2454.5 731.5L2458.8 729.5zM2364.8 691.4L2367.3 691.0L2370.6 692.1L2373.3 695.5L2368.3 698.6L2365.5 695.8zM2372.8 693.8L2371.8 701.9L2364.9 700.0L2366.5 692.1zM2317.6 714.4L2314.8 715.1L2313.0 713.3L2313.1 711.4L2314.8 709.3L2318.1 710.2L2320.2 712.5zM2413.7 722.1L2420.3 716.5L2424.7 722.3L2418.6 725.5zM2332.2 711.1L2335.0 706.6L2338.6 705.4L2341.1 706.9L2341.6 711.9L2337.4 711.9zM2315.6 701.2L2319.1 701.3L2317.7 705.9L2312.9 704.5zM2349.9 682.7L2355.9 678.8L2360.7 679.6L2363.1 684.7L2358.8 688.5L2353.6 686.3zM2337.5 697.8L2344.4 699.3L2345.3 702.7L2340.7 704.0L2338.5 702.5zM2333.0 716.5L2329.1 714.1L2328.7 711.2L2328.3 707.7L2333.7 707.8L2335.3 709.0L2336.8 711.8zM2396.1 693.3L2391.7 692.1L2393.4 688.2L2398.1 689.4zM2353.3 679.5L2354.3 678.0L2355.4 677.1L2358.8 676.1L2358.8 677.3L2357.7 679.8L2356.4 680.2zM2402.8 663.3L2403.8 658.1L2406.7 656.2L2409.1 659.4L2409.1 661.7L2405.8 663.2zM2387.5 724.0L2391.0 724.9L2396.9 729.7L2392.7 732.6L2384.9 731.2zM2350.1 713.4L2345.5 711.9L2346.1 708.9L2349.9 706.9L2353.5 708.7zM2387.2 707.2L2389.4 708.3L2384.9 713.6L2382.8 712.3L2381.8 708.3L2382.6 705.6zM2343.3 681.2L2339.1 684.2L2332.3 681.0L2332.7 675.8L2339.3 672.3L2343.6 676.2zM2342.4 707.8L2333.7 706.8L2333.6 699.0L2342.4 698.5zM2342.8 733.2L2341.0 736.2L2336.1 735.4L2333.7 731.2L2340.0 728.5zM2343.6 706.8L2340.5 707.5L2336.8 706.3L2338.4 702.0L2341.6 703.3zM2278.8 733.3L2281.1 731.0L2284.7 733.1L2284.5 736.1L2282.1 737.6L2279.2 735.9zM2312.8 687.5L2316.4 686.6L2319.0 688.7L2317.0 691.7L2314.5 692.2L2312.9 691.6L2312.2 689.8zM2367.3 714.3L2371.9 709.8L2378.0 717.7L2373.6 721.2L2367.9 719.7zM2337.4 701.1L2336.3 694.8L2339.5 690.7L2345.0 691.0L2351.3 697.6L2346.0 701.6L2342.4 702.8zM2367.8 701.3L2369.5 703.9L2366.7 705.8L2365.0 704.3zM2336.3 704.6L2340.7 701.8L2343.9 705.0L2342.0 708.1L2337.2 707.4zM1610.4 977.4L1609.5 973.7L1612.9 973.1L1615.0 974.5L1616.9 977.4L1614.2 977.8zM1605.2 975.5L1603.5 972.7L1606.4 972.0L1609.0 973.7L1607.9 976.4zM1610.2 973.5L1607.2 975.7L1601.7 973.6L1605.1 968.9zM1646.3 961.2L1646.3 956.1L1650.9 955.5L1650.1 960.2zM1599.6 1006.9L1603.0 1004.2L1606.8 1005.0L1607.9 1007.0L1604.9 1009.2L1603.0 1008.5zM1603.5 975.7L1606.1 978.1L1608.7 983.0L1601.8 984.4L1594.8 981.5L1598.4 974.9zM1597.8 972.7L1602.1 977.5L1596.7 979.8L1590.2 973.5zM1625.1 967.9L1625.2 972.5L1623.4 974.3L1618.4 971.1L1620.9 967.0L1622.7 966.1zM1606.3 976.9L1602.2 972.3L1607.4 968.9L1615.3 967.1L1616.7 970.8L1613.4 976.7L1610.9 980.1zM1629.8 968.6L1633.9 969.4L1636.1 973.1L1631.9 975.8L1626.6 974.1L1628.3 970.3zM1641.8 947.9L1637.5 944.6L1637.5 942.0L1642.3 940.2L1647.0 941.6L1646.8 946.5L1644.0 950.0zM1601.2 973.8L1610.3 973.2L1610.5 979.7L1605.2 982.9L1602.0 977.9zM1598.3 990.9L1606.6 987.2L1613.5 988.7L1616.9 995.6L1616.8 999.3L1605.5 1001.2L1600.8 996.6zM1574.4 972.4L1577.2 971.6L1581.2 976.3L1578.0 978.7L1574.0 980.9L1569.4 975.4zM1621.8 979.7L1617.8 978.2L1614.6 976.1L1615.8 971.4L1623.4 970.4L1625.1 975.9zM1614.6 982.4L1610.3 989.1L1600.3 987.9L1606.4 977.6zM1585.5 990.1L1588.0 993.0L1588.7 996.5L1586.7 997.9L1583.2 998.1L1581.9 994.3L1582.4 992.1zM1634.4 927.7L1637.2 930.0L1635.6 936.6L1628.6 935.3L1630.7 929.2zM1596.0 975.2L1601.6 968.6L1611.9 972.9L1611.9 978.8L1602.5 983.1zM1614.2 968.7L1612.4 971.4L1608.3 972.5L1604.5 970.3L1605.6 965.2L1611.2 965.9L1612.4 965.9zM1587.2 984.4L1596.4 979.2L1600.8 984.6L1595.1 989.5zM1612.9 973.8L1607.4 976.8L1602.1 974.9L1602.4 970.3L1605.4 967.7L1611.0 966.1zM1385.6 914.9L1381.5 913.7L1381.5 911.1L1384.3 908.3L1387.9 910.7zM1359.4 923.7L1364.4 918.6L1366.4 914.4L1374.4 920.9L1371.7 925.7L1366.2 929.5zM1377.5 918.2L1385.4 914.6L1386.6 920.0L1380.8 923.2zM1375.0 902.2L1377.4 906.3L1373.3 909.3L1369.9 906.3L1371.2 903.1zM1412.0 918.2L1413.3 922.0L1409.3 927.0L1402.8 926.7L1400.7 920.8L1402.0 913.2L1405.2 915.4zM1369.1 915.8L1370.4 910.4L1376.2 910.4L1379.5 913.5L1375.0 917.8zM1369.6 908.0L1373.1 906.2L1376.9 907.1L1374.3 911.5L1369.6 911.3zM1386.6 909.7L1387.0 916.6L1379.5 917.2L1375.6 910.9L1381.4 907.2zM1372.8 904.0L1378.0 906.0L1372.7 909.3L1369.7 908.3L1370.3 904.7zM1375.3 892.4L1378.5 897.0L1373.0 898.7L1369.2 897.5L1371.1 892.8zM1390.2 904.4L1392.0 901.6L1394.5 901.3L1396.1 904.1L1398.0 906.9L1395.2 909.1L1390.7 906.9zM1357.3 911.3L1361.9 918.8L1349.0 918.8L1347.7 907.5zM1406.6 891.1L1407.2 889.3L1410.7 888.2L1412.9 888.0L1413.1 890.5L1412.2 892.5L1410.0 893.0zM1349.4 910.8L1340.6 911.5L1335.0 901.6L1343.0 896.5L1347.1 897.9L1351.3 901.1L1352.2 908.2zM1414.4 895.8L1405.5 897.0L1401.9 891.1L1407.9 887.0L1420.1 888.5zM1397.5 916.2L1394.6 922.0L1390.4 922.4L1389.4 918.7L1389.2 914.0L1391.9 909.6L1395.1 913.2zM1390.2 904.0L1394.6 907.7L1392.7 911.7L1386.0 915.2L1382.6 909.6L1382.9 903.8zM1373.4 919.3L1367.9 916.2L1365.8 911.9L1372.1 908.1L1376.8 908.5L1381.4 910.8L1379.8 915.0zM1283.9 861.1L1287.0 855.8L1291.4 862.4L1288.9 865.8zM1324.3 857.8L1321.4 860.5L1319.6 858.5L1319.7 854.6L1323.5 856.0zM1329.1 856.1L1328.9 859.0L1325.7 862.7L1322.2 862.4L1317.7 858.7L1320.1 853.8L1324.5 855.1zM1325.5 837.6L1330.8 840.1L1333.0 844.3L1328.2 849.9L1323.8 849.2L1317.1 845.1L1321.7 837.7zM1316.1 831.5L1313.7 826.9L1319.7 824.2L1323.1 825.1L1329.4 829.5L1325.0 834.0L1320.2 835.8zM1319.3 855.5L1314.3 848.1L1322.1 847.7L1324.2 852.5zM1311.2 857.5L1303.8 856.4L1302.1 853.1L1307.2 846.8L1311.2 851.9zM1324.8 852.0L1327.4 854.7L1324.7 857.7L1319.6 855.2zM1331.4 860.9L1329.4 864.5L1323.8 862.5L1319.9 858.7L1323.7 857.0L1329.2 854.3L1330.0 856.1zM1342.2 864.0L1345.1 863.8L1347.0 865.0L1346.5 866.3L1344.7 866.6L1343.7 865.7zM1080.9 1399.9L1078.3 1398.5L1074.5 1396.3L1073.3 1393.2L1079.3 1393.2L1080.4 1395.3zM1055.3 1415.3L1062.0 1408.6L1065.9 1414.0L1059.9 1420.1zM1045.0 1426.6L1050.1 1431.7L1043.6 1434.1L1041.7 1437.2L1036.1 1434.9L1033.7 1428.1L1039.8 1423.6zM1095.2 1392.7L1091.4 1390.9L1093.8 1387.6L1097.0 1385.2L1100.9 1389.2L1100.2 1393.3zM1078.3 1392.2L1074.1 1395.6L1068.9 1397.8L1064.6 1396.1L1065.7 1391.3L1066.7 1386.8L1072.5 1386.7zM1063.9 1410.2L1066.2 1406.4L1072.5 1407.1L1071.3 1411.9L1069.3 1414.4L1064.4 1414.7zM1080.4 1413.8L1076.5 1408.7L1080.4 1404.3L1085.8 1409.5zM1103.2 1376.1L1097.2 1381.2L1091.2 1379.1L1089.7 1376.8L1091.0 1371.7L1098.6 1368.7L1104.7 1372.0zM1082.7 1402.0L1077.3 1406.1L1073.8 1403.7L1073.3 1399.8L1078.1 1398.6zM1064.6 1393.1L1065.1 1389.5L1066.3 1387.1L1070.3 1385.5L1076.7 1386.9L1075.9 1393.7L1070.0 1397.0zM1096.3 1400.2L1087.7 1399.8L1089.2 1393.5L1091.5 1390.7L1099.3 1392.9zM1082.0 1409.2L1087.0 1411.7L1091.6 1416.3L1089.4 1420.1L1082.1 1421.7L1079.9 1418.2L1080.2 1411.8zM1082.5 1408.5L1077.7 1402.3L1082.0 1398.3L1088.1 1398.7L1088.1 1404.9zM1068.7 1406.5L1068.4 1402.2L1077.5 1405.3L1080.1 1408.5L1078.0 1412.7L1067.3 1413.9zM1076.9 1404.4L1077.2 1405.2L1078.9 1408.8L1075.0 1408.5L1070.4 1408.0L1071.5 1404.4L1074.1 1404.1zM1072.8 1402.6L1073.1 1405.2L1070.8 1406.8L1068.8 1406.4L1067.8 1403.2L1070.5 1401.4zM1079.9 1408.5L1070.3 1412.7L1065.6 1405.5L1069.6 1400.3L1079.5 1402.2zM1088.7 1404.6L1086.3 1406.3L1081.4 1405.2L1084.0 1400.7L1085.5 1399.5L1089.2 1401.7zM1029.4 1392.7L1034.2 1394.1L1034.3 1396.3L1033.7 1399.2L1029.4 1399.4L1028.7 1398.0L1027.1 1395.6zM1126.8 1386.2L1134.3 1383.5L1138.4 1382.1L1139.8 1387.2L1140.6 1390.6L1135.2 1393.7L1128.7 1391.0zM1054.3 1396.1L1052.3 1391.6L1056.1 1389.9L1057.5 1392.4zM1099.8 1424.3L1088.1 1430.9L1084.9 1422.3L1092.7 1417.6zM1076.7 1406.2L1073.0 1404.9L1074.7 1400.5L1078.8 1398.3L1081.2 1404.3zM1077.5 1408.7L1080.4 1413.2L1070.6 1414.4L1070.4 1409.9L1072.8 1406.7zM1070.9 1390.7L1069.2 1388.5L1071.2 1386.6L1074.8 1388.1L1075.0 1391.0zM1335.6 1369.4L1334.1 1364.4L1338.8 1364.3L1340.7 1369.3zM1304.3 1364.6L1309.8 1359.5L1315.4 1361.8L1319.8 1369.9L1308.4 1371.3L1303.8 1368.4zM1329.9 1366.4L1332.6 1372.7L1324.7 1373.3L1325.6 1366.6zM1313.5 1325.2L1315.3 1328.5L1316.8 1331.2L1316.8 1333.1L1311.9 1332.0L1308.2 1332.3L1307.4 1326.8zM1333.7 1366.4L1332.2 1368.6L1328.5 1367.0L1329.6 1364.2L1331.4 1364.0L1333.2 1364.2zM1290.5 1368.4L1287.6 1361.8L1297.6 1361.0L1306.0 1361.6L1301.8 1367.4L1300.8 1370.5L1293.9 1371.9zM1338.8 1377.9L1332.6 1376.7L1332.7 1372.8L1336.4 1371.1L1341.3 1373.0zM1335.4 1371.3L1336.8 1369.9L1341.7 1371.8L1339.9 1374.3L1337.0 1374.4zM1355.6 1351.0L1351.7 1356.4L1345.6 1353.8L1351.6 1348.8zM1335.3 1367.3L1331.7 1368.3L1329.0 1367.5L1332.1 1364.3L1334.5 1363.8zM1707.1 1501.8L1709.0 1505.2L1704.5 1506.4L1703.7 1503.3zM1699.3 1497.0L1704.1 1499.8L1707.3 1501.3L1703.0 1505.0L1701.7 1506.0L1696.5 1504.3L1696.4 1501.1zM1705.3 1503.6L1710.5 1507.5L1707.5 1511.1L1701.9 1514.4L1699.1 1513.4L1694.6 1507.5zM1697.0 1505.0L1700.7 1503.3L1700.8 1506.1L1700.4 1507.6L1696.5 1508.7zM1695.4 1514.1L1688.3 1509.7L1686.3 1506.2L1694.6 1502.1L1699.0 1506.7zM1671.0 1527.5L1666.8 1527.2L1662.4 1523.2L1666.8 1515.9L1672.8 1519.4L1675.0 1524.1zM1693.5 1529.3L1688.1 1521.7L1694.8 1520.5L1701.6 1522.3L1703.5 1526.2L1697.5 1529.7zM1721.9 1491.5L1713.0 1497.7L1704.4 1495.9L1706.0 1488.8L1706.2 1485.6L1711.4 1483.7L1715.8 1486.4zM1696.9 1511.7L1691.2 1517.3L1687.8 1515.0L1686.1 1513.6L1687.7 1509.1L1691.7 1509.9zM1745.4 1477.8L1742.5 1471.4L1751.7 1470.8L1751.2 1475.9L1749.5 1480.1zM1704.2 1511.2L1694.4 1510.8L1692.8 1504.5L1703.8 1503.7zM1715.0 1523.7L1714.8 1527.4L1712.8 1528.1L1708.7 1526.4L1707.7 1523.1L1711.0 1522.0zM1728.5 1470.6L1722.5 1469.6L1725.8 1461.7L1730.8 1463.3L1736.6 1461.9L1736.0 1466.9L1732.2 1470.2zM1701.0 1495.0L1704.9 1498.2L1701.8 1501.9L1695.7 1498.7zM1661.2 1514.2L1663.8 1513.2L1666.8 1512.2L1668.3 1515.2L1664.8 1516.1L1662.3 1516.3zM1703.2 1492.4L1699.5 1496.9L1694.2 1495.1L1696.8 1489.1zM1705.9 1518.3L1702.4 1517.1L1699.2 1516.0L1698.7 1512.7L1703.1 1511.2L1706.0 1511.3L1707.5 1514.6zM1699.9 1507.5L1697.9 1505.5L1698.0 1503.8L1699.9 1503.4L1701.7 1503.9L1701.7 1506.3zM1706.3 1502.9L1702.0 1502.9L1702.6 1500.5L1704.9 1498.4L1707.3 1499.7zM1692.7 1480.6L1690.2 1478.5L1693.2 1477.0L1696.3 1477.3L1695.0 1481.5zM1696.8 1509.5L1699.8 1513.5L1702.5 1516.8L1702.2 1519.7L1697.3 1521.8L1692.6 1520.1L1690.6 1511.8zM1632.3 1465.1L1634.6 1460.2L1643.4 1460.3L1647.2 1465.1L1641.8 1470.7zM1633.6 1519.5L1641.2 1521.7L1638.1 1528.3L1634.1 1529.1L1627.6 1526.4L1630.3 1521.2zM1689.4 1458.4L1700.4 1457.1L1696.1 1466.8L1690.6 1470.7L1684.8 1464.9zM1735.4 1504.6L1746.0 1509.3L1737.6 1513.7L1727.8 1511.9zM2684.2 815.6L2681.2 817.1L2677.0 814.4L2679.7 812.0L2684.0 811.0zM2717.2 815.4L2712.7 814.8L2712.2 810.7L2717.4 809.1L2721.6 813.5zM2717.0 805.0L2718.6 803.9L2721.9 807.0L2718.5 809.7L2713.6 807.2zM2691.1 823.0L2690.4 831.1L2682.6 831.8L2681.8 823.5zM2709.6 828.7L2707.7 826.2L2708.3 823.3L2710.1 821.2L2713.4 825.0L2712.7 826.6zM2659.7 824.8L2662.1 824.9L2661.6 829.1L2659.6 830.7L2657.3 828.0zM2671.2 816.5L2673.2 819.8L2671.7 821.8L2667.7 823.3L2664.7 819.8L2666.3 816.5zM2710.7 834.7L2705.4 832.3L2703.0 827.5L2702.2 822.9L2712.8 824.2L2720.5 825.5L2716.7 835.2zM2662.6 811.2L2665.3 815.9L2655.7 817.6L2653.8 812.4zM2712.6 859.6L2709.2 862.6L2705.7 858.9L2710.5 857.8zM1461.8 958.5L1459.0 954.5L1465.7 948.9L1471.6 950.9L1470.1 957.2L1465.3 958.3zM1482.1 976.3L1479.9 979.4L1477.0 978.0L1474.8 976.1L1478.8 975.0zM1489.0 978.4L1491.4 979.9L1494.1 983.7L1493.3 987.4L1488.4 985.9L1486.7 983.3zM1482.2 970.3L1489.6 976.8L1483.9 980.5L1478.0 981.3L1471.6 979.2L1472.6 971.9L1476.9 971.7zM1502.6 973.2L1509.6 976.2L1512.8 980.0L1503.8 983.8L1498.2 986.1L1493.6 981.9L1497.4 976.7zM1476.6 970.0L1483.2 970.4L1481.2 976.2L1477.2 978.5L1473.3 974.4zM1481.0 991.7L1471.4 986.0L1473.4 978.8L1479.9 981.5zM1488.0 986.1L1485.5 995.3L1479.5 990.7L1475.1 984.2L1483.5 980.5zM1476.4 976.7L1473.7 977.2L1472.1 973.2L1477.6 974.0zM1485.7 967.7L1493.1 969.9L1495.7 978.0L1484.3 979.2zM1481.8 962.7L1479.0 971.1L1474.5 971.8L1466.3 967.9L1471.7 962.9zM1465.7 972.3L1474.4 973.1L1473.5 982.0L1464.9 980.1zM1480.3 983.9L1484.5 975.6L1489.6 979.7L1486.8 986.7zM1486.1 983.7L1489.1 976.2L1497.6 974.8L1499.0 981.4zM1466.8 986.0L1475.2 985.5L1478.4 993.6L1472.5 997.1L1466.3 992.5zM1482.7 973.9L1480.5 975.9L1478.1 976.4L1475.7 974.4L1476.7 972.5L1478.0 970.3L1481.2 971.3zM1960.5 105.8L1966.2 108.4L1961.9 111.7L1957.2 110.5zM1990.2 86.6L1994.3 91.4L1995.4 97.7L1984.1 94.9L1987.3 90.7zM1963.5 108.9L1969.6 114.8L1965.3 118.5L1960.9 114.7zM1944.7 107.8L1944.6 103.3L1947.4 101.2L1951.0 103.4L1952.7 107.7L1950.1 109.8L1946.8 109.1zM1955.0 108.1L1958.9 108.6L1956.3 111.8L1954.0 111.6L1951.0 109.4zM1954.0 102.1L1949.3 103.4L1946.6 100.8L1942.8 98.1L1948.2 92.8L1955.6 94.3L1955.4 99.1zM1948.6 114.0L1945.9 112.7L1945.8 107.8L1949.5 108.6L1950.9 110.9zM1958.3 99.8L1958.1 102.8L1955.6 105.0L1953.2 103.7L1947.5 100.1L1952.7 98.2L1955.4 97.1zM1973.3 95.7L1968.0 97.7L1963.1 91.1L1971.1 90.2zM1922.5 97.8L1918.7 100.2L1915.7 93.0L1925.4 92.8zM1701.9 297.7L1704.3 291.3L1710.5 295.1L1706.7 299.5zM1726.3 291.3L1731.0 291.2L1729.9 296.5L1726.4 299.5L1720.1 297.2L1722.1 292.0zM1713.8 291.4L1715.2 287.6L1720.3 291.3L1715.8 294.0zM1718.7 294.1L1717.9 299.9L1713.8 307.1L1704.3 303.7L1708.3 298.4zM1694.4 277.0L1697.6 277.8L1700.1 282.4L1696.9 283.9L1691.7 283.1L1689.6 279.7zM1695.6 281.8L1696.2 286.0L1690.2 287.1L1688.6 285.0L1691.7 280.6zM1715.6 299.9L1715.4 297.4L1716.9 295.7L1720.0 294.8L1721.1 297.8L1719.8 300.0L1718.7 300.3zM1742.7 318.3L1748.9 317.9L1751.1 323.8L1748.0 327.0L1737.0 327.7L1740.0 323.8zM1718.9 306.1L1717.2 303.7L1719.2 301.4L1722.7 303.9zM1731.6 295.9L1721.8 297.9L1717.8 294.2L1718.6 290.7L1721.1 286.2L1731.7 290.2zM1440.1 724.7L1434.6 721.6L1438.0 718.3L1441.5 718.8L1444.5 720.8L1445.4 723.2zM1438.1 752.0L1434.2 753.3L1430.3 748.2L1432.9 742.4L1437.0 740.8L1440.5 745.3zM1448.8 753.7L1440.6 754.2L1441.9 749.4L1442.4 747.0L1445.8 745.8L1455.3 745.2L1450.5 751.0zM1446.8 747.8L1445.1 750.9L1440.9 751.5L1442.2 748.9L1444.2 746.7zM1480.7 744.7L1477.5 746.8L1472.9 746.7L1472.2 741.7L1474.6 738.4L1481.3 739.9zM1450.5 746.1L1444.8 740.9L1449.9 737.8L1454.9 738.8L1457.2 740.9L1454.6 746.2zM1442.7 788.1L1437.5 785.7L1443.2 782.5L1446.3 784.5L1448.0 788.3zM1428.5 749.9L1435.8 752.2L1430.5 757.1L1426.7 753.9zM1445.5 734.3L1442.9 736.6L1439.8 736.1L1439.7 733.7L1440.2 731.3L1442.7 731.9L1444.4 733.5zM1450.6 748.3L1446.9 751.6L1444.8 754.1L1440.6 748.7L1443.5 746.6zM1334.0 1119.0L1323.2 1116.8L1327.0 1108.0L1332.9 1106.7L1338.7 1113.1zM1344.7 1116.8L1346.9 1122.5L1339.0 1123.4L1335.0 1118.9zM1353.9 1134.6L1355.9 1128.8L1366.6 1129.5L1360.6 1135.9zM1333.8 1123.8L1325.9 1128.5L1317.8 1120.8L1321.9 1115.5L1332.7 1115.0zM1333.6 1141.9L1330.6 1134.6L1342.5 1128.7L1345.6 1137.1L1344.9 1141.9zM1358.8 1110.1L1362.9 1113.8L1361.7 1117.8L1359.9 1121.1L1353.0 1118.3L1354.4 1113.3zM1352.4 1120.3L1348.2 1120.4L1343.3 1117.6L1346.8 1111.0L1350.4 1113.2zM1351.4 1127.2L1347.0 1127.7L1344.8 1125.3L1350.3 1122.6zM1349.7 1106.4L1353.7 1107.4L1356.0 1108.2L1355.5 1112.0L1351.0 1111.1L1348.6 1108.5zM1358.0 1128.4L1353.5 1132.1L1348.2 1134.5L1345.5 1131.4L1343.6 1124.6L1347.3 1123.1L1354.8 1124.7zM1142.3 1297.5L1148.5 1295.6L1149.0 1301.5L1141.6 1302.2zM1164.2 1265.2L1172.3 1265.7L1176.9 1270.8L1172.9 1274.1L1168.3 1272.1zM1153.1 1274.4L1151.8 1273.2L1151.5 1271.4L1150.3 1269.4L1153.0 1269.8L1154.8 1270.8L1155.5 1273.5zM1134.8 1270.3L1135.6 1265.9L1139.7 1267.7L1139.9 1270.2L1136.3 1273.3zM1154.0 1229.6L1159.6 1229.2L1162.6 1232.0L1165.4 1238.1L1157.0 1238.0L1150.0 1235.6zM1154.7 1287.5L1151.6 1291.7L1149.5 1293.0L1142.2 1287.6L1146.6 1285.6L1151.3 1281.5L1153.6 1282.6zM1155.4 1270.8L1157.8 1274.7L1151.6 1279.5L1147.6 1276.1L1140.9 1273.0L1146.9 1268.8L1152.3 1268.5zM1150.9 1272.5L1151.8 1264.8L1160.3 1266.0L1156.4 1272.5zM1161.5 1269.3L1157.7 1269.0L1155.3 1262.1L1161.2 1262.0L1165.6 1263.3zM1163.5 1266.1L1165.7 1266.0L1167.3 1266.2L1167.1 1270.1L1165.4 1272.2L1163.9 1269.7zM2279.5 1282.2L2276.3 1279.9L2281.2 1277.7L2283.8 1279.8zM2283.2 1271.9L2287.0 1275.7L2279.6 1279.0L2274.5 1278.1L2278.6 1269.0zM2298.5 1280.6L2287.9 1276.1L2292.9 1272.5L2299.2 1271.2L2302.9 1275.9zM2288.1 1265.1L2285.9 1267.6L2281.5 1265.1L2283.4 1261.6L2288.2 1261.9zM2278.1 1283.2L2270.5 1276.9L2277.7 1270.9L2284.0 1276.6zM2270.5 1275.4L2273.9 1273.1L2276.2 1275.6L2276.5 1278.1L2271.7 1278.2zM2222.1 1431.0L2220.7 1426.0L2228.3 1426.5L2232.1 1431.9L2227.0 1433.7zM2226.7 1429.3L2229.1 1431.0L2229.1 1433.0L2225.8 1433.9L2224.9 1431.1zM2223.5 1437.9L2218.8 1439.5L2215.4 1433.5L2219.3 1431.6L2225.1 1434.4zM2207.0 1428.2L2214.1 1427.5L2217.3 1433.7L2209.5 1434.0zM2210.1 1449.6L2207.6 1447.5L2202.9 1443.2L2209.2 1440.9L2216.8 1438.2L2218.2 1442.2L2215.6 1446.3zM2223.6 1444.6L2222.9 1441.1L2225.0 1437.6L2229.5 1440.8L2228.5 1444.0zM2300.9 1028.8L2297.4 1023.5L2299.4 1018.5L2304.6 1021.8zM2288.2 1005.2L2287.7 1008.0L2282.1 1009.4L2280.6 1007.7L2278.7 1002.0L2281.6 1001.6L2288.0 1002.4zM2307.8 975.9L2313.3 982.5L2305.8 984.1L2301.4 979.8zM2295.1 1015.6L2286.0 1015.9L2290.4 1008.0L2296.6 1009.6zM2297.2 1006.9L2300.8 1009.6L2300.8 1013.3L2293.5 1014.9L2288.7 1013.2L2293.9 1008.8zM2287.4 1014.5L2290.3 1010.9L2290.4 1007.1L2296.2 1007.0L2300.8 1009.9L2298.8 1012.1L2296.0 1015.0zM2289.4 1012.0L2296.1 1005.6L2303.7 1010.6L2298.6 1016.9L2289.3 1017.4zM2299.8 1014.8L2298.8 1012.6L2302.8 1011.8L2303.1 1015.4zM1100.4 516.2L1103.5 517.6L1100.5 521.8L1097.5 519.2zM1047.3 492.8L1044.9 493.6L1042.1 491.0L1044.6 489.6L1047.9 488.9L1049.8 490.9zM1107.7 500.5L1106.4 503.5L1106.0 505.1L1100.6 504.2L1101.2 502.0L1103.2 498.5zM1044.6 498.9L1046.0 502.0L1043.4 502.7L1040.8 501.4L1042.0 497.8zM1041.5 511.8L1037.9 511.1L1038.8 508.2L1038.8 506.4L1041.8 506.3L1042.3 508.3L1044.9 511.5zM1061.1 517.8L1054.2 523.5L1052.1 516.5L1057.2 511.8zM1064.2 502.3L1064.4 506.3L1063.3 507.0L1060.5 506.4L1059.6 504.1L1059.8 501.8L1062.7 502.2zM1055.7 497.8L1055.1 503.4L1052.7 504.8L1049.3 504.9L1042.4 500.6L1048.8 498.9L1052.0 496.6zM1050.3 510.9L1052.5 508.4L1055.5 509.7L1052.8 513.6zM1042.2 506.7L1043.8 504.7L1048.2 504.2L1050.4 505.6L1051.7 509.0L1049.9 513.2L1043.9 510.7zM1045.1 350.2L1040.1 345.9L1045.1 344.4L1047.1 343.4L1054.0 346.1L1048.8 348.9L1047.1 352.2zM1050.3 339.3L1048.8 345.0L1042.9 340.6L1045.0 336.5zM1032.2 346.4L1033.8 342.8L1036.8 341.8L1039.2 344.8L1038.4 349.1L1035.2 347.5zM1045.7 338.4L1041.6 333.9L1043.9 330.2L1049.6 330.9L1050.3 337.4zM1056.2 343.4L1049.5 343.4L1042.9 343.2L1042.2 339.1L1046.4 332.1L1050.2 332.0L1053.0 338.1zM1060.7 341.8L1063.3 346.8L1056.5 353.8L1050.0 350.5L1054.0 341.0zM1040.2 326.1L1043.5 331.4L1043.3 333.2L1041.8 339.1L1037.2 340.6L1032.8 334.6L1030.5 331.5zM1053.1 352.9L1055.6 356.4L1049.1 360.4L1048.7 355.9zM1013.9 344.2L1007.6 340.3L1013.3 335.8L1021.0 339.4zM1056.5 335.2L1053.9 337.8L1052.7 339.9L1049.1 337.8L1049.1 333.6L1051.8 332.6zM1961.7 607.2L1963.1 610.1L1959.9 611.4L1958.2 609.9L1957.6 607.3L1960.5 604.4zM1956.1 614.8L1948.2 608.2L1960.5 606.0L1964.8 610.7zM1963.2 611.1L1969.2 607.9L1969.5 613.1L1969.0 617.1L1966.4 617.9L1962.4 614.9L1960.6 611.9zM1952.0 602.4L1957.4 601.4L1963.9 604.8L1959.1 607.0L1953.6 605.7zM1926.8 594.3L1931.2 591.2L1936.1 591.2L1935.9 593.2L1935.6 597.0L1930.4 596.7zM1962.5 611.6L1963.6 602.0L1974.8 607.5L1966.7 612.9zM1958.4 601.5L1955.6 595.3L1966.5 593.4L1963.7 603.3zM1960.3 613.7L1955.8 607.2L1963.6 603.7L1967.0 610.0zM1865.4 1505.9L1864.2 1498.8L1866.7 1496.3L1870.0 1498.4L1871.6 1502.3L1869.1 1506.8zM1900.9 1540.1L1902.3 1536.1L1905.8 1537.5L1905.9 1539.8L1902.8 1543.3zM1879.0 1537.9L1872.9 1533.5L1878.2 1527.9L1881.9 1530.4L1885.6 1533.7L1883.9 1538.7zM1898.1 1518.1L1900.7 1521.6L1896.9 1523.7L1895.0 1526.4L1892.3 1520.8L1893.3 1519.3zM1881.2 1535.2L1878.6 1538.4L1874.6 1535.0L1878.8 1533.5zM1883.6 1547.7L1875.1 1541.8L1875.2 1533.8L1887.1 1532.3L1885.1 1539.4zM1876.6 1530.4L1878.8 1526.1L1883.2 1528.0L1882.8 1531.2L1878.5 1533.8zM1861.8 1544.8L1868.7 1543.4L1869.6 1549.0L1861.7 1549.3zM1881.9 1524.3L1882.9 1527.6L1883.6 1530.0L1880.7 1530.7L1877.9 1529.9L1878.8 1525.1zM1883.1 1528.2L1887.4 1527.9L1888.5 1532.2L1880.6 1533.0zM1914.0 1562.9L1908.8 1564.4L1905.3 1561.7L1909.0 1557.3L1916.4 1557.2zM1888.2 1534.1L1895.2 1532.8L1894.4 1540.2L1887.3 1540.5zM1886.9 1547.9L1889.3 1549.1L1889.3 1551.4L1887.5 1552.4L1884.0 1552.1L1884.8 1549.3zM1877.1 1528.1L1880.0 1531.8L1876.3 1535.5L1868.7 1535.8L1871.2 1528.0zM1885.5 1533.1L1890.7 1533.3L1890.8 1537.8L1884.8 1537.2zM2724.3 1395.9L2729.7 1399.1L2726.2 1401.6L2723.5 1400.5zM2706.5 1415.1L2711.5 1412.3L2713.8 1414.0L2715.8 1416.8L2713.8 1421.6L2710.8 1420.4L2707.5 1419.3zM2728.8 1396.2L2730.6 1399.3L2728.1 1402.6L2724.8 1400.7L2726.3 1397.0zM2727.8 1410.9L2730.7 1407.2L2734.8 1407.6L2733.0 1413.8zM2738.9 1401.0L2734.4 1398.3L2738.2 1395.3L2741.9 1397.2zM2727.0 1399.0L2728.9 1396.4L2733.1 1399.4L2731.6 1401.0L2727.5 1403.0L2725.1 1399.9zM2725.2 1402.1L2724.5 1398.1L2729.2 1397.5L2729.0 1401.6zM2732.2 1425.5L2726.3 1425.9L2726.4 1421.7L2729.5 1422.0zM2730.3 1403.2L2727.6 1406.1L2723.9 1408.2L2722.1 1406.4L2721.7 1401.9L2725.2 1401.3L2727.4 1400.4zM2721.4 1406.0L2727.2 1407.8L2729.9 1412.7L2719.9 1413.8zM2731.4 1401.1L2732.3 1397.4L2735.1 1396.1L2738.8 1398.4L2739.9 1401.5zM2722.3 1401.7L2713.6 1401.2L2713.4 1392.6L2721.8 1393.5zM2724.3 1389.6L2727.7 1390.3L2728.7 1392.9L2724.5 1394.3zM2707.2 1378.9L2714.3 1380.0L2714.6 1388.1L2707.6 1392.4L2704.3 1389.4L2702.6 1382.2z"/>
<g fill="none" stroke="#a9c6f3" stroke-width="1.4">
<path d="M1985.6 583.7C1993.7 579.0 2014.8 565.5 2029.5 558.1C2044.3 550.7 2051.3 550.2 2066.1 543.5C2080.8 536.8 2093.8 531.6 2109.9 521.6C2126.0 511.5 2136.4 496.0 2153.8 488.7C2171.2 481.3 2186.2 483.4 2204.9 481.4C2223.7 479.3 2237.4 479.0 2256.1 477.7C2274.9 476.4 2288.5 476.7 2307.3 474.0C2326.0 471.4 2341.0 472.5 2358.5 463.1C2375.9 453.7 2386.2 434.3 2402.3 422.9C2418.4 411.5 2435.5 406.3 2446.2 400.9C2456.9 395.6 2451.4 395.6 2460.8 393.6C2470.2 391.6 2483.9 390.0 2497.3 390.0C2510.7 390.0 2520.5 388.9 2533.9 393.6C2547.3 398.3 2557.0 410.2 2570.4 415.6C2583.8 420.9 2593.6 417.5 2607.0 422.9C2620.4 428.2 2630.1 435.4 2643.5 444.8C2656.9 454.2 2666.7 462.0 2680.1 474.0C2693.5 486.1 2706.4 501.2 2716.6 510.6C2726.9 520.0 2732.5 522.5 2736.0 525.2"/>
<path d="M1602.9 218.2C1609.6 221.5 1626.0 231.1 1639.4 236.5C1652.8 241.8 1662.6 249.4 1676.0 247.4C1689.4 245.4 1701.8 230.9 1712.5 225.5C1723.2 220.1 1726.4 210.2 1734.4 218.2C1742.5 226.2 1751.0 253.3 1756.4 269.4C1761.7 285.5 1761.0 291.2 1763.7 305.9C1766.4 320.7 1771.0 335.0 1771.0 349.8C1771.0 364.5 1762.3 372.9 1763.7 386.3C1765.0 399.7 1777.0 408.1 1778.3 422.9C1779.6 437.6 1772.3 458.7 1771.0 466.7"/>
<path d="M1595.6 214.5C1594.2 223.3 1588.2 248.0 1588.2 262.1C1588.2 276.1 1599.6 279.2 1595.6 291.3C1591.5 303.4 1574.4 314.4 1566.3 327.8C1558.3 341.2 1557.1 351.5 1551.7 364.4C1546.3 377.3 1539.8 391.9 1537.1 398.0"/>
<path d="M1949.1 104.9C1951.8 109.6 1957.0 123.8 1963.7 130.5C1970.4 137.2 1979.6 144.1 1985.6 141.4C1991.7 138.8 1994.6 120.6 1996.6 115.9"/>
<path d="M2548.5 658.3C2543.2 661.6 2528.7 666.5 2519.3 676.5C2509.9 686.6 2504.0 699.7 2497.3 713.1C2490.6 726.5 2486.7 736.2 2482.7 749.6C2478.7 763.1 2478.1 774.1 2475.4 786.2C2472.7 798.3 2469.4 810.1 2468.1 815.4"/>
<path d="M1263.0 1414.3C1275.7 1406.3 1309.6 1382.5 1332.4 1370.5C1355.2 1358.4 1365.1 1351.9 1387.2 1348.5C1409.3 1345.2 1432.9 1354.9 1453.0 1352.2C1473.1 1349.5 1474.8 1352.0 1496.9 1333.9C1519.0 1315.8 1559.6 1268.3 1573.6 1253.5"/>
<path d="M1876.0 1312.0C1884.0 1305.3 1901.1 1294.2 1919.9 1275.4C1938.6 1256.7 1966.9 1225.7 1978.3 1209.6C1989.7 1193.6 1972.6 1194.4 1982.0 1187.7C1991.4 1181.0 2012.8 1180.5 2029.5 1173.1C2046.3 1165.7 2065.3 1152.2 2073.4 1147.5"/>
<path d="M2084.3 1162.1C2085.0 1170.8 2079.3 1195.6 2088.0 1209.6C2096.7 1223.7 2115.8 1234.9 2131.8 1238.9C2147.9 1242.9 2158.3 1236.3 2175.7 1231.6C2193.1 1226.9 2217.5 1216.7 2226.9 1213.3"/>
<path d="M2497.3 1198.7C2510.7 1196.0 2547.7 1190.1 2570.4 1184.1C2593.2 1178.0 2601.5 1164.4 2621.6 1165.8C2641.7 1167.1 2659.1 1186.0 2680.1 1191.4C2701.1 1196.7 2725.8 1194.4 2736.0 1195.0"/>
<path d="M1045.5 254.7C1048.5 250.7 1054.9 239.5 1061.9 232.8C1069.0 226.1 1079.8 220.9 1083.9 218.2"/>
<path d="M1045.5 998.2C1052.5 994.8 1068.1 987.3 1083.9 979.9C1099.6 972.5 1112.6 964.7 1131.4 958.0C1150.1 951.3 1172.1 950.7 1186.2 943.4C1200.3 936.0 1204.1 922.5 1208.1 917.8"/>
<path d="M1639.4 760.6C1650.1 758.6 1680.5 755.7 1697.9 749.6C1715.3 743.6 1718.4 733.1 1734.4 727.7C1750.5 722.4 1768.9 726.4 1785.6 720.4C1802.4 714.4 1811.7 705.5 1825.8 694.8C1839.9 684.1 1855.7 668.0 1862.4 661.9"/>
<path d="M1632.1 645.1C1633.4 639.2 1634.1 621.5 1639.4 612.9C1644.8 604.4 1650.6 603.7 1661.3 598.3C1672.1 593.0 1691.2 586.4 1697.9 583.7"/>
<path d="M2607.0 651.0C2600.3 654.3 2581.2 667.9 2570.4 669.2C2559.7 670.6 2552.5 660.3 2548.5 658.3"/>
</g>
<g fill="#9ebdff">
<path d="M1727.1 815.4C1727.1 813.0 1730.2 813.0 1734.4 815.4C1738.7 817.9 1747.2 826.1 1752.7 830.1C1758.2 834.0 1763.1 836.2 1767.3 839.2C1771.6 842.2 1774.0 845.0 1778.3 848.3C1782.6 851.7 1788.1 855.9 1792.9 859.3C1797.8 862.6 1801.5 866.0 1807.5 868.4C1813.6 870.9 1821.6 870.0 1829.5 873.9C1837.4 877.9 1846.5 887.3 1855.1 892.2C1863.6 897.1 1873.2 900.4 1880.6 903.2C1888.1 905.9 1896.8 904.4 1900.0 908.6C1903.2 912.9 1903.2 926.3 1900.0 928.7C1896.8 931.2 1886.3 923.3 1880.6 923.3C1875.0 923.3 1872.1 927.8 1866.0 928.7C1859.9 929.7 1849.6 930.0 1844.1 928.7C1838.6 927.5 1836.2 925.7 1833.1 921.4C1830.1 917.2 1829.5 908.0 1825.8 903.2C1822.2 898.3 1817.3 895.8 1811.2 892.2C1805.1 888.5 1795.4 884.3 1789.3 881.2C1783.2 878.2 1778.6 877.6 1774.6 873.9C1770.7 870.3 1769.8 864.2 1765.5 859.3C1761.2 854.4 1754.2 849.6 1749.1 844.7C1743.9 839.8 1738.1 834.9 1734.4 830.1C1730.8 825.2 1727.1 817.9 1727.1 815.4z"/>
<path d="M1708.9 842.9C1709.5 840.4 1715.6 839.5 1719.8 841.0C1724.1 842.5 1728.4 848.9 1734.4 852.0C1740.5 855.0 1750.9 856.3 1756.4 859.3C1761.9 862.3 1767.9 868.7 1767.3 870.3C1766.7 871.8 1758.2 870.0 1752.7 868.4C1747.2 866.9 1740.5 863.3 1734.4 861.1C1728.4 859.0 1720.4 858.7 1716.2 855.6C1711.9 852.6 1708.3 845.3 1708.9 842.9z"/>
<path d="M1876.0 908.6C1879.0 905.0 1890.3 908.9 1894.3 910.5C1898.2 912.0 1899.1 914.7 1899.8 917.8C1900.4 920.8 1901.9 926.3 1897.9 928.7C1894.0 931.2 1879.7 935.7 1876.0 932.4C1872.3 929.0 1873.0 912.3 1876.0 908.6z"/>
<path d="M1610.2 979.9C1611.1 978.4 1615.0 978.7 1617.5 981.7C1619.9 984.8 1621.1 993.6 1624.8 998.2C1628.5 1002.8 1633.3 1005.5 1639.4 1009.2C1645.5 1012.8 1654.0 1017.4 1661.3 1020.1C1668.7 1022.9 1675.4 1025.0 1683.3 1025.6C1691.2 1026.2 1705.2 1022.9 1708.9 1023.8C1712.5 1024.7 1709.5 1029.3 1705.2 1031.1C1700.9 1032.9 1691.2 1034.4 1683.3 1034.7C1675.4 1035.0 1665.0 1034.7 1657.7 1032.9C1650.4 1031.1 1645.5 1027.7 1639.4 1023.8C1633.3 1019.8 1625.7 1014.6 1621.1 1009.2C1616.6 1003.7 1613.8 995.8 1612.0 990.9C1610.2 986.0 1609.3 981.4 1610.2 979.9z"/>
<path d="M1745.4 1054.8C1749.1 1054.2 1760.0 1055.8 1767.3 1056.7C1774.6 1057.6 1786.2 1059.1 1789.3 1060.3C1792.3 1061.5 1789.9 1063.5 1785.6 1064.0C1781.3 1064.5 1770.4 1063.9 1763.7 1063.2C1757.0 1062.6 1748.5 1061.7 1745.4 1060.3C1742.4 1058.9 1741.8 1055.4 1745.4 1054.8z"/>
<path d="M1591.9 1042.0C1593.4 1039.9 1598.9 1038.4 1601.0 1040.2C1603.2 1042.0 1604.4 1048.4 1604.7 1053.0C1605.0 1057.6 1602.3 1063.4 1602.9 1067.6C1603.5 1071.9 1608.7 1076.5 1608.3 1078.6C1608.0 1080.7 1603.2 1082.3 1601.0 1080.4C1598.9 1078.6 1597.1 1072.2 1595.6 1067.6C1594.0 1063.1 1592.5 1057.3 1591.9 1053.0C1591.3 1048.7 1590.4 1044.2 1591.9 1042.0z"/>
<path d="M1559.0 1089.6C1561.1 1087.7 1568.8 1093.8 1573.6 1093.2C1578.5 1092.6 1584.6 1086.2 1588.2 1085.9C1591.9 1085.6 1595.6 1089.0 1595.6 1091.4C1595.6 1093.8 1587.0 1098.1 1588.2 1100.5C1589.5 1103.0 1597.4 1105.4 1602.9 1106.0C1608.3 1106.6 1616.9 1103.3 1621.1 1104.2C1625.4 1105.1 1626.9 1106.0 1628.5 1111.5C1630.0 1117.0 1630.9 1132.5 1630.3 1137.1C1629.7 1141.6 1626.0 1142.6 1624.8 1138.9C1623.6 1135.2 1625.4 1119.4 1623.0 1115.1C1620.5 1110.9 1616.0 1113.9 1610.2 1113.3C1604.4 1112.7 1593.7 1113.0 1588.2 1111.5C1582.8 1110.0 1580.9 1105.1 1577.3 1104.2C1573.6 1103.3 1569.7 1103.6 1566.3 1106.0C1563.0 1108.4 1559.6 1116.7 1557.2 1118.8C1554.7 1120.9 1551.1 1121.2 1551.7 1118.8C1552.3 1116.4 1559.6 1109.1 1560.8 1104.2C1562.1 1099.3 1556.9 1091.4 1559.0 1089.6z"/>
<path d="M1511.5 1043.9C1510.6 1041.1 1514.2 1041.4 1517.0 1043.9C1519.7 1046.3 1527.0 1055.8 1527.9 1058.5C1528.9 1061.2 1525.2 1062.8 1522.5 1060.3C1519.7 1057.9 1512.4 1046.6 1511.5 1043.9z"/>
<path d="M1157.0 1170.0C1158.2 1165.7 1163.1 1160.2 1167.9 1155.4C1172.8 1150.5 1180.1 1146.2 1186.2 1140.7C1192.3 1135.2 1198.4 1127.9 1204.5 1122.5C1210.6 1117.0 1216.0 1111.5 1222.7 1107.8C1229.4 1104.2 1239.2 1100.5 1244.7 1100.5C1250.2 1100.5 1255.6 1104.2 1255.6 1107.8C1255.6 1111.5 1250.2 1117.0 1244.7 1122.5C1239.2 1127.9 1230.1 1134.6 1222.7 1140.7C1215.4 1146.8 1208.1 1153.5 1200.8 1159.0C1193.5 1164.5 1185.6 1170.0 1178.9 1173.6C1172.2 1177.3 1164.3 1181.5 1160.6 1180.9C1157.0 1180.3 1155.7 1174.2 1157.0 1170.0z"/>
<path d="M1263.0 1071.3C1265.4 1068.2 1272.1 1062.8 1277.6 1060.3C1283.1 1057.9 1292.2 1056.7 1295.8 1056.7C1299.5 1056.7 1301.3 1057.6 1299.5 1060.3C1297.7 1063.1 1289.8 1069.5 1284.9 1073.1C1280.0 1076.8 1273.9 1081.3 1270.3 1082.3C1266.6 1083.2 1264.2 1080.4 1263.0 1078.6C1261.7 1076.8 1260.5 1074.3 1263.0 1071.3z"/>
<path d="M1252.0 1129.8C1253.2 1127.3 1259.3 1124.3 1263.0 1122.5C1266.6 1120.6 1271.8 1118.5 1273.9 1118.8C1276.1 1119.1 1277.3 1122.2 1275.7 1124.3C1274.2 1126.4 1268.1 1129.5 1264.8 1131.6C1261.4 1133.7 1257.8 1137.4 1255.6 1137.1C1253.5 1136.8 1250.8 1132.2 1252.0 1129.8z"/>
<path d="M1390.9 1187.7C1390.9 1189.2 1393.9 1192.0 1396.4 1195.0C1398.8 1198.1 1401.5 1202.6 1405.5 1206.0C1409.5 1209.3 1414.6 1213.0 1420.1 1215.1C1425.6 1217.3 1434.7 1219.1 1438.4 1218.8C1442.0 1218.5 1443.9 1214.5 1442.0 1213.3C1440.2 1212.1 1432.3 1213.3 1427.4 1211.5C1422.6 1209.6 1417.1 1205.7 1412.8 1202.3C1408.5 1199.0 1404.6 1194.1 1401.8 1191.4C1399.1 1188.6 1398.2 1186.5 1396.4 1185.9C1394.5 1185.3 1390.9 1186.2 1390.9 1187.7z"/>
<path d="M1453.0 1209.6C1454.8 1207.7 1462.8 1205.4 1467.6 1202.3C1472.5 1199.3 1477.7 1193.5 1482.3 1191.4C1486.8 1189.2 1493.2 1188.9 1495.0 1189.5C1496.9 1190.2 1496.0 1193.2 1493.2 1195.0C1490.5 1196.9 1483.5 1197.8 1478.6 1200.5C1473.7 1203.3 1467.6 1209.2 1464.0 1211.5C1460.3 1213.7 1458.5 1214.3 1456.7 1214.0C1454.8 1213.7 1451.2 1211.6 1453.0 1209.6z"/>
<path d="M1045.5 1352.2C1047.0 1346.7 1050.7 1340.0 1054.6 1333.9C1058.6 1327.8 1065.0 1321.7 1069.2 1315.6C1073.5 1309.6 1075.9 1302.2 1080.2 1297.4C1084.5 1292.5 1089.3 1289.4 1094.8 1286.4C1100.3 1283.4 1106.4 1281.2 1113.1 1279.1C1119.8 1277.0 1128.3 1274.2 1135.0 1273.6C1141.7 1273.0 1146.6 1273.9 1153.3 1275.4C1160.0 1277.0 1167.9 1280.3 1175.2 1282.7C1182.5 1285.2 1190.5 1287.6 1197.2 1290.1C1203.9 1292.5 1210.6 1294.6 1215.4 1297.4C1220.3 1300.1 1224.9 1303.5 1226.4 1306.5C1227.9 1309.6 1227.6 1313.5 1224.6 1315.6C1221.5 1317.8 1213.3 1319.3 1208.1 1319.3C1203.0 1319.3 1199.0 1317.5 1193.5 1315.6C1188.0 1313.8 1181.9 1309.2 1175.2 1308.3C1168.5 1307.4 1160.0 1308.9 1153.3 1310.2C1146.6 1311.4 1141.1 1313.8 1135.0 1315.6C1128.9 1317.5 1122.2 1318.7 1116.8 1321.1C1111.3 1323.6 1106.4 1329.0 1102.1 1330.3C1097.9 1331.5 1094.8 1329.7 1091.2 1328.4C1087.5 1327.2 1083.9 1322.0 1080.2 1323.0C1076.5 1323.9 1072.9 1329.0 1069.2 1333.9C1065.6 1338.8 1061.3 1347.3 1058.3 1352.2C1055.2 1357.1 1053.1 1360.7 1051.0 1363.2C1048.8 1365.6 1046.4 1368.6 1045.5 1366.8C1044.6 1365.0 1044.0 1357.7 1045.5 1352.2z"/>
<path d="M1599.2 1476.5C1599.5 1474.0 1605.9 1475.2 1610.2 1472.8C1614.4 1470.4 1619.9 1465.5 1624.8 1461.8C1629.7 1458.2 1635.2 1454.5 1639.4 1450.9C1643.7 1447.2 1647.3 1444.8 1650.4 1439.9C1653.4 1435.0 1654.6 1427.7 1657.7 1421.6C1660.7 1415.5 1664.4 1408.2 1668.7 1403.4C1672.9 1398.5 1679.9 1393.6 1683.3 1392.4C1686.6 1391.2 1690.0 1393.0 1688.8 1396.1C1687.5 1399.1 1679.9 1405.2 1676.0 1410.7C1672.0 1416.2 1667.4 1423.5 1665.0 1428.9C1662.6 1434.4 1663.8 1438.7 1661.3 1443.6C1658.9 1448.4 1654.6 1453.9 1650.4 1458.2C1646.1 1462.5 1640.0 1465.5 1635.8 1469.2C1631.5 1472.8 1626.0 1475.2 1624.8 1480.1C1623.6 1485.0 1627.5 1492.9 1628.5 1498.4C1629.4 1503.9 1631.5 1510.0 1630.3 1513.0C1629.1 1516.1 1623.3 1513.6 1621.1 1516.7C1619.0 1519.7 1616.9 1526.7 1617.5 1531.3C1618.1 1535.9 1624.8 1541.9 1624.8 1544.1C1624.8 1546.2 1619.9 1546.8 1617.5 1544.1C1615.0 1541.3 1610.8 1534.6 1610.2 1527.6C1609.6 1520.6 1614.1 1508.7 1613.8 1502.0C1613.5 1495.3 1610.8 1491.7 1608.3 1487.4C1605.9 1483.2 1598.9 1478.9 1599.2 1476.5z"/>
<path d="M1712.5 1454.5C1713.7 1451.5 1719.2 1449.0 1723.5 1447.2C1727.7 1445.4 1733.5 1445.1 1738.1 1443.6C1742.7 1442.0 1749.1 1437.8 1750.9 1438.1C1752.7 1438.4 1751.8 1443.3 1749.1 1445.4C1746.3 1447.5 1738.7 1448.4 1734.4 1450.9C1730.2 1453.3 1726.5 1457.6 1723.5 1460.0C1720.4 1462.5 1718.0 1466.4 1716.2 1465.5C1714.3 1464.6 1711.3 1457.6 1712.5 1454.5z"/>
<path d="M1811.2 1394.2C1811.5 1395.4 1806.9 1399.4 1803.9 1403.4C1800.8 1407.3 1795.7 1412.5 1792.9 1418.0C1790.2 1423.5 1789.3 1430.8 1787.4 1436.3C1785.6 1441.7 1785.3 1446.6 1782.0 1450.9C1778.6 1455.1 1771.6 1458.2 1767.3 1461.8C1763.1 1465.5 1759.4 1468.5 1756.4 1472.8C1753.3 1477.1 1751.5 1480.7 1749.1 1487.4C1746.6 1494.1 1743.9 1508.4 1741.8 1513.0C1739.6 1517.6 1736.3 1519.1 1736.3 1514.8C1736.3 1510.6 1739.3 1495.0 1741.8 1487.4C1744.2 1479.8 1747.2 1474.3 1750.9 1469.2C1754.5 1464.0 1759.1 1460.3 1763.7 1456.4C1768.3 1452.4 1775.0 1450.6 1778.3 1445.4C1781.7 1440.2 1782.0 1431.7 1783.8 1425.3C1785.6 1418.9 1786.2 1411.9 1789.3 1407.0C1792.3 1402.1 1798.4 1398.2 1802.1 1396.1C1805.7 1393.9 1810.9 1393.0 1811.2 1394.2z"/>
<path d="M1787.4 1450.9C1788.4 1450.3 1792.0 1460.0 1794.8 1465.5C1797.5 1471.0 1800.5 1477.7 1803.9 1483.8C1807.2 1489.9 1813.9 1498.7 1814.9 1502.0C1815.8 1505.4 1812.1 1506.3 1809.4 1503.9C1806.6 1501.4 1801.8 1493.2 1798.4 1487.4C1795.1 1481.6 1791.1 1475.2 1789.3 1469.2C1787.4 1463.1 1786.5 1451.5 1787.4 1450.9z"/>
<path d="M1575.5 1496.6C1576.7 1492.9 1579.7 1492.0 1580.9 1494.7C1582.2 1497.5 1583.4 1506.9 1582.8 1513.0C1582.2 1519.1 1578.8 1530.7 1577.3 1531.3C1575.8 1531.9 1573.9 1522.5 1573.6 1516.7C1573.3 1510.9 1574.2 1500.2 1575.5 1496.6z"/>
<path d="M1657.7 1507.5C1658.9 1506.6 1666.2 1509.4 1668.7 1511.2C1671.1 1513.0 1673.5 1517.6 1672.3 1518.5C1671.1 1519.4 1663.8 1518.5 1661.3 1516.7C1658.9 1514.8 1656.5 1508.4 1657.7 1507.5z"/>
<path d="M1045.5 1492.9C1046.1 1490.8 1049.1 1490.8 1051.0 1492.9C1052.8 1495.0 1054.9 1501.1 1056.4 1505.7C1058.0 1510.3 1060.4 1517.9 1060.1 1520.3C1059.8 1522.8 1056.8 1522.8 1054.6 1520.3C1052.5 1517.9 1048.8 1510.3 1047.3 1505.7C1045.8 1501.1 1044.9 1495.0 1045.5 1492.9z"/>
<path d="M1969.2 1524.0C1970.7 1520.6 1975.6 1515.4 1978.3 1514.8C1981.1 1514.2 1985.3 1517.6 1985.6 1520.3C1986.0 1523.1 1980.2 1527.3 1980.2 1531.3C1980.2 1535.2 1986.9 1541.9 1985.6 1544.1C1984.4 1546.2 1975.6 1545.6 1972.9 1544.1C1970.1 1542.6 1969.8 1538.3 1969.2 1534.9C1968.6 1531.6 1967.7 1527.3 1969.2 1524.0z"/>
<path d="M2161.1 1492.9C2162.9 1491.1 2167.8 1492.0 2168.4 1494.7C2169.0 1497.5 2167.2 1503.9 2164.7 1509.4C2162.3 1514.8 2157.4 1521.8 2153.8 1527.6C2150.1 1533.4 2146.5 1541.3 2142.8 1544.1C2139.2 1546.8 2131.2 1547.4 2131.8 1544.1C2132.5 1540.7 2142.2 1530.4 2146.5 1524.0C2150.7 1517.6 2155.0 1510.9 2157.4 1505.7C2159.9 1500.5 2159.3 1494.7 2161.1 1492.9z"/>
<path d="M2702.0 1544.1C2697.0 1542.6 2703.2 1537.1 2705.7 1534.9C2708.1 1532.8 2711.6 1532.2 2716.6 1531.3C2721.7 1530.4 2732.8 1527.3 2736.0 1529.5C2739.2 1531.6 2741.7 1541.6 2736.0 1544.1C2730.3 1546.5 2707.1 1545.6 2702.0 1544.1z"/>
<path d="M2223.2 725.9C2224.7 723.5 2230.5 721.3 2232.4 724.1C2234.2 726.8 2233.6 736.2 2234.2 742.3C2234.8 748.4 2236.6 756.0 2236.0 760.6C2235.4 765.2 2232.4 770.4 2230.5 769.8C2228.7 769.1 2226.3 762.1 2225.0 757.0C2223.8 751.8 2223.5 743.9 2223.2 738.7C2222.9 733.5 2221.7 728.3 2223.2 725.9z"/>
<path d="M2278.0 751.5C2280.2 749.6 2284.7 750.0 2285.4 753.3C2286.0 756.7 2282.9 766.1 2281.7 771.6C2280.5 777.1 2278.4 780.7 2278.0 786.2C2277.7 791.7 2280.5 800.2 2279.9 804.5C2279.3 808.7 2276.2 812.4 2274.4 811.8C2272.6 811.2 2270.1 805.7 2268.9 800.8C2267.7 795.9 2266.5 788.6 2267.1 782.5C2267.7 776.5 2270.7 769.4 2272.6 764.3C2274.4 759.1 2275.9 753.3 2278.0 751.5z"/>
<path d="M2526.6 793.5C2527.2 790.5 2531.5 791.7 2533.9 789.9C2536.3 788.0 2539.1 785.0 2541.2 782.5C2543.3 780.1 2544.3 776.8 2546.7 775.2C2549.1 773.7 2552.8 772.5 2555.8 773.4C2558.9 774.3 2563.1 777.4 2565.0 780.7C2566.8 784.1 2567.7 790.2 2566.8 793.5C2565.9 796.9 2563.1 799.0 2559.5 800.8C2555.8 802.6 2549.7 803.3 2544.9 804.5C2540.0 805.7 2533.3 810.0 2530.2 808.1C2527.2 806.3 2526.0 796.6 2526.6 793.5z"/>
<path d="M2274.4 895.8C2275.3 893.1 2280.8 887.3 2283.5 886.7C2286.3 886.1 2289.3 890.1 2290.8 892.2C2292.4 894.3 2294.8 897.7 2292.7 899.5C2290.5 901.3 2281.1 903.8 2278.0 903.2C2275.0 902.5 2273.5 898.6 2274.4 895.8z"/>
<path d="M2131.8 892.2C2132.5 888.2 2135.5 876.4 2137.3 873.9C2139.2 871.5 2142.5 874.5 2142.8 877.6C2143.1 880.6 2140.7 888.8 2139.2 892.2C2137.6 895.5 2134.9 897.7 2133.7 897.7C2132.5 897.7 2131.2 896.2 2131.8 892.2z"/>
</g>
<g fill="none" stroke="#f7dfa8" stroke-width="2" stroke-linecap="round">
<path d="M2236.0 1217.0C2237.7 1222.3 2240.8 1236.1 2245.2 1246.2C2249.5 1256.2 2253.7 1265.1 2259.8 1271.8C2265.8 1278.5 2274.7 1280.7 2278.0 1282.7"/>
<path d="M1971.0 1516.7C1973.7 1514.0 1976.3 1511.4 1985.6 1502.0C1995.0 1492.7 2011.5 1475.5 2022.2 1465.5C2032.9 1455.4 2041.4 1455.3 2044.1 1447.2C2046.8 1439.2 2038.2 1426.3 2036.8 1421.6"/>
<path d="M2014.9 1370.5C2018.9 1364.4 2030.8 1351.0 2036.8 1337.6C2042.8 1324.2 2045.8 1304.7 2047.8 1297.4"/>
<path d="M2343.8 1443.6C2347.9 1444.9 2360.4 1445.5 2365.8 1450.9C2371.1 1456.2 2373.7 1464.8 2373.1 1472.8C2372.4 1480.8 2364.1 1490.7 2362.1 1494.7"/>
<path d="M2373.1 1465.5C2377.1 1462.8 2386.3 1454.2 2395.0 1450.9C2403.7 1447.5 2415.9 1447.9 2420.6 1447.2"/>
<path d="M2607.0 1480.1C2611.0 1472.7 2623.6 1454.7 2628.9 1439.9C2634.3 1425.2 2634.9 1407.1 2636.2 1399.7"/>
<path d="M2281.7 1443.6L2321.9 1432.6"/>
<path d="M1993.0 753.3C1999.7 762.0 2019.5 781.4 2029.5 800.8C2039.6 820.3 2044.4 848.6 2047.8 859.3"/>
<path d="M2095.3 1049.4C2099.3 1054.7 2114.5 1069.2 2117.2 1078.6C2119.9 1088.0 2116.6 1091.8 2109.9 1100.5C2103.2 1109.2 2086.0 1121.4 2080.7 1126.1"/>
<path d="M1690.6 815.4L1734.4 808.1"/>
<path d="M2058.7 833.7C2062.8 832.4 2072.6 829.1 2080.7 826.4C2088.7 823.7 2098.6 820.4 2102.6 819.1"/>
<path d="M1985.6 873.9C1993.7 871.9 2018.8 865.6 2029.5 863.0C2040.2 860.3 2041.4 860.0 2044.1 859.3"/>
<path d="M2270.7 558.1C2276.1 555.4 2290.6 548.9 2300.0 543.5C2309.4 538.1 2317.9 531.6 2321.9 528.9"/>
<path d="M2278.0 492.3C2288.1 491.7 2314.1 492.7 2332.9 488.7C2351.6 484.6 2371.7 473.7 2380.4 470.4"/>
<path d="M1559.0 291.3C1560.3 298.0 1567.7 314.4 1566.3 327.8C1565.0 341.2 1554.4 357.7 1551.7 364.4"/>
<path d="M1610.2 115.9C1612.9 121.2 1623.5 133.0 1624.8 145.1C1626.1 157.2 1618.8 174.9 1617.5 181.6"/>
</g>
<g fill="none" stroke="#f7d3a0" stroke-width="2" stroke-linecap="round">
<path d="M1049.4 523.0C1061.5 526.4 1091.1 531.5 1115.2 541.8C1139.3 552.1 1160.3 563.9 1180.9 579.4C1201.6 594.9 1209.0 616.0 1227.9 626.4C1246.9 636.7 1274.0 634.0 1284.3 635.8"/>
<path d="M1040.0 560.6C1046.9 574.4 1063.8 608.2 1077.6 635.8C1091.4 663.3 1104.8 683.4 1115.2 710.9C1125.5 738.5 1121.9 765.4 1134.0 786.1C1146.0 806.8 1163.7 811.6 1180.9 823.7C1198.2 835.7 1210.7 848.4 1227.9 851.9C1245.1 855.3 1257.7 845.0 1274.9 842.5C1292.1 839.9 1313.3 838.6 1321.9 837.8"/>
<path d="M1068.2 560.6C1073.4 577.8 1086.0 623.5 1096.4 654.5C1106.7 685.5 1122.8 698.7 1124.6 729.7C1126.3 760.7 1102.3 794.4 1105.8 823.7C1109.2 853.0 1136.5 877.4 1143.4 889.4"/>
<path d="M1321.9 447.8C1327.0 435.8 1332.8 399.3 1350.1 382.1C1367.3 364.8 1390.0 353.9 1415.8 353.9C1441.7 353.9 1470.3 374.3 1491.0 382.1C1511.7 389.8 1521.7 393.6 1528.6 396.2"/>
<path d="M2167.5 607.6C2169.2 621.3 2176.9 660.3 2176.9 682.7C2176.9 705.1 2170.9 710.8 2167.5 729.7C2164.1 748.7 2159.8 775.7 2158.1 786.1"/>
<path d="M2167.5 607.6C2165.8 592.1 2158.1 552.3 2158.1 523.0C2158.1 493.7 2169.2 478.8 2167.5 447.8C2165.8 416.8 2143.5 379.7 2148.7 353.9C2153.9 328.0 2183.6 331.0 2195.7 306.9C2207.7 282.8 2211.0 237.8 2214.5 222.3"/>
<path d="M2374.2 692.1C2388.0 688.7 2418.4 680.2 2449.4 673.3C2480.4 666.4 2508.9 657.1 2543.3 654.5C2577.8 652.0 2602.0 662.7 2637.3 659.2C2672.6 655.8 2717.9 640.1 2736.0 635.8"/>
<path d="M2458.8 382.1C2467.4 394.1 2490.2 422.0 2505.8 447.8C2521.3 473.7 2533.0 495.4 2543.3 523.0C2553.7 550.6 2562.1 574.1 2562.1 598.2C2562.1 622.3 2546.8 644.2 2543.3 654.5"/>
<path d="M2101.7 1049.2C2088.0 1050.9 2052.4 1060.3 2026.6 1058.6C2000.7 1056.8 1983.2 1048.4 1960.8 1039.8C1938.4 1031.2 1919.9 1025.4 1904.4 1011.6C1888.9 997.8 1879.7 981.8 1876.2 964.6C1872.8 947.4 1883.9 926.2 1885.6 917.6"/>
<path d="M2280.3 1274.7C2273.4 1266.1 2259.9 1239.7 2242.7 1227.7C2225.4 1215.6 2207.0 1214.1 2186.3 1208.9C2165.6 1203.7 2148.9 1209.8 2129.9 1199.5C2111.0 1189.2 2093.3 1169.7 2082.9 1152.5C2072.6 1135.3 2075.3 1114.2 2073.5 1105.5"/>
<path d="M2317.8 1133.7C2328.2 1137.2 2350.1 1150.8 2374.2 1152.5C2398.3 1154.2 2421.8 1139.7 2449.4 1143.1C2476.9 1146.6 2497.0 1162.7 2524.5 1171.3C2552.1 1179.9 2570.4 1188.4 2599.7 1190.1C2629.0 1191.8 2659.3 1184.2 2684.3 1180.7C2709.3 1177.3 2726.5 1173.0 2736.0 1171.3"/>
<path d="M2228.6 1425.0C2238.0 1426.7 2260.4 1427.5 2280.3 1434.4C2300.1 1441.3 2319.4 1448.8 2336.6 1462.6C2353.9 1476.4 2363.9 1494.4 2374.2 1509.6C2384.5 1524.7 2389.6 1538.7 2393.0 1545.3"/>
<path d="M2689.0 823.7C2691.6 835.7 2702.2 863.6 2703.1 889.4C2703.9 915.3 2691.9 937.0 2693.7 964.6C2695.4 992.2 2707.3 1013.9 2712.5 1039.8C2717.6 1065.6 2717.6 1084.9 2721.9 1105.5C2726.2 1126.2 2733.4 1143.9 2736.0 1152.5"/>
<path d="M2505.8 917.6C2509.2 934.9 2519.4 977.1 2524.5 1011.6C2529.7 1046.0 2530.5 1074.5 2533.9 1105.5C2537.4 1136.5 2541.6 1166.9 2543.3 1180.7"/>
<path d="M2505.8 1293.5C2512.6 1307.2 2533.0 1342.8 2543.3 1368.6C2553.7 1394.5 2555.2 1410.3 2562.1 1434.4C2569.0 1458.5 2567.1 1479.8 2580.9 1500.2C2594.7 1520.5 2627.0 1537.0 2637.3 1545.3"/>
<path d="M2674.9 1321.6C2681.8 1333.7 2701.3 1368.5 2712.5 1387.4C2723.7 1406.4 2731.6 1418.1 2736.0 1425.0"/>
<path d="M1157.4 1265.3C1160.0 1253.2 1165.5 1218.4 1171.5 1199.5C1177.6 1180.6 1180.0 1175.7 1190.3 1161.9C1200.7 1148.1 1214.1 1138.1 1227.9 1124.3C1241.7 1110.6 1258.6 1093.6 1265.5 1086.8"/>
<path d="M1040.0 1387.4C1050.3 1394.3 1075.7 1419.8 1096.4 1425.0C1117.0 1430.2 1132.1 1413.9 1152.8 1415.6C1173.4 1417.3 1190.2 1422.3 1209.1 1434.4C1228.1 1446.5 1242.3 1465.9 1256.1 1481.4C1269.9 1496.9 1279.1 1512.1 1284.3 1519.0"/>
<path d="M1284.3 1519.0C1296.4 1513.8 1325.9 1497.7 1350.1 1490.8C1374.2 1483.9 1391.7 1479.7 1415.8 1481.4C1439.9 1483.1 1460.9 1488.5 1481.6 1500.2C1502.3 1511.9 1520.0 1537.0 1528.6 1545.3"/>
<path d="M1641.3 1545.3C1651.7 1537.0 1677.0 1506.7 1697.7 1500.2C1718.4 1493.6 1733.4 1501.3 1754.1 1509.6C1774.8 1517.8 1800.1 1538.7 1810.5 1545.3"/>
<path d="M1096.4 222.3C1106.7 218.9 1132.1 201.8 1152.8 203.5C1173.4 205.3 1192.8 213.6 1209.1 231.7C1225.5 249.8 1236.0 289.3 1242.0 302.2"/>
<path d="M1242.0 302.2C1253.2 299.6 1281.6 295.9 1303.1 288.1C1324.6 280.4 1338.8 272.0 1359.5 259.9C1380.1 247.9 1393.4 230.9 1415.8 222.3C1438.2 213.7 1459.2 218.1 1481.6 212.9C1504.0 207.8 1527.6 197.6 1538.0 194.1"/>
<path d="M1134.0 128.4C1144.3 135.3 1173.1 166.0 1190.3 166.0C1207.6 166.0 1210.7 138.7 1227.9 128.4C1245.1 118.0 1261.9 109.6 1284.3 109.6C1306.7 109.6 1325.9 128.4 1350.1 128.4C1374.2 128.4 1403.8 113.0 1415.8 109.6"/>
<path d="M1444.0 166.0C1452.6 176.3 1475.5 201.7 1491.0 222.3C1506.5 243.0 1513.1 254.6 1528.6 278.7C1544.1 302.8 1566.1 332.3 1575.6 353.9C1585.0 375.4 1579.4 388.4 1580.3 396.2"/>
<path d="M1641.3 72.0C1637.9 85.8 1629.4 121.3 1622.5 147.2C1615.7 173.0 1607.2 200.9 1603.8 212.9"/>
<path d="M1697.7 128.4C1708.0 135.3 1730.0 162.5 1754.1 166.0C1778.2 169.4 1805.1 157.5 1829.3 147.2C1853.4 136.8 1865.0 118.2 1885.6 109.6C1906.3 101.0 1931.7 101.9 1942.0 100.2"/>
<path d="M1660.1 353.9C1670.5 357.3 1699.3 362.3 1716.5 372.7C1733.7 383.0 1745.5 393.0 1754.1 410.3C1762.7 427.5 1761.8 456.3 1763.5 466.6"/>
<path d="M1829.3 466.6C1839.6 463.2 1865.0 454.7 1885.6 447.8C1906.3 440.9 1919.6 429.0 1942.0 429.0C1964.4 429.0 1995.7 444.4 2007.8 447.8"/>
<path d="M1866.8 306.9C1877.2 310.3 1902.5 324.0 1923.2 325.7C1943.9 327.4 1962.4 319.7 1979.6 316.3C1996.8 312.8 2010.3 308.6 2017.2 306.9"/>
<path d="M2017.2 184.8C2027.5 188.2 2052.9 201.8 2073.5 203.5C2094.2 205.3 2109.2 190.7 2129.9 194.1C2150.6 197.6 2176.0 217.2 2186.3 222.3"/>
<path d="M2252.1 241.1C2260.7 251.5 2283.5 276.8 2299.0 297.5C2314.5 318.2 2319.4 340.1 2336.6 353.9C2353.9 367.7 2370.6 367.5 2393.0 372.7C2415.4 377.8 2446.7 380.3 2458.8 382.1"/>
<path d="M2261.5 128.4C2271.8 135.3 2297.2 160.8 2317.8 166.0C2338.5 171.1 2353.5 153.1 2374.2 156.6C2394.9 160.0 2409.9 183.0 2430.6 184.8C2451.3 186.5 2476.6 169.4 2487.0 166.0"/>
<path d="M2543.3 259.9C2550.2 270.3 2563.7 299.1 2580.9 316.3C2598.1 333.5 2616.6 343.5 2637.3 353.9C2658.0 364.2 2675.6 367.5 2693.7 372.7C2711.8 377.8 2728.2 380.3 2736.0 382.1"/>
<path d="M2036.0 504.2C2046.3 500.8 2071.7 485.4 2092.3 485.4C2113.0 485.4 2126.3 504.2 2148.7 504.2C2171.1 504.2 2186.9 490.6 2214.5 485.4C2242.0 480.2 2283.5 477.7 2299.0 476.0"/>
<path d="M2355.4 541.8C2365.8 545.2 2391.1 558.9 2411.8 560.6C2432.5 562.3 2447.5 547.7 2468.2 551.2C2488.8 554.6 2514.2 574.2 2524.5 579.4"/>
<path d="M2580.9 485.4C2591.3 492.3 2616.6 512.7 2637.3 523.0C2658.0 533.3 2675.6 531.5 2693.7 541.8C2711.8 552.1 2728.2 572.5 2736.0 579.4"/>
<path d="M2205.1 842.5C2212.0 835.6 2228.9 818.7 2242.7 804.9C2256.4 791.1 2263.0 786.2 2280.3 767.3C2297.5 748.3 2326.3 713.6 2336.6 701.5"/>
<path d="M2073.5 917.6C2083.9 914.2 2109.2 898.8 2129.9 898.8C2150.6 898.8 2165.6 917.6 2186.3 917.6C2207.0 917.6 2232.3 902.3 2242.7 898.8"/>
<path d="M1678.9 880.0C1689.3 883.5 1714.6 898.8 1735.3 898.8C1756.0 898.8 1772.7 880.0 1791.7 880.0C1810.6 880.0 1830.0 895.4 1838.6 898.8"/>
<path d="M1434.6 974.0C1441.5 980.9 1455.0 1001.2 1472.2 1011.6C1489.4 1021.9 1511.4 1020.0 1528.6 1030.4C1545.8 1040.7 1561.0 1057.6 1566.2 1068.0C1571.3 1078.3 1558.5 1083.3 1556.8 1086.8"/>
<path d="M1641.3 1011.6C1651.7 1015.0 1677.0 1021.8 1697.7 1030.4C1718.4 1039.0 1733.4 1051.7 1754.1 1058.6C1774.8 1065.5 1800.1 1066.2 1810.5 1068.0"/>
<path d="M1321.9 1180.7C1330.5 1184.2 1351.6 1197.8 1368.9 1199.5C1386.1 1201.2 1400.3 1186.7 1415.8 1190.1C1431.3 1193.6 1446.5 1213.1 1453.4 1218.3"/>
<path d="M1866.8 1086.8C1870.3 1097.1 1885.6 1122.5 1885.6 1143.1C1885.6 1163.8 1873.7 1178.8 1866.8 1199.5C1859.9 1220.2 1861.8 1240.4 1848.0 1255.9C1834.3 1271.4 1802.0 1278.9 1791.7 1284.1"/>
<path d="M2374.2 1011.6C2384.5 1015.0 2409.9 1030.4 2430.6 1030.4C2451.3 1030.4 2466.3 1011.6 2487.0 1011.6C2507.6 1011.6 2519.2 1030.4 2543.3 1030.4C2567.5 1030.4 2591.8 1013.3 2618.5 1011.6C2645.2 1009.9 2676.1 1019.3 2689.0 1021.0"/>
<path d="M2073.5 1293.5C2083.9 1300.4 2112.7 1313.8 2129.9 1331.0C2147.1 1348.3 2149.4 1370.2 2167.5 1387.4C2185.6 1404.6 2217.4 1418.1 2228.6 1425.0"/>
<path d="M1885.6 1387.4C1896.0 1394.3 1921.3 1414.7 1942.0 1425.0C1962.7 1435.3 1977.7 1433.5 1998.4 1443.8C2019.0 1454.1 2041.0 1462.8 2054.8 1481.4C2068.5 1500.0 2070.1 1533.6 2073.5 1545.3"/>
<path d="M2449.4 1481.4C2459.7 1477.9 2485.1 1462.6 2505.8 1462.6C2526.4 1462.6 2541.5 1481.4 2562.1 1481.4C2582.8 1481.4 2597.8 1462.6 2618.5 1462.6C2639.2 1462.6 2653.3 1479.7 2674.9 1481.4C2696.4 1483.1 2724.8 1473.7 2736.0 1472.0"/>
<path d="M1096.4 1105.5C1103.3 1114.2 1128.8 1135.3 1134.0 1152.5C1139.1 1169.7 1120.3 1178.8 1124.6 1199.5C1128.9 1220.2 1151.4 1253.2 1157.4 1265.3"/>
<path d="M1040.0 1180.7C1046.9 1173.8 1067.2 1156.9 1077.6 1143.1C1087.9 1129.3 1094.7 1122.8 1096.4 1105.5C1098.1 1088.3 1083.5 1066.4 1087.0 1049.2C1090.4 1031.9 1110.0 1018.5 1115.2 1011.6"/>
<path d="M1162.1 673.3C1170.8 680.2 1190.2 700.6 1209.1 710.9C1228.1 721.3 1244.8 728.0 1265.5 729.7C1286.2 731.4 1302.9 716.9 1321.9 720.3C1340.8 723.8 1360.2 743.3 1368.9 748.5"/>
<path d="M1528.6 396.2C1535.5 409.1 1552.4 443.4 1566.2 466.6C1579.9 489.9 1590.0 505.8 1603.8 523.0C1617.5 540.2 1634.4 553.7 1641.3 560.6"/>
<path d="M1641.3 635.8C1651.7 632.3 1677.0 617.0 1697.7 617.0C1718.4 617.0 1733.4 635.8 1754.1 635.8C1774.8 635.8 1800.1 620.4 1810.5 617.0"/>
<path d="M1885.6 673.3C1892.5 683.7 1903.4 715.9 1923.2 729.7C1943.0 743.5 1980.8 745.1 1993.7 748.5"/>
</g>
<g fill="none" stroke="#f6c98f" stroke-width="2.700" stroke-linecap="round">
<path d="M1045.5 342.5C1057.9 341.1 1087.3 336.5 1113.1 335.2C1138.9 333.8 1164.8 345.9 1186.2 335.2C1207.6 324.4 1215.3 288.7 1230.1 276.7C1244.8 264.6 1251.2 272.0 1266.6 269.4C1282.0 266.7 1295.4 268.1 1314.1 262.1C1332.9 256.0 1345.5 244.5 1368.9 236.5C1392.4 228.4 1415.2 226.9 1442.0 218.2C1468.8 209.5 1493.7 190.3 1515.1 189.0C1536.6 187.6 1544.3 206.2 1559.0 210.9C1573.7 215.6 1588.9 213.9 1595.6 214.5"/>
<path d="M1237.4 163.4C1238.7 173.4 1243.3 200.1 1244.7 218.2C1246.0 236.3 1246.0 248.7 1244.7 262.1C1243.3 275.5 1238.7 285.9 1237.4 291.3"/>
<path d="M1178.9 262.1C1191.0 262.1 1220.6 260.7 1244.7 262.1C1268.8 263.4 1294.4 262.7 1310.5 269.4C1326.5 276.1 1321.7 291.9 1332.4 298.6C1343.1 305.3 1353.5 303.2 1368.9 305.9C1384.4 308.6 1407.8 311.9 1416.5 313.2"/>
<path d="M1522.5 189.0C1521.8 205.0 1519.5 251.2 1518.8 276.7C1518.1 302.1 1512.8 310.4 1518.8 327.8C1524.8 345.3 1540.3 359.6 1551.7 371.7C1563.1 383.8 1575.6 389.6 1580.9 393.6"/>
<path d="M1624.8 72.0C1623.5 85.4 1616.1 118.3 1617.5 145.1C1618.8 171.9 1629.4 191.4 1632.1 218.2C1634.8 245.0 1636.1 264.5 1632.1 291.3C1628.1 318.1 1619.6 344.3 1610.2 364.4C1600.8 384.5 1593.0 387.5 1580.9 400.9C1568.9 414.3 1556.4 424.1 1544.4 437.5C1532.3 450.9 1525.9 457.3 1515.1 474.0C1504.4 490.8 1495.3 508.8 1485.9 528.9C1476.5 549.0 1472.0 566.9 1464.0 583.7C1455.9 600.4 1447.4 609.0 1442.0 620.2C1436.7 631.5 1436.1 640.5 1434.7 645.1"/>
<path d="M1580.9 400.9C1589.0 403.6 1610.1 411.5 1624.8 415.6C1639.5 419.6 1647.9 415.5 1661.3 422.9C1674.7 430.2 1684.5 444.4 1697.9 455.8C1711.3 467.2 1722.4 479.0 1734.4 485.0C1746.5 491.0 1758.3 488.0 1763.7 488.7"/>
<path d="M1632.1 287.6C1644.2 291.0 1672.4 299.9 1697.9 305.9C1723.4 311.9 1750.9 316.5 1771.0 320.5C1791.1 324.6 1783.9 329.9 1807.5 327.8C1831.2 325.8 1883.1 312.9 1900.0 309.6"/>
<path d="M1900.0 145.1C1893.1 155.2 1876.0 179.8 1862.4 199.9C1848.8 220.0 1837.2 231.3 1825.8 254.7C1814.4 278.2 1810.3 301.0 1800.2 327.8C1790.2 354.7 1779.0 380.8 1771.0 400.9C1763.0 421.0 1757.7 421.4 1756.4 437.5C1755.0 453.6 1762.3 479.3 1763.7 488.7"/>
<path d="M1763.7 488.7C1771.7 492.7 1789.5 503.2 1807.5 510.6C1825.6 518.0 1845.4 522.2 1862.4 528.9C1879.3 535.6 1893.1 543.8 1900.0 547.1"/>
<path d="M1734.4 485.0C1731.1 493.1 1724.2 510.8 1716.2 528.9C1708.1 547.0 1702.0 566.9 1690.6 583.7C1679.2 600.4 1663.4 609.0 1654.0 620.2C1644.7 631.5 1642.1 640.5 1639.4 645.1"/>
<path d="M1045.5 528.9C1052.5 528.9 1067.4 526.2 1083.9 528.9C1100.3 531.6 1116.3 533.4 1135.0 543.5C1153.8 553.5 1171.5 565.1 1186.2 583.7C1200.9 602.3 1210.1 633.8 1215.4 645.1"/>
<path d="M1200.8 335.2C1211.5 343.9 1245.9 367.3 1259.3 382.7C1272.7 398.1 1267.2 403.8 1273.9 419.2C1280.6 434.6 1281.8 457.0 1295.8 466.7C1309.9 476.5 1330.6 470.9 1350.7 472.2C1370.8 473.6 1392.8 467.0 1405.5 474.0C1418.2 481.1 1417.4 503.9 1420.1 510.6"/>
<path d="M1515.1 400.9C1508.4 414.3 1494.7 455.3 1478.6 474.0C1462.5 492.8 1438.1 491.2 1427.4 503.3C1416.7 515.3 1424.1 529.8 1420.1 539.8C1416.1 549.9 1414.9 550.1 1405.5 558.1C1396.1 566.2 1377.0 567.7 1368.9 583.7C1360.9 599.6 1363.0 633.8 1361.6 645.1"/>
<path d="M1420.1 506.9C1413.4 511.6 1390.9 522.5 1383.6 532.5C1376.2 542.6 1396.0 552.4 1379.9 561.8C1363.8 571.1 1311.3 579.7 1295.8 583.7"/>
<path d="M1368.9 236.5C1372.3 239.8 1383.2 244.7 1387.2 254.7C1391.2 264.8 1392.9 281.9 1390.9 291.3C1388.9 300.7 1378.9 303.2 1376.3 305.9"/>
<path d="M1045.5 481.4C1047.2 486.7 1054.6 501.9 1054.6 510.6C1054.6 519.3 1047.2 525.5 1045.5 528.9"/>
<path d="M1045.5 547.1C1051.2 557.2 1066.8 584.0 1076.5 602.0C1086.3 619.9 1094.5 637.2 1098.5 645.1"/>
<path d="M1186.2 83.0C1194.2 85.0 1214.0 78.5 1230.1 93.9C1246.1 109.3 1255.2 147.6 1273.9 167.0C1292.7 186.5 1315.0 187.2 1332.4 199.9C1349.8 212.7 1362.2 229.8 1368.9 236.5"/>
<path d="M1442.0 218.2C1443.4 211.5 1439.3 193.0 1449.4 181.6C1459.4 170.3 1485.5 169.5 1496.9 156.1C1508.3 142.7 1512.8 121.3 1511.5 108.5C1510.2 95.8 1493.6 90.6 1489.6 86.6"/>
<path d="M1876.0 108.5C1888.1 106.5 1921.7 98.9 1941.8 97.6C1961.9 96.2 1964.2 99.9 1985.6 101.2C2007.1 102.6 2031.9 101.5 2058.7 104.9C2085.6 108.2 2111.7 113.5 2131.8 119.5C2152.0 125.5 2156.3 126.4 2168.4 137.8C2180.5 149.2 2190.9 166.9 2197.6 181.6C2204.3 196.4 2199.6 207.5 2204.9 218.2C2210.3 228.9 2222.9 236.1 2226.9 240.1"/>
<path d="M1985.6 101.2C1988.3 109.3 1994.9 123.7 2000.3 145.1C2005.6 166.5 2012.2 187.4 2014.9 218.2C2017.6 249.0 2016.9 285.1 2014.9 313.2C2012.9 341.4 2005.3 348.9 2003.9 371.7C2002.6 394.5 2005.6 412.0 2007.6 437.5C2009.6 463.0 2018.9 489.2 2014.9 510.6C2010.9 532.0 1991.7 541.1 1985.6 554.5C1979.6 567.9 1982.0 567.1 1982.0 583.7C1982.0 600.3 1985.0 633.8 1985.6 645.1"/>
<path d="M1876.0 313.2C1884.0 315.2 1902.4 322.9 1919.9 324.2C1937.3 325.5 1953.6 323.2 1971.0 320.5C1988.5 317.9 1994.8 314.9 2014.9 309.6C2035.0 304.2 2057.9 297.3 2080.7 291.3C2103.5 285.3 2116.4 280.7 2139.2 276.7C2161.9 272.7 2187.5 274.7 2204.9 269.4C2222.4 264.0 2226.1 252.1 2234.2 247.4C2242.2 242.7 2246.1 244.5 2248.8 243.8"/>
<path d="M2248.8 243.8C2248.8 249.8 2247.5 262.6 2248.8 276.7C2250.1 290.8 2250.8 303.1 2256.1 320.5C2261.5 338.0 2268.7 354.3 2278.0 371.7C2287.4 389.1 2300.6 399.5 2307.3 415.6C2314.0 431.6 2313.3 445.4 2314.6 459.4C2315.9 473.5 2311.2 479.6 2314.6 492.3C2317.9 505.1 2328.2 518.8 2332.9 528.9C2337.6 538.9 2338.2 525.8 2340.2 547.1C2342.2 568.5 2343.2 627.1 2343.8 645.1"/>
<path d="M2248.8 243.8C2256.8 243.1 2280.6 235.4 2292.7 240.1C2304.7 244.8 2305.2 260.0 2314.6 269.4C2324.0 278.7 2334.5 281.9 2343.8 291.3C2353.2 300.7 2355.0 313.8 2365.8 320.5C2376.5 327.2 2392.9 320.5 2402.3 327.8C2411.7 335.2 2407.6 350.0 2416.9 360.7C2426.3 371.5 2442.8 381.0 2453.5 386.3C2464.2 391.7 2460.7 389.3 2475.4 390.0C2490.2 390.7 2516.5 388.0 2533.9 390.0C2551.3 392.0 2555.7 396.9 2570.4 400.9C2585.2 405.0 2600.9 405.2 2614.3 411.9C2627.7 418.6 2632.8 428.8 2643.5 437.5C2654.3 446.2 2659.4 450.0 2672.8 459.4C2686.2 468.8 2705.1 480.6 2716.6 488.7C2728.2 496.7 2732.5 500.6 2736.0 503.3"/>
<path d="M2256.1 243.8C2266.8 242.4 2295.8 239.2 2314.6 236.5C2333.4 233.8 2345.1 228.5 2358.5 229.2C2371.9 229.8 2374.3 237.4 2387.7 240.1C2401.1 242.8 2420.8 245.8 2431.6 243.8C2442.3 241.8 2438.1 233.2 2446.2 229.2C2454.2 225.1 2470.1 223.2 2475.4 221.9"/>
<path d="M2482.7 72.0C2480.0 85.4 2469.4 122.3 2468.1 145.1C2466.8 167.9 2472.7 181.5 2475.4 196.3C2478.1 211.0 2484.1 208.1 2482.7 225.5C2481.4 242.9 2472.1 267.2 2468.1 291.3C2464.1 315.4 2462.8 339.7 2460.8 357.1C2458.8 374.5 2457.1 374.9 2457.1 386.3C2457.1 397.7 2466.8 405.8 2460.8 419.2C2454.8 432.6 2439.0 446.0 2424.2 459.4C2409.5 472.8 2390.4 480.9 2380.4 492.3C2370.3 503.7 2376.8 511.5 2369.4 521.6C2362.1 531.6 2345.5 542.5 2340.2 547.1"/>
<path d="M2190.3 72.0C2194.3 80.0 2209.6 99.1 2212.3 115.9C2214.9 132.6 2207.6 149.3 2204.9 163.4C2202.3 177.4 2197.6 182.6 2197.6 192.6C2197.6 202.7 2203.6 213.5 2204.9 218.2"/>
<path d="M2321.9 72.0C2320.6 80.7 2321.3 104.1 2314.6 119.5C2307.9 134.9 2293.4 141.3 2285.4 156.1C2277.3 170.8 2276.1 184.5 2270.7 199.9C2265.4 215.3 2258.8 232.8 2256.1 240.1"/>
<path d="M1982.0 583.7C1990.7 585.0 2011.4 588.3 2029.5 591.0C2047.6 593.7 2055.2 597.0 2080.7 598.3C2106.1 599.7 2144.3 597.0 2168.4 598.3C2192.5 599.7 2198.9 600.3 2212.3 605.6C2225.7 611.0 2233.5 620.3 2241.5 627.6C2249.5 634.8 2253.4 641.9 2256.1 645.1"/>
<path d="M2340.2 547.1C2348.9 544.5 2368.3 533.2 2387.7 532.5C2407.1 531.9 2426.1 544.2 2446.2 543.5C2466.3 542.8 2474.6 536.2 2497.3 528.9C2520.1 521.5 2549.0 511.3 2570.4 503.3C2591.9 495.2 2600.9 491.7 2614.3 485.0C2627.7 478.3 2632.8 472.1 2643.5 466.7C2654.3 461.4 2667.4 457.8 2672.8 455.8"/>
<path d="M2457.1 419.2C2459.2 426.6 2464.1 446.0 2468.1 459.4C2472.1 472.8 2474.4 479.6 2479.1 492.3C2483.8 505.1 2491.0 522.2 2493.7 528.9"/>
<path d="M1876.0 554.5C1881.4 555.8 1894.5 556.4 1905.2 561.8C1916.0 567.1 1920.4 579.7 1934.5 583.7C1948.6 587.7 1973.3 583.7 1982.0 583.7"/>
<path d="M1912.5 115.9C1909.9 121.2 1904.6 133.0 1897.9 145.1C1891.2 157.2 1880.0 174.9 1876.0 181.6"/>
<path d="M1045.5 983.6C1057.9 979.5 1092.7 967.7 1113.1 961.6C1133.5 955.6 1142.2 957.4 1157.0 950.7C1171.7 944.0 1183.5 937.8 1193.5 925.1C1203.6 912.4 1199.7 894.6 1211.8 881.2C1223.8 867.8 1238.5 860.0 1259.3 852.0C1280.1 843.9 1309.7 838.7 1325.1 837.4C1340.5 836.0 1337.3 838.0 1343.4 844.7C1349.4 851.4 1350.6 864.5 1358.0 873.9C1365.4 883.3 1378.9 891.8 1383.6 895.8"/>
<path d="M1354.3 640.0C1351.0 649.4 1340.7 671.1 1336.1 691.2C1331.4 711.3 1328.7 729.5 1328.7 749.6C1328.7 769.8 1332.7 783.4 1336.1 800.8C1339.4 818.2 1342.3 831.3 1347.0 844.7C1351.7 858.1 1359.0 868.6 1361.6 873.9"/>
<path d="M1434.7 640.0C1432.7 646.7 1426.5 659.8 1423.8 676.5C1421.1 693.3 1423.5 716.6 1420.1 731.4C1416.8 746.1 1410.9 750.3 1405.5 757.0C1400.1 763.7 1395.6 749.2 1390.9 767.9C1386.2 786.7 1379.9 835.8 1379.9 859.3C1379.9 882.8 1388.9 889.1 1390.9 895.8"/>
<path d="M1390.9 910.5C1396.2 911.8 1412.1 912.4 1420.1 917.8C1428.2 923.1 1430.7 927.6 1434.7 939.7C1438.8 951.8 1444.7 972.8 1442.0 983.6C1439.4 994.3 1429.5 992.2 1420.1 998.2C1410.7 1004.2 1400.3 1009.8 1390.9 1016.5C1381.5 1023.2 1382.3 1028.7 1368.9 1034.7C1355.5 1040.8 1328.5 1041.3 1317.8 1049.4C1307.1 1057.4 1308.5 1068.5 1310.5 1078.6C1312.5 1088.6 1321.4 1096.8 1328.7 1104.2C1336.1 1111.6 1346.7 1116.1 1350.7 1118.8"/>
<path d="M1420.1 917.8C1428.2 919.1 1451.2 925.1 1464.0 925.1C1476.7 925.1 1480.2 916.4 1489.6 917.8C1498.9 919.1 1507.1 927.7 1515.1 932.4C1523.2 937.1 1530.1 941.4 1533.4 943.4"/>
<path d="M1464.0 994.5C1466.7 1000.6 1470.6 1018.7 1478.6 1027.4C1486.6 1036.1 1495.8 1034.0 1507.8 1042.0C1519.9 1050.1 1535.0 1062.6 1544.4 1071.3C1553.8 1080.0 1556.3 1086.2 1559.0 1089.6"/>
<path d="M1610.2 976.3C1612.9 981.6 1615.4 994.8 1624.8 1005.5C1634.2 1016.2 1647.9 1030.7 1661.3 1034.7C1674.7 1038.8 1684.5 1024.1 1697.9 1027.4C1711.3 1030.8 1721.0 1046.3 1734.4 1053.0C1747.8 1059.7 1757.6 1060.6 1771.0 1064.0C1784.4 1067.3 1794.1 1066.6 1807.5 1071.3C1820.9 1076.0 1834.7 1081.5 1844.1 1089.6C1853.5 1097.6 1856.0 1110.5 1858.7 1115.1"/>
<path d="M1610.2 968.9C1615.5 962.2 1630.0 941.8 1639.4 932.4C1648.8 923.0 1650.6 920.5 1661.3 917.8C1672.1 915.1 1684.5 915.1 1697.9 917.8C1711.3 920.5 1721.0 926.4 1734.4 932.4C1747.8 938.4 1757.6 949.3 1771.0 950.7C1784.4 952.0 1794.1 943.1 1807.5 939.7C1820.9 936.4 1832.0 930.4 1844.1 932.4C1856.2 934.4 1868.0 947.3 1873.3 950.7"/>
<path d="M1624.8 640.0C1626.1 650.1 1632.1 674.7 1632.1 694.8C1632.1 714.9 1619.4 732.9 1624.8 749.6C1630.2 766.4 1649.3 774.1 1661.3 786.2C1673.4 798.3 1685.2 810.1 1690.6 815.4"/>
<path d="M1588.2 979.9C1589.6 988.0 1595.6 1012.4 1595.6 1023.8C1595.6 1035.2 1592.3 1034.7 1588.2 1042.0C1584.2 1049.4 1579.0 1055.3 1573.6 1064.0C1568.3 1072.7 1561.7 1084.9 1559.0 1089.6"/>
<path d="M1559.0 1111.5L1610.2 1115.1"/>
<path d="M1328.7 1104.2C1325.4 1096.1 1317.2 1073.1 1310.5 1060.3C1303.8 1047.6 1294.9 1041.4 1292.2 1034.7C1289.5 1028.0 1288.5 1029.1 1295.8 1023.8C1303.2 1018.4 1325.7 1012.9 1332.4 1005.5C1339.1 998.1 1339.1 988.9 1332.4 983.6C1325.7 978.2 1309.2 980.3 1295.8 976.3C1282.4 972.2 1268.7 968.3 1259.3 961.6C1249.9 954.9 1247.4 943.7 1244.7 939.7"/>
<path d="M1897.9 895.8C1899.3 889.1 1895.9 876.1 1905.2 859.3C1914.6 842.5 1933.0 823.9 1949.1 804.5C1965.2 785.0 1972.9 765.4 1993.0 753.3C2013.1 741.2 2033.3 742.0 2058.7 738.7C2084.2 735.3 2111.7 737.0 2131.8 735.0C2152.0 733.0 2148.3 731.7 2168.4 727.7C2188.5 723.7 2218.0 717.1 2241.5 713.1C2264.9 709.1 2281.6 708.5 2296.3 705.8C2311.1 703.1 2317.2 699.8 2321.9 698.5"/>
<path d="M1985.6 640.0C1985.6 650.1 1984.3 674.1 1985.6 694.8C1987.0 715.6 1986.3 733.2 1993.0 753.3C1999.7 773.4 2012.1 785.0 2022.2 804.5C2032.2 823.9 2031.7 845.2 2047.8 859.3C2063.9 873.4 2096.5 871.2 2109.9 881.2C2123.3 891.3 2116.9 905.4 2120.9 914.1C2124.9 922.8 2129.8 926.1 2131.8 928.7"/>
<path d="M2351.1 724.1C2353.8 730.8 2360.4 747.9 2365.8 760.6C2371.1 773.3 2369.7 784.8 2380.4 793.5C2391.1 802.2 2409.5 804.1 2424.2 808.1C2439.0 812.1 2447.4 812.8 2460.8 815.4C2474.2 818.1 2483.9 823.4 2497.3 822.7C2510.7 822.1 2520.5 814.1 2533.9 811.8C2547.3 809.4 2551.7 810.0 2570.4 810.0C2589.2 810.0 2617.5 808.1 2636.2 811.8C2655.0 815.5 2660.7 821.3 2672.8 830.1C2684.8 838.8 2692.0 843.2 2702.0 859.3C2712.1 875.4 2722.2 897.7 2727.6 917.8C2733.0 937.9 2730.6 959.6 2731.3 968.9"/>
<path d="M2314.6 713.1C2311.9 719.8 2304.0 734.9 2300.0 749.6C2296.0 764.4 2296.0 777.4 2292.7 793.5C2289.3 809.6 2287.1 824.0 2281.7 837.4C2276.3 850.8 2270.8 855.9 2263.4 866.6C2256.1 877.3 2245.5 890.5 2241.5 895.8"/>
<path d="M2241.5 640.0C2248.2 644.0 2261.3 656.6 2278.0 661.9C2294.8 667.3 2312.8 663.2 2332.9 669.2C2353.0 675.3 2370.9 693.5 2387.7 694.8C2404.4 696.2 2404.1 683.3 2424.2 676.5C2444.3 669.8 2473.9 663.0 2497.3 658.3C2520.8 653.6 2525.4 650.3 2552.2 651.0C2579.0 651.6 2620.1 661.3 2643.5 661.9C2667.0 662.6 2673.4 656.0 2680.1 654.6"/>
<path d="M2307.3 709.4C2310.6 702.7 2315.5 680.3 2325.6 672.9C2335.6 665.5 2351.7 663.9 2362.1 669.2C2372.5 674.6 2381.5 690.1 2382.2 702.1C2382.9 714.2 2376.2 729.0 2365.8 735.0C2355.4 741.1 2336.3 739.7 2325.6 735.0C2314.8 730.3 2310.6 714.1 2307.3 709.4"/>
<path d="M2460.8 815.4C2463.5 822.1 2471.4 837.9 2475.4 852.0C2479.4 866.1 2485.4 880.1 2482.7 892.2C2480.0 904.3 2471.5 908.4 2460.8 917.8C2450.1 927.2 2437.6 934.0 2424.2 943.4C2410.8 952.7 2401.1 960.2 2387.7 968.9C2374.3 977.7 2363.2 984.2 2351.1 990.9C2339.1 997.6 2332.3 1001.8 2321.9 1005.5C2311.5 1009.2 2299.5 1010.0 2294.5 1011.0"/>
<path d="M2294.5 1011.0C2287.5 1010.6 2268.5 1012.2 2256.1 1009.2C2243.7 1006.1 2238.9 995.2 2226.9 994.5C2214.8 993.9 2203.7 1000.1 2190.3 1005.5C2176.9 1010.9 2168.5 1017.7 2153.8 1023.8C2139.0 1029.8 2123.3 1032.4 2109.9 1038.4C2096.5 1044.4 2096.8 1052.6 2080.7 1056.7C2064.6 1060.7 2032.9 1059.7 2022.2 1060.3"/>
<path d="M2294.5 1011.0C2294.8 1015.3 2292.6 1022.3 2296.3 1034.7C2300.0 1047.1 2310.6 1066.5 2314.6 1078.6C2318.6 1090.7 2319.6 1092.5 2318.3 1100.5C2316.9 1108.6 2309.3 1118.4 2307.3 1122.5"/>
<path d="M1876.0 1034.7C1882.7 1038.1 1899.1 1049.0 1912.5 1053.0C1926.0 1057.0 1935.7 1055.3 1949.1 1056.7C1962.5 1058.0 1978.9 1059.7 1985.6 1060.3"/>
<path d="M1905.2 859.3C1903.9 870.0 1900.6 901.0 1897.9 917.8C1895.2 934.5 1894.0 941.3 1890.6 950.7C1887.3 960.1 1881.7 965.6 1879.7 968.9"/>
<path d="M1876.0 793.5C1884.0 785.5 1905.1 764.4 1919.9 749.6C1934.6 734.9 1945.7 726.5 1956.4 713.1C1967.1 699.7 1974.3 683.3 1978.3 676.5"/>
<path d="M2672.8 830.1C2678.1 830.1 2690.4 822.0 2702.0 830.1C2713.6 838.1 2729.8 865.9 2736.0 873.9"/>
<path d="M1350.7 1121.9C1344.6 1121.3 1329.2 1119.3 1317.8 1118.3C1306.4 1117.3 1299.3 1113.8 1288.5 1116.4C1277.8 1119.1 1271.4 1125.9 1259.3 1132.9C1247.2 1139.9 1236.2 1147.5 1222.7 1154.8C1209.3 1162.2 1198.3 1167.1 1186.2 1173.1C1174.1 1179.1 1165.0 1183.0 1157.0 1187.7C1148.9 1192.4 1146.4 1188.0 1142.3 1198.7C1138.3 1209.4 1133.7 1232.8 1135.0 1246.2C1136.4 1259.6 1147.0 1267.1 1149.6 1271.8"/>
<path d="M1149.6 1271.8C1142.9 1273.8 1126.5 1276.7 1113.1 1282.7C1099.7 1288.8 1087.9 1297.3 1076.5 1304.7C1065.2 1312.0 1056.7 1317.6 1051.0 1323.0C1045.3 1328.3 1046.5 1331.9 1045.5 1333.9"/>
<path d="M1149.6 1271.8C1157.7 1273.8 1181.4 1278.7 1193.5 1282.7C1205.6 1286.8 1209.4 1287.0 1215.4 1293.7C1221.5 1300.4 1222.4 1307.9 1226.4 1319.3C1230.4 1330.7 1232.7 1342.4 1237.4 1355.8C1242.1 1369.2 1247.3 1381.7 1252.0 1392.4C1256.7 1403.1 1254.9 1415.0 1263.0 1414.3C1271.0 1413.7 1283.1 1397.5 1295.8 1388.7C1308.6 1380.0 1317.7 1373.8 1332.4 1366.8C1347.1 1359.8 1362.9 1354.4 1376.3 1350.4C1389.7 1346.3 1393.4 1345.9 1405.5 1344.9C1417.6 1343.9 1433.3 1343.5 1442.0 1344.9C1450.8 1346.2 1445.0 1352.9 1453.0 1352.2C1461.1 1351.5 1479.9 1343.2 1485.9 1341.2"/>
<path d="M1222.7 1154.8C1226.8 1161.5 1238.6 1178.0 1244.7 1191.4C1250.7 1204.8 1259.7 1216.5 1255.6 1227.9C1251.6 1239.3 1230.1 1242.1 1222.7 1253.5C1215.4 1264.9 1216.8 1283.4 1215.4 1290.1"/>
<path d="M1350.7 1121.9C1354.0 1124.6 1362.9 1127.2 1368.9 1136.5C1375.0 1145.9 1378.2 1160.4 1383.6 1173.1C1388.9 1185.8 1393.5 1196.6 1398.2 1206.0C1402.9 1215.4 1401.1 1221.6 1409.2 1224.3C1417.2 1226.9 1429.3 1224.6 1442.0 1220.6C1454.8 1216.6 1467.2 1207.7 1478.6 1202.3C1490.0 1197.0 1499.5 1193.4 1504.2 1191.4"/>
<path d="M1559.0 1111.0C1568.4 1111.6 1596.8 1109.9 1610.2 1114.6C1623.6 1119.3 1626.7 1124.5 1632.1 1136.5C1637.5 1148.6 1640.8 1167.0 1639.4 1180.4C1638.1 1193.8 1628.8 1197.6 1624.8 1209.6C1620.8 1221.7 1617.5 1235.5 1617.5 1246.2C1617.5 1256.9 1616.8 1261.4 1624.8 1268.1C1632.8 1274.8 1649.3 1274.7 1661.3 1282.7C1673.4 1290.8 1680.5 1299.9 1690.6 1312.0C1700.6 1324.0 1708.8 1337.1 1716.2 1348.5C1723.5 1359.9 1732.1 1366.1 1730.8 1374.1C1729.4 1382.2 1714.2 1384.4 1708.9 1392.4C1703.5 1400.4 1702.2 1407.9 1701.5 1418.0C1700.9 1428.0 1702.5 1435.2 1705.2 1447.2C1707.9 1459.3 1713.5 1473.7 1716.2 1483.8C1718.8 1493.8 1719.2 1498.7 1719.8 1502.0"/>
<path d="M1844.1 1100.0C1846.1 1104.0 1855.1 1113.9 1855.1 1121.9C1855.1 1130.0 1850.8 1135.8 1844.1 1143.9C1837.4 1151.9 1822.5 1155.1 1818.5 1165.8C1814.5 1176.5 1824.2 1186.3 1822.2 1202.3C1820.2 1218.4 1817.6 1241.4 1807.5 1253.5C1797.5 1265.6 1774.7 1260.1 1767.3 1268.1C1760.0 1276.2 1765.3 1288.0 1767.3 1297.4C1769.3 1306.7 1777.6 1308.6 1778.3 1319.3C1779.0 1330.0 1779.0 1345.8 1771.0 1355.8C1763.0 1365.9 1741.1 1370.8 1734.4 1374.1"/>
<path d="M1045.5 1392.4C1049.8 1394.4 1063.5 1396.7 1069.2 1403.4C1074.9 1410.1 1068.5 1424.9 1076.5 1428.9C1084.6 1433.0 1101.0 1424.6 1113.1 1425.3C1125.2 1426.0 1134.3 1425.2 1142.3 1432.6C1150.4 1440.0 1150.3 1457.5 1157.0 1465.5C1163.7 1473.5 1169.5 1473.1 1178.9 1476.5C1188.3 1479.8 1198.7 1479.1 1208.1 1483.8C1217.5 1488.5 1223.4 1495.3 1230.1 1502.0C1236.8 1508.7 1239.3 1513.6 1244.7 1520.3C1250.0 1527.0 1255.3 1534.2 1259.3 1538.6C1263.3 1543.0 1265.3 1543.1 1266.6 1544.1"/>
<path d="M1045.5 1450.9L1069.2 1428.9"/>
<path d="M1544.4 1381.4C1546.4 1383.4 1554.0 1383.7 1555.4 1392.4C1556.7 1401.1 1553.0 1419.6 1551.7 1428.9C1550.4 1438.3 1546.0 1438.9 1548.0 1443.6C1550.1 1448.3 1555.3 1450.5 1562.7 1454.5C1570.0 1458.6 1580.9 1459.5 1588.2 1465.5C1595.6 1471.5 1598.8 1477.4 1602.9 1487.4C1606.9 1497.5 1610.2 1509.9 1610.2 1520.3C1610.2 1530.7 1604.2 1539.7 1602.9 1544.1"/>
<path d="M1716.2 1483.8C1719.5 1489.1 1731.8 1502.0 1734.4 1513.0C1737.1 1524.1 1731.5 1538.4 1730.8 1544.1"/>
<path d="M1836.8 1399.7C1830.1 1401.7 1807.6 1401.3 1800.2 1410.7C1792.9 1420.1 1795.2 1437.5 1796.6 1450.9C1797.9 1464.3 1803.5 1474.4 1807.5 1483.8C1811.6 1493.2 1821.2 1494.7 1818.5 1502.0C1815.8 1509.4 1799.6 1516.3 1792.9 1524.0C1786.2 1531.7 1784.0 1540.4 1782.0 1544.1"/>
<path d="M1317.8 1536.8C1327.2 1536.4 1353.5 1533.6 1368.9 1534.9C1384.4 1536.3 1395.8 1542.4 1401.8 1544.1"/>
<path d="M2318.3 1100.0C2315.6 1104.0 2307.0 1114.6 2303.6 1121.9C2300.3 1129.3 2296.0 1132.2 2300.0 1140.2C2304.0 1148.2 2316.2 1157.1 2325.6 1165.8C2334.9 1174.5 2345.8 1179.7 2351.1 1187.7C2356.5 1195.8 2357.5 1200.9 2354.8 1209.6C2352.1 1218.4 2341.9 1225.9 2336.5 1235.2C2331.2 1244.6 2331.6 1252.8 2325.6 1260.8C2319.5 1268.9 2312.3 1275.1 2303.6 1279.1C2294.9 1283.1 2284.1 1278.1 2278.0 1282.7C2272.0 1287.4 2273.4 1295.3 2270.7 1304.7C2268.1 1314.1 2267.4 1324.5 2263.4 1333.9C2259.4 1343.3 2255.5 1347.8 2248.8 1355.8C2242.1 1363.9 2232.2 1369.1 2226.9 1377.8C2221.5 1386.5 2219.2 1394.0 2219.6 1403.4C2219.9 1412.7 2227.4 1417.6 2228.7 1428.9C2230.0 1440.3 2231.2 1456.1 2226.9 1465.5C2222.5 1474.9 2210.3 1472.1 2204.9 1480.1C2199.6 1488.2 2197.6 1501.3 2197.6 1509.4C2197.6 1517.4 2206.3 1517.6 2204.9 1524.0C2203.6 1530.3 2193.0 1540.4 2190.3 1544.1"/>
<path d="M2508.3 1377.8C2510.3 1385.8 2519.9 1408.2 2519.3 1421.6C2518.6 1435.0 2504.7 1438.8 2504.7 1450.9C2504.7 1462.9 2518.6 1470.3 2519.3 1487.4C2519.9 1504.5 2510.3 1533.7 2508.3 1544.1"/>
<path d="M2519.3 1487.4C2528.7 1484.1 2554.4 1470.5 2570.4 1469.2C2586.5 1467.8 2594.9 1470.7 2607.0 1480.1C2619.1 1489.5 2622.8 1513.6 2636.2 1520.3C2649.6 1527.0 2661.8 1521.4 2680.1 1516.7C2698.4 1512.0 2725.8 1498.8 2736.0 1494.7"/>
<path d="M2672.8 1308.3C2676.8 1311.0 2686.7 1321.6 2694.7 1323.0C2702.8 1324.3 2709.1 1317.7 2716.6 1315.6C2724.2 1313.6 2732.5 1312.7 2736.0 1312.0"/>
<path d="M2694.7 1323.0C2694.7 1329.0 2690.7 1343.1 2694.7 1355.8C2698.7 1368.6 2709.1 1379.0 2716.6 1392.4C2724.2 1405.8 2732.5 1422.2 2736.0 1428.9"/>
<path d="M2358.5 1544.1C2367.8 1542.4 2393.5 1535.9 2409.6 1534.9C2425.7 1533.9 2433.4 1539.3 2446.2 1538.6C2458.9 1537.9 2467.7 1530.3 2479.1 1531.3C2490.5 1532.3 2502.9 1541.7 2508.3 1544.1"/>
<path d="M2599.7 1544.1L2636.2 1520.3"/>
</g>
<g fill="none" stroke="#5a5e66" stroke-width="2.700" stroke-linejoin="round" stroke-linecap="round">
<path d="M1082.0 72.0L1085.7 77.5L1094.8 81.1L1104.0 86.6"/>
<path d="M1098.5 157.9L1091.2 178.0L1091.2 218.2"/>
<path d="M1045.5 199.9L1065.6 200.7L1076.5 212.7L1091.2 218.2L1109.4 216.4L1127.7 231.0L1136.9 251.1L1149.6 258.4L1146.0 276.7L1164.3 291.3L1167.9 305.9L1175.2 315.1L1178.9 327.8L1200.8 331.5L1206.3 309.6L1222.7 307.7L1237.4 316.9L1252.0 320.5L1255.6 344.3L1264.8 333.3L1273.9 340.6L1292.2 344.3L1310.5 342.5L1328.7 333.3L1332.4 324.2L1348.8 321.6L1350.7 326.0L1359.8 326.0L1365.3 346.1L1376.3 357.1L1390.9 362.6L1405.5 371.7L1420.1 368.1L1432.9 364.4L1449.4 375.4L1465.8 368.1L1482.3 379.0L1500.5 390.0L1515.1 395.5L1537.1 398.0L1529.8 402.8L1511.5 441.2L1504.2 464.9L1487.7 466.7L1476.8 481.4L1473.1 492.3L1453.0 516.1L1436.6 539.8L1434.7 561.8L1427.4 572.7L1420.1 612.9L1416.5 634.9L1409.2 645.1"/>
<path d="M1409.2 640.0L1400.0 665.6L1387.2 691.2L1378.1 713.1L1381.7 738.7L1390.9 757.0L1385.4 775.2L1376.3 797.2L1372.6 830.1L1365.3 855.6L1370.8 873.9L1379.9 884.9L1383.6 895.8L1390.9 906.8L1396.4 908.6L1405.5 914.1L1423.8 910.5L1438.4 908.6L1442.0 897.7L1454.8 895.8L1464.0 910.5L1478.6 908.6L1500.5 903.2L1518.8 894.0L1533.4 884.9L1551.7 892.2L1566.3 901.3L1588.2 899.5L1599.2 897.7L1593.7 888.5L1604.7 881.2L1621.1 881.2L1630.3 873.9L1624.8 866.6L1610.2 872.1L1595.6 873.9L1584.6 866.6L1580.9 855.6L1588.2 844.7L1599.2 833.7L1617.5 826.4L1619.3 819.1L1628.5 820.9L1632.1 830.1L1639.4 820.9L1650.4 830.1L1657.7 839.2L1654.0 850.2L1643.1 859.3L1661.3 857.5L1670.5 859.3L1672.3 846.5L1683.3 855.6L1690.6 857.5L1694.2 872.1L1708.9 868.4L1723.5 861.1L1745.4 864.8L1767.3 870.3L1792.9 873.9L1811.2 877.6L1829.5 892.2L1844.1 912.3L1869.7 914.1L1900.0 914.9"/>
<path d="M1853.2 914.9L1858.7 928.7L1867.9 939.7L1878.8 947.0L1880.6 961.6L1877.0 979.9L1866.0 990.9L1858.7 1005.5L1851.4 1023.8L1844.1 1042.0L1840.4 1064.0L1836.8 1082.3L1856.9 1084.1L1877.0 1082.3L1900.0 1087.7"/>
<path d="M1849.6 1009.2L1856.9 1020.1L1860.5 1038.4L1866.0 1049.4L1877.0 1060.3L1873.3 1078.6"/>
<path d="M1390.9 906.8L1383.6 908.6L1365.3 917.8L1361.6 928.7L1350.7 932.4L1343.4 943.4L1332.4 950.7L1317.8 950.7L1303.2 954.3L1292.2 947.0L1284.9 939.7L1290.4 930.6L1273.9 928.7L1244.7 928.7L1242.9 943.4L1230.1 954.3L1222.7 965.3L1215.4 976.3L1230.1 978.1L1248.3 974.4L1257.5 983.6L1248.3 994.5L1233.7 1001.8L1230.1 1020.1L1219.1 1034.7L1208.1 1045.7L1197.2 1060.3L1178.9 1074.9L1164.3 1089.6L1160.6 1099.8"/>
<path d="M1160.6 1100.0L1146.0 1109.1L1124.1 1114.6L1109.4 1131.1L1116.8 1145.7L1113.1 1176.8L1098.5 1191.4L1076.5 1209.6L1058.3 1227.9L1045.5 1238.9"/>
<path d="M1045.5 1392.4L1056.4 1381.4L1061.9 1355.8L1058.3 1333.9L1076.5 1315.6L1105.8 1306.5L1127.7 1293.7L1167.9 1293.7L1200.8 1302.9L1197.2 1319.3L1189.9 1328.4L1200.8 1344.9L1210.0 1354.0L1200.8 1370.5L1193.5 1392.4L1197.2 1403.4L1215.4 1407.0L1219.1 1428.9L1226.4 1430.8L1239.2 1445.4L1248.3 1456.4L1252.0 1476.5L1266.6 1498.4L1281.2 1494.7L1290.4 1498.4L1303.2 1483.8L1314.1 1478.3L1332.4 1485.6L1358.0 1465.5L1372.6 1463.7L1376.3 1456.4L1387.2 1461.8L1401.8 1460.0L1412.8 1472.8L1423.8 1471.0L1438.4 1480.1L1453.0 1476.5L1454.8 1458.2L1464.0 1450.9L1482.3 1449.0L1487.7 1436.3L1491.4 1418.0L1511.5 1410.7L1522.5 1388.7L1515.1 1372.3L1502.4 1361.3L1515.1 1348.5L1529.8 1344.9L1544.4 1326.6L1559.0 1315.6L1555.4 1308.3L1570.0 1297.4L1588.2 1290.1L1593.7 1299.2L1591.9 1326.6L1586.4 1352.2L1591.9 1366.8L1610.2 1377.8L1621.1 1392.4L1635.8 1407.0L1654.0 1414.3L1657.7 1410.7L1668.7 1418.0L1683.3 1421.6L1686.9 1436.3L1676.0 1439.9L1670.5 1452.7L1686.9 1460.0L1697.9 1469.2L1703.4 1483.8L1705.2 1498.4L1716.2 1509.4L1729.0 1513.0L1732.6 1494.7L1741.8 1485.6L1727.1 1472.8L1723.5 1458.2L1729.0 1443.6L1738.1 1428.9L1741.8 1410.7L1763.7 1392.4L1774.6 1377.8L1789.3 1352.2L1792.9 1333.9L1787.4 1312.0L1782.0 1297.4L1789.3 1282.7L1803.9 1277.3L1814.9 1279.1L1824.0 1286.4L1831.3 1275.4L1833.1 1312.0L1840.4 1326.6L1855.1 1344.9L1873.3 1352.2L1891.6 1348.5L1900.0 1330.3"/>
<path d="M1252.0 1476.5L1244.7 1487.4L1230.1 1502.0L1211.8 1505.7L1200.8 1513.0L1197.2 1544.1"/>
<path d="M1045.5 1392.4L1058.3 1386.9L1069.2 1377.8"/>
<path d="M1876.0 1352.2L1894.3 1348.5L1897.9 1333.9L1912.5 1328.4L1938.1 1319.3L1956.4 1323.0L1963.7 1348.5L1974.7 1363.2L1978.3 1374.1L1996.6 1370.5L2002.1 1361.3L1987.5 1337.6L1993.0 1319.3L2000.3 1310.2L1985.6 1302.9L1972.9 1304.7L1971.0 1271.8L1978.3 1253.5L1985.6 1240.7L2016.7 1231.6L2020.4 1246.2L2033.2 1259.0L2051.4 1260.8L2067.9 1266.3L2075.2 1260.8L2077.0 1238.9L2069.7 1227.9L2055.1 1227.9L2058.7 1218.8L2066.1 1213.3"/>
<path d="M2544.9 1213.3L2552.2 1213.3L2574.1 1224.3L2592.4 1222.4L2618.0 1229.8L2636.2 1231.6L2639.9 1240.7L2661.8 1240.7L2691.1 1244.4L2713.0 1246.2L2736.0 1260.8"/>
<path d="M1876.0 914.1L1897.9 912.3L1903.4 895.8L1912.5 894.0L1919.9 910.5L1930.8 912.3L1950.9 912.3L1956.4 928.7L1971.0 936.1L1983.8 950.7L1985.6 972.6L2000.3 974.4L2002.1 968.9L2014.9 967.1L2011.2 990.9L2002.1 1001.8L2003.9 1007.3L2022.2 1001.8L2036.8 992.7L2051.4 979.9L2062.4 967.1L2067.9 958.0L2073.4 950.7L2069.7 917.8L2064.2 901.3L2075.2 897.7L2073.4 906.8L2095.3 914.1L2104.4 903.2L2124.5 905.0L2139.2 912.3L2153.8 921.4L2168.4 914.1L2179.4 921.4L2172.1 932.4L2190.3 947.0L2194.0 961.6L2215.9 963.5L2241.5 954.3L2256.1 952.5L2254.3 963.5L2267.1 961.6L2285.4 947.0L2296.3 943.4L2305.5 925.1L2332.9 921.4L2342.0 901.3L2351.1 895.8L2384.0 894.0L2406.0 890.4L2435.2 883.1L2460.8 886.7L2479.1 892.2L2488.2 881.2L2482.7 859.3L2477.2 855.6L2493.7 853.8L2497.3 841.0L2504.7 859.3L2530.2 857.5L2544.9 859.3L2552.2 873.9L2559.5 883.1L2577.8 877.6L2588.7 866.6L2621.6 864.8L2627.1 877.6L2636.2 888.5L2628.9 899.5L2643.5 917.8L2665.5 932.4L2680.1 939.7L2689.2 928.7L2691.1 895.8L2700.2 877.6L2698.4 859.3L2683.7 850.2L2665.5 852.0L2656.3 844.7L2661.8 830.1L2671.0 815.4L2676.4 793.5L2669.1 775.2L2654.5 764.3L2647.2 746.0L2636.2 731.4L2621.6 720.4L2619.8 704.0L2636.2 698.5L2639.9 678.4L2654.5 676.5L2672.8 661.9L2698.4 652.8L2736.0 643.7"/>
<path d="M1876.0 1082.3L1897.9 1087.7L1930.8 1096.9L1934.5 1126.1L1967.4 1140.7L1985.6 1159.0L2014.9 1151.7L2018.5 1129.8L2033.2 1126.1L2044.1 1107.8L2055.1 1104.2L2066.1 1118.8L2077.0 1126.1L2075.2 1151.7L2091.6 1159.0L2124.5 1149.9L2139.2 1166.3L2139.2 1177.3L2168.4 1188.2L2204.9 1184.6L2215.9 1166.3L2223.2 1129.8L2241.5 1115.1L2263.4 1109.7L2281.7 1107.8L2296.3 1115.1L2314.6 1104.2L2325.6 1107.8L2351.1 1100.5L2369.4 1111.5L2387.7 1107.8L2406.0 1098.7L2446.2 1084.1L2460.8 1074.9L2486.4 1071.3L2493.7 1078.6L2486.4 1093.2L2471.8 1100.5L2471.8 1122.5L2482.7 1144.4L2497.3 1151.7L2508.3 1177.3L2522.9 1188.2L2533.9 1206.5L2544.9 1213.1"/>
<path d="M2075.2 1151.7L2069.7 1170.0L2073.4 1188.2L2066.1 1213.1"/>
<path d="M1876.0 936.1L1881.5 950.7L1879.7 968.9L1876.0 972.6"/>
<path d="M2555.8 72.0L2554.0 90.3L2537.5 108.5L2544.9 126.8L2563.1 141.4L2566.8 159.7L2577.8 170.7L2581.4 189.0L2592.4 196.3L2594.2 218.2L2607.0 232.8L2621.6 247.4L2628.9 260.2L2650.9 262.1L2652.7 267.5"/>
<path d="M2716.6 320.5L2724.0 335.2L2736.0 346.1"/>
</g>
<g font-family="'Liberation Sans',sans-serif">
<text x="1537.1" y="202.5" font-size="24" font-style="normal" font-weight="400" textLength="116.2" lengthAdjust="spacingAndGlyphs" fill="#fff" stroke="#fff" stroke-width="4" stroke-linejoin="round" opacity="0.9">Mannheim</text>
<text x="1537.1" y="202.5" font-size="24" font-style="normal" font-weight="400" textLength="116.2" lengthAdjust="spacingAndGlyphs" fill="#333" stroke="#333" stroke-width="0.9">Mannheim</text>
<circle cx="1594.5" cy="209.1" r="3.100" fill="#000" stroke="#fff" stroke-width="1"/>
<text x="1174.5" y="295.7" font-size="24" font-style="normal" font-weight="400" textLength="136.7" lengthAdjust="spacingAndGlyphs" fill="#fff" stroke="#fff" stroke-width="4" stroke-linejoin="round" opacity="0.9">Saarbrücken</text>
<text x="1174.5" y="295.7" font-size="24" font-style="normal" font-weight="400" textLength="136.7" lengthAdjust="spacingAndGlyphs" fill="#333" stroke="#333" stroke-width="0.9">Saarbrücken</text>
<circle cx="1242.1" cy="302.6" r="3.100" fill="#000" stroke="#fff" stroke-width="1"/>
<text x="1718.7" y="461.6" font-size="24" font-style="normal" font-weight="400" textLength="93.2" lengthAdjust="spacingAndGlyphs" fill="#fff" stroke="#fff" stroke-width="4" stroke-linejoin="round" opacity="0.9">Stuttgart</text>
<text x="1718.7" y="461.6" font-size="24" font-style="normal" font-weight="400" textLength="93.2" lengthAdjust="spacingAndGlyphs" fill="#333" stroke="#333" stroke-width="0.9">Stuttgart</text>
<circle cx="1765.1" cy="469.3" r="3.100" fill="#000" stroke="#fff" stroke-width="1"/>
<text x="1363.5" y="531.4" font-size="24" font-style="normal" font-weight="400" textLength="119.5" lengthAdjust="spacingAndGlyphs" fill="#fff" stroke="#fff" stroke-width="4" stroke-linejoin="round" opacity="0.9">Strasbourg</text>
<text x="1363.5" y="531.4" font-size="24" font-style="normal" font-weight="400" textLength="119.5" lengthAdjust="spacingAndGlyphs" fill="#333" stroke="#333" stroke-width="0.9">Strasbourg</text>
<circle cx="1423.0" cy="539.1" r="3.100" fill="#000" stroke="#fff" stroke-width="1"/>
<text x="1021.0" y="337.0" font-size="24" font-style="normal" font-weight="400" textLength="51.9" lengthAdjust="spacingAndGlyphs" fill="#fff" stroke="#fff" stroke-width="4" stroke-linejoin="round" opacity="0.9">Metz</text>
<text x="1021.0" y="337.0" font-size="24" font-style="normal" font-weight="400" textLength="51.9" lengthAdjust="spacingAndGlyphs" fill="#333" stroke="#333" stroke-width="0.9">Metz</text>
<circle cx="1046.6" cy="344.3" r="3.100" fill="#000" stroke="#fff" stroke-width="1"/>
<text x="1014.8" y="492.3" font-size="24" font-style="normal" font-weight="400" textLength="68.0" lengthAdjust="spacingAndGlyphs" fill="#fff" stroke="#fff" stroke-width="4" stroke-linejoin="round" opacity="0.9">Nancy</text>
<text x="1014.8" y="492.3" font-size="24" font-style="normal" font-weight="400" textLength="68.0" lengthAdjust="spacingAndGlyphs" fill="#333" stroke="#333" stroke-width="0.9">Nancy</text>
<circle cx="1047.3" cy="499.6" r="3.100" fill="#000" stroke="#fff" stroke-width="1"/>
<text x="977.1" y="93.9" font-size="30" font-style="italic" font-weight="400" textLength="126.8" lengthAdjust="spacingAndGlyphs" fill="#fff" stroke="#fff" stroke-width="4" stroke-linejoin="round" opacity="0.9">Luxembourg</text>
<text x="977.1" y="93.9" font-size="30" font-style="italic" font-weight="400" textLength="126.8" lengthAdjust="spacingAndGlyphs" fill="#334" stroke="#334" stroke-width="0.9">Luxembourg</text>
<text x="969.8" y="156.8" font-size="24" font-style="normal" font-weight="400" textLength="133.0" lengthAdjust="spacingAndGlyphs" fill="#fff" stroke="#fff" stroke-width="4" stroke-linejoin="round" opacity="0.9">Luxembourg</text>
<text x="969.8" y="156.8" font-size="24" font-style="normal" font-weight="400" textLength="133.0" lengthAdjust="spacingAndGlyphs" fill="#333" stroke="#333" stroke-width="0.9">Luxembourg</text>
<text x="1891.4" y="88.4" font-size="24" font-style="normal" font-weight="400" textLength="107.1" lengthAdjust="spacingAndGlyphs" fill="#fff" stroke="#fff" stroke-width="4" stroke-linejoin="round" opacity="0.9">Würzburg</text>
<text x="1891.4" y="88.4" font-size="24" font-style="normal" font-weight="400" textLength="107.1" lengthAdjust="spacingAndGlyphs" fill="#333" stroke="#333" stroke-width="0.9">Würzburg</text>
<circle cx="1944.3" cy="96.9" r="3.100" fill="#000" stroke="#fff" stroke-width="1"/>
<text x="2157.4" y="214.5" font-size="24" font-style="normal" font-weight="400" textLength="122.4" lengthAdjust="spacingAndGlyphs" fill="#fff" stroke="#fff" stroke-width="4" stroke-linejoin="round" opacity="0.9">Nuremberg</text>
<text x="2157.4" y="214.5" font-size="24" font-style="normal" font-weight="400" textLength="122.4" lengthAdjust="spacingAndGlyphs" fill="#333" stroke="#333" stroke-width="0.9">Nuremberg</text>
<circle cx="2218.1" cy="222.2" r="3.100" fill="#000" stroke="#fff" stroke-width="1"/>
<text x="2397.9" y="373.5" font-size="24" font-style="normal" font-weight="400" textLength="129.8" lengthAdjust="spacingAndGlyphs" fill="#fff" stroke="#fff" stroke-width="4" stroke-linejoin="round" opacity="0.9">Regensburg</text>
<text x="2397.9" y="373.5" font-size="24" font-style="normal" font-weight="400" textLength="129.8" lengthAdjust="spacingAndGlyphs" fill="#333" stroke="#333" stroke-width="0.9">Regensburg</text>
<circle cx="2461.5" cy="381.2" r="3.100" fill="#000" stroke="#fff" stroke-width="1"/>
<text x="2247.7" y="467.8" font-size="24" font-style="normal" font-weight="400" textLength="107.8" lengthAdjust="spacingAndGlyphs" fill="#fff" stroke="#fff" stroke-width="4" stroke-linejoin="round" opacity="0.9">Ingolstadt</text>
<text x="2247.7" y="467.8" font-size="24" font-style="normal" font-weight="400" textLength="107.8" lengthAdjust="spacingAndGlyphs" fill="#333" stroke="#333" stroke-width="0.9">Ingolstadt</text>
<circle cx="2301.1" cy="474.8" r="3.100" fill="#000" stroke="#fff" stroke-width="1"/>
<text x="1937.4" y="599.4" font-size="24" font-style="normal" font-weight="400" textLength="42.8" lengthAdjust="spacingAndGlyphs" fill="#fff" stroke="#fff" stroke-width="4" stroke-linejoin="round" opacity="0.9">Ulm</text>
<text x="1937.4" y="599.4" font-size="24" font-style="normal" font-weight="400" textLength="42.8" lengthAdjust="spacingAndGlyphs" fill="#333" stroke="#333" stroke-width="0.9">Ulm</text>
<circle cx="1958.2" cy="607.1" r="3.100" fill="#000" stroke="#fff" stroke-width="1"/>
<text x="1385.4" y="712.4" font-size="24" font-style="normal" font-weight="400" textLength="123.5" lengthAdjust="spacingAndGlyphs" fill="#fff" stroke="#fff" stroke-width="4" stroke-linejoin="round" opacity="0.9">Freiburg im</text>
<text x="1385.4" y="712.4" font-size="24" font-style="normal" font-weight="400" textLength="123.5" lengthAdjust="spacingAndGlyphs" fill="#333" stroke="#333" stroke-width="0.9">Freiburg im</text>
<text x="1399.3" y="743.4" font-size="24" font-style="normal" font-weight="400" textLength="95.8" lengthAdjust="spacingAndGlyphs" fill="#fff" stroke="#fff" stroke-width="4" stroke-linejoin="round" opacity="0.9">Breisgau</text>
<text x="1399.3" y="743.4" font-size="24" font-style="normal" font-weight="400" textLength="95.8" lengthAdjust="spacingAndGlyphs" fill="#333" stroke="#333" stroke-width="0.9">Breisgau</text>
<circle cx="1446.8" cy="750.7" r="3.100" fill="#000" stroke="#fff" stroke-width="1"/>
<text x="1270.3" y="831.9" font-size="24" font-style="normal" font-weight="400" textLength="108.9" lengthAdjust="spacingAndGlyphs" fill="#fff" stroke="#fff" stroke-width="4" stroke-linejoin="round" opacity="0.9">Mulhouse</text>
<text x="1270.3" y="831.9" font-size="24" font-style="normal" font-weight="400" textLength="108.9" lengthAdjust="spacingAndGlyphs" fill="#333" stroke="#333" stroke-width="0.9">Mulhouse</text>
<circle cx="1324.7" cy="839.9" r="3.100" fill="#000" stroke="#fff" stroke-width="1"/>
<text x="1355.1" y="898.8" font-size="24" font-style="normal" font-weight="400" textLength="58.5" lengthAdjust="spacingAndGlyphs" fill="#fff" stroke="#fff" stroke-width="4" stroke-linejoin="round" opacity="0.9">Basel</text>
<text x="1355.1" y="898.8" font-size="24" font-style="normal" font-weight="400" textLength="58.5" lengthAdjust="spacingAndGlyphs" fill="#333" stroke="#333" stroke-width="0.9">Basel</text>
<circle cx="1383.2" cy="906.8" r="3.100" fill="#000" stroke="#fff" stroke-width="1"/>
<text x="1577.3" y="963.8" font-size="24" font-style="normal" font-weight="400" textLength="69.4" lengthAdjust="spacingAndGlyphs" fill="#fff" stroke="#fff" stroke-width="4" stroke-linejoin="round" opacity="0.9">Zurich</text>
<text x="1577.3" y="963.8" font-size="24" font-style="normal" font-weight="400" textLength="69.4" lengthAdjust="spacingAndGlyphs" fill="#333" stroke="#333" stroke-width="0.9">Zurich</text>
<circle cx="1612.0" cy="971.9" r="3.100" fill="#000" stroke="#fff" stroke-width="1"/>
<text x="1327.3" y="1114.4" font-size="24" font-style="normal" font-weight="400" textLength="49.0" lengthAdjust="spacingAndGlyphs" fill="#fff" stroke="#fff" stroke-width="4" stroke-linejoin="round" opacity="0.9">Bern</text>
<text x="1327.3" y="1114.4" font-size="24" font-style="normal" font-weight="400" textLength="49.0" lengthAdjust="spacingAndGlyphs" fill="#333" stroke="#333" stroke-width="0.9">Bern</text>
<circle cx="1351.4" cy="1121.7" r="3.100" fill="#000" stroke="#fff" stroke-width="1"/>
<text x="1518.8" y="1079.7" font-size="20" font-style="normal" font-weight="400" textLength="73.8" lengthAdjust="spacingAndGlyphs" fill="#fff" stroke="#fff" stroke-width="4" stroke-linejoin="round" opacity="0.9">Lucerne</text>
<text x="1518.8" y="1079.7" font-size="20" font-style="normal" font-weight="400" textLength="73.8" lengthAdjust="spacingAndGlyphs" fill="#444" stroke="#444" stroke-width="0.1">Lucerne</text>
<circle cx="1556.1" cy="1085.9" r="3.100" fill="#000" stroke="#fff" stroke-width="1"/>
<text x="1471.3" y="1183.5" font-size="32" font-style="italic" font-weight="400" textLength="135.2" lengthAdjust="spacingAndGlyphs" fill="#fff" stroke="#fff" stroke-width="4" stroke-linejoin="round" opacity="0.9">Switzerland</text>
<text x="1471.3" y="1183.5" font-size="32" font-style="italic" font-weight="400" textLength="135.2" lengthAdjust="spacingAndGlyphs" fill="#334" stroke="#334" stroke-width="0.2">Switzerland</text>
<text x="1780.1" y="1064.0" font-size="26" font-style="italic" font-weight="400" textLength="146.9" lengthAdjust="spacingAndGlyphs" fill="#fff" stroke="#fff" stroke-width="4" stroke-linejoin="round" opacity="0.9">Liechtenstein</text>
<text x="1780.1" y="1064.0" font-size="26" font-style="italic" font-weight="400" textLength="146.9" lengthAdjust="spacingAndGlyphs" fill="#334" stroke="#334" stroke-width="0.2">Liechtenstein</text>
<text x="2297.1" y="692.3" font-size="24" font-style="normal" font-weight="400" textLength="81.5" lengthAdjust="spacingAndGlyphs" fill="#fff" stroke="#fff" stroke-width="4" stroke-linejoin="round" opacity="0.9">Munich</text>
<text x="2297.1" y="692.3" font-size="24" font-style="normal" font-weight="400" textLength="81.5" lengthAdjust="spacingAndGlyphs" fill="#333" stroke="#333" stroke-width="0.9">Munich</text>
<circle cx="2337.3" cy="700.7" r="3.100" fill="#000" stroke="#fff" stroke-width="1"/>
<text x="2417.7" y="794.2" font-size="20" font-style="normal" font-weight="400" textLength="103.4" lengthAdjust="spacingAndGlyphs" fill="#fff" stroke="#fff" stroke-width="4" stroke-linejoin="round" opacity="0.9">Rosenheim</text>
<text x="2417.7" y="794.2" font-size="20" font-style="normal" font-weight="400" textLength="103.4" lengthAdjust="spacingAndGlyphs" fill="#444" stroke="#444" stroke-width="0.1">Rosenheim</text>
<circle cx="2469.2" cy="801.2" r="3.100" fill="#000" stroke="#fff" stroke-width="1"/>
<text x="2641.7" y="813.6" font-size="24" font-style="normal" font-weight="400" textLength="96.9" lengthAdjust="spacingAndGlyphs" fill="#fff" stroke="#fff" stroke-width="4" stroke-linejoin="round" opacity="0.9">Salzburg</text>
<text x="2641.7" y="813.6" font-size="24" font-style="normal" font-weight="400" textLength="96.9" lengthAdjust="spacingAndGlyphs" fill="#333" stroke="#333" stroke-width="0.9">Salzburg</text>
<circle cx="2689.2" cy="821.7" r="3.100" fill="#000" stroke="#fff" stroke-width="1"/>
<text x="2240.4" y="1001.8" font-size="24" font-style="normal" font-weight="400" textLength="107.1" lengthAdjust="spacingAndGlyphs" fill="#fff" stroke="#fff" stroke-width="4" stroke-linejoin="round" opacity="0.9">Innsbruck</text>
<text x="2240.4" y="1001.8" font-size="24" font-style="normal" font-weight="400" textLength="107.1" lengthAdjust="spacingAndGlyphs" fill="#333" stroke="#333" stroke-width="0.9">Innsbruck</text>
<circle cx="2294.5" cy="1010.6" r="3.100" fill="#000" stroke="#fff" stroke-width="1"/>
<text x="1104.0" y="1261.9" font-size="24" font-style="normal" font-weight="400" textLength="104.9" lengthAdjust="spacingAndGlyphs" fill="#fff" stroke="#fff" stroke-width="4" stroke-linejoin="round" opacity="0.9">Lausanne</text>
<text x="1104.0" y="1261.9" font-size="24" font-style="normal" font-weight="400" textLength="104.9" lengthAdjust="spacingAndGlyphs" fill="#333" stroke="#333" stroke-width="0.9">Lausanne</text>
<circle cx="1155.5" cy="1270.3" r="3.100" fill="#000" stroke="#fff" stroke-width="1"/>
<text x="999.8" y="1373.4" font-size="24" font-style="normal" font-weight="400" textLength="79.7" lengthAdjust="spacingAndGlyphs" fill="#fff" stroke="#fff" stroke-width="4" stroke-linejoin="round" opacity="0.9">Geneva</text>
<text x="999.8" y="1373.4" font-size="24" font-style="normal" font-weight="400" textLength="79.7" lengthAdjust="spacingAndGlyphs" fill="#333" stroke="#333" stroke-width="0.9">Geneva</text>
<text x="1676.0" y="1442.8" font-size="20" font-style="normal" font-weight="400" textLength="69.4" lengthAdjust="spacingAndGlyphs" fill="#fff" stroke="#fff" stroke-width="4" stroke-linejoin="round" opacity="0.9">Lugano</text>
<text x="1676.0" y="1442.8" font-size="20" font-style="normal" font-weight="400" textLength="69.4" lengthAdjust="spacingAndGlyphs" fill="#444" stroke="#444" stroke-width="0.1">Lugano</text>
<circle cx="1710.0" cy="1450.1" r="3.100" fill="#000" stroke="#fff" stroke-width="1"/>
<text x="1833.1" y="1547.7" font-size="24" font-style="normal" font-weight="400" textLength="98.0" lengthAdjust="spacingAndGlyphs" fill="#fff" stroke="#fff" stroke-width="4" stroke-linejoin="round" opacity="0.9">Bergamo</text>
<text x="1833.1" y="1547.7" font-size="24" font-style="normal" font-weight="400" textLength="98.0" lengthAdjust="spacingAndGlyphs" fill="#333" stroke="#333" stroke-width="0.9">Bergamo</text>
<text x="2196.9" y="1270.0" font-size="24" font-style="normal" font-weight="400" textLength="175.4" lengthAdjust="spacingAndGlyphs" fill="#fff" stroke="#fff" stroke-width="4" stroke-linejoin="round" opacity="0.9">Bolzano - Bozen</text>
<text x="2196.9" y="1270.0" font-size="24" font-style="normal" font-weight="400" textLength="175.4" lengthAdjust="spacingAndGlyphs" fill="#333" stroke="#333" stroke-width="0.9">Bolzano - Bozen</text>
<circle cx="2284.6" cy="1278.4" r="3.100" fill="#000" stroke="#fff" stroke-width="1"/>
<text x="2196.2" y="1419.8" font-size="24" font-style="normal" font-weight="400" textLength="69.4" lengthAdjust="spacingAndGlyphs" fill="#fff" stroke="#fff" stroke-width="4" stroke-linejoin="round" opacity="0.9">Trento</text>
<text x="2196.2" y="1419.8" font-size="24" font-style="normal" font-weight="400" textLength="69.4" lengthAdjust="spacingAndGlyphs" fill="#333" stroke="#333" stroke-width="0.9">Trento</text>
<circle cx="2229.4" cy="1427.9" r="3.100" fill="#000" stroke="#fff" stroke-width="1"/>
</g>
</svg><div style="position:absolute;left:1063.80px;top:92.10px;width:440.40px;height:65.80px;background:#fff;border-radius:7px;box-shadow:0 0 18px 2px rgba(0,0,0,.13);"></div><svg class="ic" style="left:1076.76px;top:107.66px;" width="36.3" height="36.3" viewBox="0 0 24 24" fill="#757575"><path d="M15.5 14h-.79l-.28-.27C15.41 12.59 16 11.11 16 9.5 16 5.910 13.090 3 9.500 3S3 5.910 3 9.500 5.910 16 9.500 16c1.610 0 3.090-.590 4.230-1.570l.27.280v.790l5 4.990L20.490 19l-4.990-5zm-6 0C7.010 14 5 11.990 5 9.500S7.010 5 9.500 5 14 7.010 14 9.500 11.990 14 9.500 14z"/></svg><span class="t" style="left:1128.12px;top:107.04px;font-size:27px;line-height:35px;color:#757575;letter-spacing:0.188px;">Search</span><div style="position:absolute;left:2572.30px;top:92.10px;width:145.40px;height:50.40px;background:#1c1f24;border-radius:6px;box-shadow:0 0 0 3.600px rgba(0,0,0,.1);"></div><span class="t" style="left:2585.82px;top:103.41px;font-size:21.6px;line-height:28px;color:#a4a4a4;font-weight:700;letter-spacing:0.266px;">Zoom: 6.52</span><div style="position:absolute;left:2664.70px;top:161.50px;width:53.00px;height:159.80px;background:#1c1f24;border-radius:6px;box-shadow:0 0 0 3.600px rgba(0,0,0,.1);"></div><div style="position:absolute;left:2664.70px;top:214.60px;width:53.00px;height:2.10px;background:#c4c5c6;"></div><div style="position:absolute;left:2664.70px;top:268.00px;width:53.00px;height:2.10px;background:#c4c5c6;"></div><svg class="ic" style="left:2664.7px;top:161.5px" width="53" height="160" viewBox="0 0 53 160"><path d="M26.500 19.200v15.200M18.900 26.800h15.200M18.900 80.200h15.200" stroke="#9c9c9c" stroke-width="5.500" stroke-linecap="round" fill="none"/><path d="M26.500 119.800l6.200 12.900h-12.400z" fill="#9c9c9c"/><path d="M26.500 148.200l6.200-12.900h-12.400z" fill="#5e5e5e"/></svg><div style="position:absolute;left:2674.00px;top:1482.70px;width:43.60px;height:43.60px;background:#fff;border-radius:50%;"></div><svg class="ic" style="left:2682.300px;top:1491px" width="27" height="27" viewBox="0 0 20 20"><path d="M10 0a10 10 0 100 20 10 10 0 000-20zm1.400 15.500h-2.800v-7h2.800zm-1.400-8.300a1.600 1.600 0 110-3.200 1.600 1.600 0 010 3.200z" fill="#000"/></svg></div></div>
</body></html>
